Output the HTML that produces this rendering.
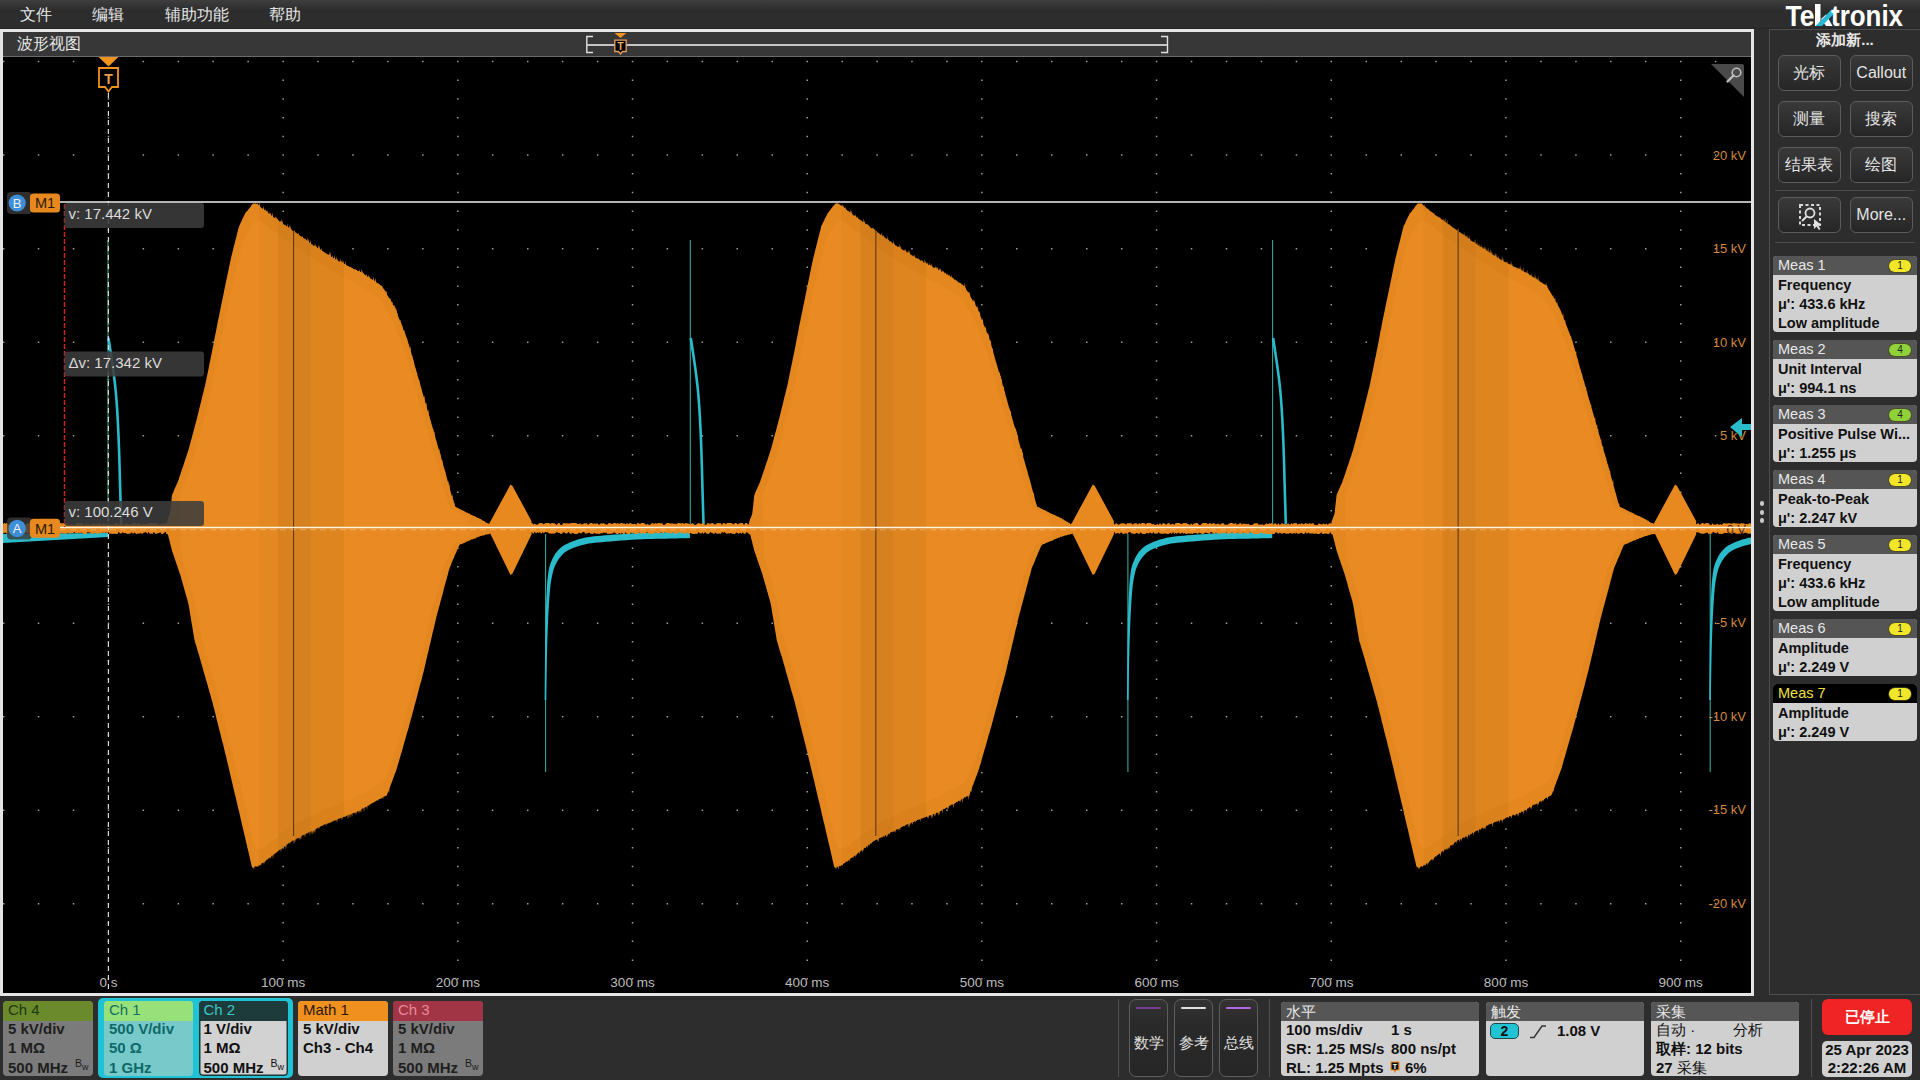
<!DOCTYPE html><html><head><meta charset="utf-8"><title>scope</title><style>
html,body{margin:0;padding:0}
body{width:1920px;height:1080px;overflow:hidden;background:#2d2d2d;font-family:"Liberation Sans",sans-serif;position:relative}
.a{position:absolute}
.menu{left:0;top:0;width:1920px;height:29px;background:linear-gradient(#3e3e3e 0px,#2c2c2c 11px,#2e2e2e 27px,#242424 29px)}
.mt{top:5px;font-size:16px;color:#e6e6e6;line-height:20px}
.frame{left:0;top:29px;width:1748px;height:961px;border:3px solid #e4e4e4;border-right-width:3px}
.title{left:3px;top:32px;width:1748px;height:24px;background:#373737;border-bottom:1px solid #6a6a6a}
.plotbg{left:3px;top:57px;width:1748px;height:936px;background:#000}
.rpanel{left:1769px;top:29px;width:151px;height:964px;border-left:1px solid #4e4e4e;border-top:1px solid #4e4e4e;border-bottom:1px solid #4e4e4e}
.btn{width:62.5px;height:36px;border:1px solid #5c5c5c;border-radius:6px;background:linear-gradient(#393939,#262626);color:#e4e4e4;font-size:16px;text-align:center;line-height:34px;box-sizing:border-box}
.sep{height:1px;background:#4a4a4a}
.meas{left:1773px;width:144px;border-radius:4px;overflow:hidden;background:#d0d0d0}
.mh{height:19px;background:#555;color:#e8e8e8;font-size:14.5px;line-height:19px;padding-left:5px;position:relative}
.mb{color:#111;font-weight:bold;font-size:14.5px;line-height:19px;padding-left:5px;position:relative;top:1px}
.badge{position:absolute;right:6px;top:4px;width:22px;height:11.5px;border-radius:6px;background:#f2e62a;color:#222;font-size:10px;line-height:11.5px;text-align:center;box-shadow:0 0 0 0.8px #4a4a1a}
.green{background:#8ed13a}
.card{top:1001px;height:75px;border-radius:4px;overflow:hidden}
.ch{height:19.5px;font-size:15px;line-height:18px;padding-left:5px}
.cl{position:absolute;left:5px;font-weight:bold;font-size:15px;line-height:19px;white-space:nowrap}
.bw{position:absolute;left:67px;top:-4px;font-size:10.5px;font-weight:normal}
.vbtn{top:999px;width:39px;height:78px;border:1px solid #5e5e5e;border-radius:7px;background:linear-gradient(#333,#2a2a2a 30%,#262626);box-sizing:border-box;color:#e0e0e0;font-size:15px;text-align:center}
.vbtn .ln{position:absolute;left:6px;right:6px;top:7px;height:2px;border-radius:2px}
.vsep{top:999px;width:1px;height:78px;background:#505050}
.ic{top:1002px;height:74px;border-radius:4px;overflow:hidden;background:#d0d0d0}
.ich{height:19px;background:#565656;color:#e8e8e8;font-size:15px;line-height:19px;padding-left:5px}
.icb{color:#111;font-weight:bold;font-size:15px;line-height:19px;padding-left:5px;position:relative;top:-1px}
</style></head><body><div class="a menu"></div><div class="a mt" style="left:20px">文件</div><div class="a mt" style="left:92px">编辑</div><div class="a mt" style="left:165px">辅助功能</div><div class="a mt" style="left:269px">帮助</div><svg class="a" style="left:1780px;top:0px" width="130" height="30" viewBox="1780 0 130 30" font-family="Liberation Sans, sans-serif" font-weight="bold"><text x="1785.5" y="26" font-size="30" fill="#fff" textLength="29" lengthAdjust="spacingAndGlyphs">Te</text><path d="M1815 4 H1820.5 V26 H1815Z" fill="#fff"/><path d="M1821 19 L1826 14.5 L1832.5 26 H1826Z" fill="#fff"/><path d="M1815.5 26 H1822 L1838 9.5 H1831.5Z" fill="#2bb8d6"/><text x="1831" y="26" font-size="30" fill="#fff" textLength="72" lengthAdjust="spacingAndGlyphs">tronix</text></svg><div class="a frame"></div><div class="a title"></div><div class="a" style="left:17px;top:34px;font-size:16px;color:#e8e8e8;line-height:20px">波形视图</div><svg class="a" style="left:580px;top:30px" width="600" height="26" viewBox="580 30 600 26"><path d="M593 36.5 H586.8 V52.5 H593" stroke="#e0e0e0" stroke-width="1.4" fill="none"/><path d="M1161 36.5 H1167.5 V52.5 H1161" stroke="#e0e0e0" stroke-width="1.4" fill="none"/><path d="M587 45 H1167" stroke="#c4c4c4" stroke-width="2" fill="none"/><path d="M614.5 33 H626.5 L620.5 38Z" fill="#f0921e"/><path d="M614.8 40.2 H626.2 V51.5 H622.5 L620.5 54 L618.5 51.5 H614.8Z" fill="#000" stroke="#e8a060" stroke-width="1.3"/><text x="620.5" y="50" text-anchor="middle" font-family="Liberation Sans" font-weight="bold" font-size="10" fill="#e8b070">T</text></svg><div class="a plotbg"></div><svg class="a" style="left:3px;top:57px" width="1748" height="936" viewBox="3 57 1748 936" font-family="Liberation Sans, sans-serif"><path d="M2.9 60.8h1.5v1.5h-1.5zM2.9 154.3h1.5v1.5h-1.5zM2.9 247.9h1.5v1.5h-1.5zM2.9 341.6h1.5v1.5h-1.5zM2.9 435.1h1.5v1.5h-1.5zM2.9 528.8h1.5v1.5h-1.5zM2.9 622.4h1.5v1.5h-1.5zM2.9 716.0h1.5v1.5h-1.5zM2.9 809.5h1.5v1.5h-1.5zM2.9 903.1h1.5v1.5h-1.5zM37.8 60.8h1.5v1.5h-1.5zM37.8 154.3h1.5v1.5h-1.5zM37.8 247.9h1.5v1.5h-1.5zM37.8 341.6h1.5v1.5h-1.5zM37.8 435.1h1.5v1.5h-1.5zM37.8 528.8h1.5v1.5h-1.5zM37.8 622.4h1.5v1.5h-1.5zM37.8 716.0h1.5v1.5h-1.5zM37.8 809.5h1.5v1.5h-1.5zM37.8 903.1h1.5v1.5h-1.5zM72.8 60.8h1.5v1.5h-1.5zM72.8 154.3h1.5v1.5h-1.5zM72.8 247.9h1.5v1.5h-1.5zM72.8 341.6h1.5v1.5h-1.5zM72.8 435.1h1.5v1.5h-1.5zM72.8 528.8h1.5v1.5h-1.5zM72.8 622.4h1.5v1.5h-1.5zM72.8 716.0h1.5v1.5h-1.5zM72.8 809.5h1.5v1.5h-1.5zM72.8 903.1h1.5v1.5h-1.5zM107.7 60.8h1.5v1.5h-1.5zM107.7 79.5h1.5v1.5h-1.5zM107.7 98.2h1.5v1.5h-1.5zM107.7 117.0h1.5v1.5h-1.5zM107.7 135.7h1.5v1.5h-1.5zM107.7 154.3h1.5v1.5h-1.5zM107.7 173.1h1.5v1.5h-1.5zM107.7 191.8h1.5v1.5h-1.5zM107.7 210.6h1.5v1.5h-1.5zM107.7 229.2h1.5v1.5h-1.5zM107.7 247.9h1.5v1.5h-1.5zM107.7 266.6h1.5v1.5h-1.5zM107.7 285.4h1.5v1.5h-1.5zM107.7 304.1h1.5v1.5h-1.5zM107.7 322.9h1.5v1.5h-1.5zM107.7 341.6h1.5v1.5h-1.5zM107.7 360.2h1.5v1.5h-1.5zM107.7 378.9h1.5v1.5h-1.5zM107.7 397.8h1.5v1.5h-1.5zM107.7 416.4h1.5v1.5h-1.5zM107.7 435.1h1.5v1.5h-1.5zM107.7 453.9h1.5v1.5h-1.5zM107.7 472.6h1.5v1.5h-1.5zM107.7 491.4h1.5v1.5h-1.5zM107.7 510.1h1.5v1.5h-1.5zM107.7 528.8h1.5v1.5h-1.5zM107.7 547.5h1.5v1.5h-1.5zM107.7 566.1h1.5v1.5h-1.5zM107.7 585.0h1.5v1.5h-1.5zM107.7 603.6h1.5v1.5h-1.5zM107.7 622.4h1.5v1.5h-1.5zM107.7 641.0h1.5v1.5h-1.5zM107.7 659.8h1.5v1.5h-1.5zM107.7 678.5h1.5v1.5h-1.5zM107.7 697.2h1.5v1.5h-1.5zM107.7 716.0h1.5v1.5h-1.5zM107.7 734.6h1.5v1.5h-1.5zM107.7 753.4h1.5v1.5h-1.5zM107.7 772.1h1.5v1.5h-1.5zM107.7 790.9h1.5v1.5h-1.5zM107.7 809.5h1.5v1.5h-1.5zM107.7 828.2h1.5v1.5h-1.5zM107.7 847.0h1.5v1.5h-1.5zM107.7 865.8h1.5v1.5h-1.5zM107.7 884.5h1.5v1.5h-1.5zM107.7 903.1h1.5v1.5h-1.5zM107.7 921.9h1.5v1.5h-1.5zM107.7 940.5h1.5v1.5h-1.5zM107.7 959.4h1.5v1.5h-1.5zM107.7 978.0h1.5v1.5h-1.5zM142.6 60.8h1.5v1.5h-1.5zM142.6 154.3h1.5v1.5h-1.5zM142.6 247.9h1.5v1.5h-1.5zM142.6 341.6h1.5v1.5h-1.5zM142.6 435.1h1.5v1.5h-1.5zM142.6 528.8h1.5v1.5h-1.5zM142.6 622.4h1.5v1.5h-1.5zM142.6 716.0h1.5v1.5h-1.5zM142.6 809.5h1.5v1.5h-1.5zM142.6 903.1h1.5v1.5h-1.5zM177.6 60.8h1.5v1.5h-1.5zM177.6 154.3h1.5v1.5h-1.5zM177.6 247.9h1.5v1.5h-1.5zM177.6 341.6h1.5v1.5h-1.5zM177.6 435.1h1.5v1.5h-1.5zM177.6 528.8h1.5v1.5h-1.5zM177.6 622.4h1.5v1.5h-1.5zM177.6 716.0h1.5v1.5h-1.5zM177.6 809.5h1.5v1.5h-1.5zM177.6 903.1h1.5v1.5h-1.5zM212.4 60.8h1.5v1.5h-1.5zM212.4 154.3h1.5v1.5h-1.5zM212.4 247.9h1.5v1.5h-1.5zM212.4 341.6h1.5v1.5h-1.5zM212.4 435.1h1.5v1.5h-1.5zM212.4 528.8h1.5v1.5h-1.5zM212.4 622.4h1.5v1.5h-1.5zM212.4 716.0h1.5v1.5h-1.5zM212.4 809.5h1.5v1.5h-1.5zM212.4 903.1h1.5v1.5h-1.5zM247.4 60.8h1.5v1.5h-1.5zM247.4 154.3h1.5v1.5h-1.5zM247.4 247.9h1.5v1.5h-1.5zM247.4 341.6h1.5v1.5h-1.5zM247.4 435.1h1.5v1.5h-1.5zM247.4 528.8h1.5v1.5h-1.5zM247.4 622.4h1.5v1.5h-1.5zM247.4 716.0h1.5v1.5h-1.5zM247.4 809.5h1.5v1.5h-1.5zM247.4 903.1h1.5v1.5h-1.5zM282.4 60.8h1.5v1.5h-1.5zM282.4 79.5h1.5v1.5h-1.5zM282.4 98.2h1.5v1.5h-1.5zM282.4 117.0h1.5v1.5h-1.5zM282.4 135.7h1.5v1.5h-1.5zM282.4 154.3h1.5v1.5h-1.5zM282.4 173.1h1.5v1.5h-1.5zM282.4 191.8h1.5v1.5h-1.5zM282.4 210.6h1.5v1.5h-1.5zM282.4 229.2h1.5v1.5h-1.5zM282.4 247.9h1.5v1.5h-1.5zM282.4 266.6h1.5v1.5h-1.5zM282.4 285.4h1.5v1.5h-1.5zM282.4 304.1h1.5v1.5h-1.5zM282.4 322.9h1.5v1.5h-1.5zM282.4 341.6h1.5v1.5h-1.5zM282.4 360.2h1.5v1.5h-1.5zM282.4 378.9h1.5v1.5h-1.5zM282.4 397.8h1.5v1.5h-1.5zM282.4 416.4h1.5v1.5h-1.5zM282.4 435.1h1.5v1.5h-1.5zM282.4 453.9h1.5v1.5h-1.5zM282.4 472.6h1.5v1.5h-1.5zM282.4 491.4h1.5v1.5h-1.5zM282.4 510.1h1.5v1.5h-1.5zM282.4 528.8h1.5v1.5h-1.5zM282.4 547.5h1.5v1.5h-1.5zM282.4 566.1h1.5v1.5h-1.5zM282.4 585.0h1.5v1.5h-1.5zM282.4 603.6h1.5v1.5h-1.5zM282.4 622.4h1.5v1.5h-1.5zM282.4 641.0h1.5v1.5h-1.5zM282.4 659.8h1.5v1.5h-1.5zM282.4 678.5h1.5v1.5h-1.5zM282.4 697.2h1.5v1.5h-1.5zM282.4 716.0h1.5v1.5h-1.5zM282.4 734.6h1.5v1.5h-1.5zM282.4 753.4h1.5v1.5h-1.5zM282.4 772.1h1.5v1.5h-1.5zM282.4 790.9h1.5v1.5h-1.5zM282.4 809.5h1.5v1.5h-1.5zM282.4 828.2h1.5v1.5h-1.5zM282.4 847.0h1.5v1.5h-1.5zM282.4 865.8h1.5v1.5h-1.5zM282.4 884.5h1.5v1.5h-1.5zM282.4 903.1h1.5v1.5h-1.5zM282.4 921.9h1.5v1.5h-1.5zM282.4 940.5h1.5v1.5h-1.5zM282.4 959.4h1.5v1.5h-1.5zM282.4 978.0h1.5v1.5h-1.5zM317.2 60.8h1.5v1.5h-1.5zM317.2 154.3h1.5v1.5h-1.5zM317.2 247.9h1.5v1.5h-1.5zM317.2 341.6h1.5v1.5h-1.5zM317.2 435.1h1.5v1.5h-1.5zM317.2 528.8h1.5v1.5h-1.5zM317.2 622.4h1.5v1.5h-1.5zM317.2 716.0h1.5v1.5h-1.5zM317.2 809.5h1.5v1.5h-1.5zM317.2 903.1h1.5v1.5h-1.5zM352.2 60.8h1.5v1.5h-1.5zM352.2 154.3h1.5v1.5h-1.5zM352.2 247.9h1.5v1.5h-1.5zM352.2 341.6h1.5v1.5h-1.5zM352.2 435.1h1.5v1.5h-1.5zM352.2 528.8h1.5v1.5h-1.5zM352.2 622.4h1.5v1.5h-1.5zM352.2 716.0h1.5v1.5h-1.5zM352.2 809.5h1.5v1.5h-1.5zM352.2 903.1h1.5v1.5h-1.5zM387.1 60.8h1.5v1.5h-1.5zM387.1 154.3h1.5v1.5h-1.5zM387.1 247.9h1.5v1.5h-1.5zM387.1 341.6h1.5v1.5h-1.5zM387.1 435.1h1.5v1.5h-1.5zM387.1 528.8h1.5v1.5h-1.5zM387.1 622.4h1.5v1.5h-1.5zM387.1 716.0h1.5v1.5h-1.5zM387.1 809.5h1.5v1.5h-1.5zM387.1 903.1h1.5v1.5h-1.5zM422.1 60.8h1.5v1.5h-1.5zM422.1 154.3h1.5v1.5h-1.5zM422.1 247.9h1.5v1.5h-1.5zM422.1 341.6h1.5v1.5h-1.5zM422.1 435.1h1.5v1.5h-1.5zM422.1 528.8h1.5v1.5h-1.5zM422.1 622.4h1.5v1.5h-1.5zM422.1 716.0h1.5v1.5h-1.5zM422.1 809.5h1.5v1.5h-1.5zM422.1 903.1h1.5v1.5h-1.5zM457.1 60.8h1.5v1.5h-1.5zM457.1 79.5h1.5v1.5h-1.5zM457.1 98.2h1.5v1.5h-1.5zM457.1 117.0h1.5v1.5h-1.5zM457.1 135.7h1.5v1.5h-1.5zM457.1 154.3h1.5v1.5h-1.5zM457.1 173.1h1.5v1.5h-1.5zM457.1 191.8h1.5v1.5h-1.5zM457.1 210.6h1.5v1.5h-1.5zM457.1 229.2h1.5v1.5h-1.5zM457.1 247.9h1.5v1.5h-1.5zM457.1 266.6h1.5v1.5h-1.5zM457.1 285.4h1.5v1.5h-1.5zM457.1 304.1h1.5v1.5h-1.5zM457.1 322.9h1.5v1.5h-1.5zM457.1 341.6h1.5v1.5h-1.5zM457.1 360.2h1.5v1.5h-1.5zM457.1 378.9h1.5v1.5h-1.5zM457.1 397.8h1.5v1.5h-1.5zM457.1 416.4h1.5v1.5h-1.5zM457.1 435.1h1.5v1.5h-1.5zM457.1 453.9h1.5v1.5h-1.5zM457.1 472.6h1.5v1.5h-1.5zM457.1 491.4h1.5v1.5h-1.5zM457.1 510.1h1.5v1.5h-1.5zM457.1 528.8h1.5v1.5h-1.5zM457.1 547.5h1.5v1.5h-1.5zM457.1 566.1h1.5v1.5h-1.5zM457.1 585.0h1.5v1.5h-1.5zM457.1 603.6h1.5v1.5h-1.5zM457.1 622.4h1.5v1.5h-1.5zM457.1 641.0h1.5v1.5h-1.5zM457.1 659.8h1.5v1.5h-1.5zM457.1 678.5h1.5v1.5h-1.5zM457.1 697.2h1.5v1.5h-1.5zM457.1 716.0h1.5v1.5h-1.5zM457.1 734.6h1.5v1.5h-1.5zM457.1 753.4h1.5v1.5h-1.5zM457.1 772.1h1.5v1.5h-1.5zM457.1 790.9h1.5v1.5h-1.5zM457.1 809.5h1.5v1.5h-1.5zM457.1 828.2h1.5v1.5h-1.5zM457.1 847.0h1.5v1.5h-1.5zM457.1 865.8h1.5v1.5h-1.5zM457.1 884.5h1.5v1.5h-1.5zM457.1 903.1h1.5v1.5h-1.5zM457.1 921.9h1.5v1.5h-1.5zM457.1 940.5h1.5v1.5h-1.5zM457.1 959.4h1.5v1.5h-1.5zM457.1 978.0h1.5v1.5h-1.5zM491.9 60.8h1.5v1.5h-1.5zM491.9 154.3h1.5v1.5h-1.5zM491.9 247.9h1.5v1.5h-1.5zM491.9 341.6h1.5v1.5h-1.5zM491.9 435.1h1.5v1.5h-1.5zM491.9 528.8h1.5v1.5h-1.5zM491.9 622.4h1.5v1.5h-1.5zM491.9 716.0h1.5v1.5h-1.5zM491.9 809.5h1.5v1.5h-1.5zM491.9 903.1h1.5v1.5h-1.5zM527.0 60.8h1.5v1.5h-1.5zM527.0 154.3h1.5v1.5h-1.5zM527.0 247.9h1.5v1.5h-1.5zM527.0 341.6h1.5v1.5h-1.5zM527.0 435.1h1.5v1.5h-1.5zM527.0 528.8h1.5v1.5h-1.5zM527.0 622.4h1.5v1.5h-1.5zM527.0 716.0h1.5v1.5h-1.5zM527.0 809.5h1.5v1.5h-1.5zM527.0 903.1h1.5v1.5h-1.5zM561.9 60.8h1.5v1.5h-1.5zM561.9 154.3h1.5v1.5h-1.5zM561.9 247.9h1.5v1.5h-1.5zM561.9 341.6h1.5v1.5h-1.5zM561.9 435.1h1.5v1.5h-1.5zM561.9 528.8h1.5v1.5h-1.5zM561.9 622.4h1.5v1.5h-1.5zM561.9 716.0h1.5v1.5h-1.5zM561.9 809.5h1.5v1.5h-1.5zM561.9 903.1h1.5v1.5h-1.5zM596.9 60.8h1.5v1.5h-1.5zM596.9 154.3h1.5v1.5h-1.5zM596.9 247.9h1.5v1.5h-1.5zM596.9 341.6h1.5v1.5h-1.5zM596.9 435.1h1.5v1.5h-1.5zM596.9 528.8h1.5v1.5h-1.5zM596.9 622.4h1.5v1.5h-1.5zM596.9 716.0h1.5v1.5h-1.5zM596.9 809.5h1.5v1.5h-1.5zM596.9 903.1h1.5v1.5h-1.5zM631.8 60.8h1.5v1.5h-1.5zM631.8 79.5h1.5v1.5h-1.5zM631.8 98.2h1.5v1.5h-1.5zM631.8 117.0h1.5v1.5h-1.5zM631.8 135.7h1.5v1.5h-1.5zM631.8 154.3h1.5v1.5h-1.5zM631.8 173.1h1.5v1.5h-1.5zM631.8 191.8h1.5v1.5h-1.5zM631.8 210.6h1.5v1.5h-1.5zM631.8 229.2h1.5v1.5h-1.5zM631.8 247.9h1.5v1.5h-1.5zM631.8 266.6h1.5v1.5h-1.5zM631.8 285.4h1.5v1.5h-1.5zM631.8 304.1h1.5v1.5h-1.5zM631.8 322.9h1.5v1.5h-1.5zM631.8 341.6h1.5v1.5h-1.5zM631.8 360.2h1.5v1.5h-1.5zM631.8 378.9h1.5v1.5h-1.5zM631.8 397.8h1.5v1.5h-1.5zM631.8 416.4h1.5v1.5h-1.5zM631.8 435.1h1.5v1.5h-1.5zM631.8 453.9h1.5v1.5h-1.5zM631.8 472.6h1.5v1.5h-1.5zM631.8 491.4h1.5v1.5h-1.5zM631.8 510.1h1.5v1.5h-1.5zM631.8 528.8h1.5v1.5h-1.5zM631.8 547.5h1.5v1.5h-1.5zM631.8 566.1h1.5v1.5h-1.5zM631.8 585.0h1.5v1.5h-1.5zM631.8 603.6h1.5v1.5h-1.5zM631.8 622.4h1.5v1.5h-1.5zM631.8 641.0h1.5v1.5h-1.5zM631.8 659.8h1.5v1.5h-1.5zM631.8 678.5h1.5v1.5h-1.5zM631.8 697.2h1.5v1.5h-1.5zM631.8 716.0h1.5v1.5h-1.5zM631.8 734.6h1.5v1.5h-1.5zM631.8 753.4h1.5v1.5h-1.5zM631.8 772.1h1.5v1.5h-1.5zM631.8 790.9h1.5v1.5h-1.5zM631.8 809.5h1.5v1.5h-1.5zM631.8 828.2h1.5v1.5h-1.5zM631.8 847.0h1.5v1.5h-1.5zM631.8 865.8h1.5v1.5h-1.5zM631.8 884.5h1.5v1.5h-1.5zM631.8 903.1h1.5v1.5h-1.5zM631.8 921.9h1.5v1.5h-1.5zM631.8 940.5h1.5v1.5h-1.5zM631.8 959.4h1.5v1.5h-1.5zM631.8 978.0h1.5v1.5h-1.5zM666.6 60.8h1.5v1.5h-1.5zM666.6 154.3h1.5v1.5h-1.5zM666.6 247.9h1.5v1.5h-1.5zM666.6 341.6h1.5v1.5h-1.5zM666.6 435.1h1.5v1.5h-1.5zM666.6 528.8h1.5v1.5h-1.5zM666.6 622.4h1.5v1.5h-1.5zM666.6 716.0h1.5v1.5h-1.5zM666.6 809.5h1.5v1.5h-1.5zM666.6 903.1h1.5v1.5h-1.5zM701.6 60.8h1.5v1.5h-1.5zM701.6 154.3h1.5v1.5h-1.5zM701.6 247.9h1.5v1.5h-1.5zM701.6 341.6h1.5v1.5h-1.5zM701.6 435.1h1.5v1.5h-1.5zM701.6 528.8h1.5v1.5h-1.5zM701.6 622.4h1.5v1.5h-1.5zM701.6 716.0h1.5v1.5h-1.5zM701.6 809.5h1.5v1.5h-1.5zM701.6 903.1h1.5v1.5h-1.5zM736.5 60.8h1.5v1.5h-1.5zM736.5 154.3h1.5v1.5h-1.5zM736.5 247.9h1.5v1.5h-1.5zM736.5 341.6h1.5v1.5h-1.5zM736.5 435.1h1.5v1.5h-1.5zM736.5 528.8h1.5v1.5h-1.5zM736.5 622.4h1.5v1.5h-1.5zM736.5 716.0h1.5v1.5h-1.5zM736.5 809.5h1.5v1.5h-1.5zM736.5 903.1h1.5v1.5h-1.5zM771.5 60.8h1.5v1.5h-1.5zM771.5 154.3h1.5v1.5h-1.5zM771.5 247.9h1.5v1.5h-1.5zM771.5 341.6h1.5v1.5h-1.5zM771.5 435.1h1.5v1.5h-1.5zM771.5 528.8h1.5v1.5h-1.5zM771.5 622.4h1.5v1.5h-1.5zM771.5 716.0h1.5v1.5h-1.5zM771.5 809.5h1.5v1.5h-1.5zM771.5 903.1h1.5v1.5h-1.5zM806.5 60.8h1.5v1.5h-1.5zM806.5 79.5h1.5v1.5h-1.5zM806.5 98.2h1.5v1.5h-1.5zM806.5 117.0h1.5v1.5h-1.5zM806.5 135.7h1.5v1.5h-1.5zM806.5 154.3h1.5v1.5h-1.5zM806.5 173.1h1.5v1.5h-1.5zM806.5 191.8h1.5v1.5h-1.5zM806.5 210.6h1.5v1.5h-1.5zM806.5 229.2h1.5v1.5h-1.5zM806.5 247.9h1.5v1.5h-1.5zM806.5 266.6h1.5v1.5h-1.5zM806.5 285.4h1.5v1.5h-1.5zM806.5 304.1h1.5v1.5h-1.5zM806.5 322.9h1.5v1.5h-1.5zM806.5 341.6h1.5v1.5h-1.5zM806.5 360.2h1.5v1.5h-1.5zM806.5 378.9h1.5v1.5h-1.5zM806.5 397.8h1.5v1.5h-1.5zM806.5 416.4h1.5v1.5h-1.5zM806.5 435.1h1.5v1.5h-1.5zM806.5 453.9h1.5v1.5h-1.5zM806.5 472.6h1.5v1.5h-1.5zM806.5 491.4h1.5v1.5h-1.5zM806.5 510.1h1.5v1.5h-1.5zM806.5 528.8h1.5v1.5h-1.5zM806.5 547.5h1.5v1.5h-1.5zM806.5 566.1h1.5v1.5h-1.5zM806.5 585.0h1.5v1.5h-1.5zM806.5 603.6h1.5v1.5h-1.5zM806.5 622.4h1.5v1.5h-1.5zM806.5 641.0h1.5v1.5h-1.5zM806.5 659.8h1.5v1.5h-1.5zM806.5 678.5h1.5v1.5h-1.5zM806.5 697.2h1.5v1.5h-1.5zM806.5 716.0h1.5v1.5h-1.5zM806.5 734.6h1.5v1.5h-1.5zM806.5 753.4h1.5v1.5h-1.5zM806.5 772.1h1.5v1.5h-1.5zM806.5 790.9h1.5v1.5h-1.5zM806.5 809.5h1.5v1.5h-1.5zM806.5 828.2h1.5v1.5h-1.5zM806.5 847.0h1.5v1.5h-1.5zM806.5 865.8h1.5v1.5h-1.5zM806.5 884.5h1.5v1.5h-1.5zM806.5 903.1h1.5v1.5h-1.5zM806.5 921.9h1.5v1.5h-1.5zM806.5 940.5h1.5v1.5h-1.5zM806.5 959.4h1.5v1.5h-1.5zM806.5 978.0h1.5v1.5h-1.5zM841.4 60.8h1.5v1.5h-1.5zM841.4 154.3h1.5v1.5h-1.5zM841.4 247.9h1.5v1.5h-1.5zM841.4 341.6h1.5v1.5h-1.5zM841.4 435.1h1.5v1.5h-1.5zM841.4 528.8h1.5v1.5h-1.5zM841.4 622.4h1.5v1.5h-1.5zM841.4 716.0h1.5v1.5h-1.5zM841.4 809.5h1.5v1.5h-1.5zM841.4 903.1h1.5v1.5h-1.5zM876.4 60.8h1.5v1.5h-1.5zM876.4 154.3h1.5v1.5h-1.5zM876.4 247.9h1.5v1.5h-1.5zM876.4 341.6h1.5v1.5h-1.5zM876.4 435.1h1.5v1.5h-1.5zM876.4 528.8h1.5v1.5h-1.5zM876.4 622.4h1.5v1.5h-1.5zM876.4 716.0h1.5v1.5h-1.5zM876.4 809.5h1.5v1.5h-1.5zM876.4 903.1h1.5v1.5h-1.5zM911.2 60.8h1.5v1.5h-1.5zM911.2 154.3h1.5v1.5h-1.5zM911.2 247.9h1.5v1.5h-1.5zM911.2 341.6h1.5v1.5h-1.5zM911.2 435.1h1.5v1.5h-1.5zM911.2 528.8h1.5v1.5h-1.5zM911.2 622.4h1.5v1.5h-1.5zM911.2 716.0h1.5v1.5h-1.5zM911.2 809.5h1.5v1.5h-1.5zM911.2 903.1h1.5v1.5h-1.5zM946.2 60.8h1.5v1.5h-1.5zM946.2 154.3h1.5v1.5h-1.5zM946.2 247.9h1.5v1.5h-1.5zM946.2 341.6h1.5v1.5h-1.5zM946.2 435.1h1.5v1.5h-1.5zM946.2 528.8h1.5v1.5h-1.5zM946.2 622.4h1.5v1.5h-1.5zM946.2 716.0h1.5v1.5h-1.5zM946.2 809.5h1.5v1.5h-1.5zM946.2 903.1h1.5v1.5h-1.5zM981.1 60.8h1.5v1.5h-1.5zM981.1 79.5h1.5v1.5h-1.5zM981.1 98.2h1.5v1.5h-1.5zM981.1 117.0h1.5v1.5h-1.5zM981.1 135.7h1.5v1.5h-1.5zM981.1 154.3h1.5v1.5h-1.5zM981.1 173.1h1.5v1.5h-1.5zM981.1 191.8h1.5v1.5h-1.5zM981.1 210.6h1.5v1.5h-1.5zM981.1 229.2h1.5v1.5h-1.5zM981.1 247.9h1.5v1.5h-1.5zM981.1 266.6h1.5v1.5h-1.5zM981.1 285.4h1.5v1.5h-1.5zM981.1 304.1h1.5v1.5h-1.5zM981.1 322.9h1.5v1.5h-1.5zM981.1 341.6h1.5v1.5h-1.5zM981.1 360.2h1.5v1.5h-1.5zM981.1 378.9h1.5v1.5h-1.5zM981.1 397.8h1.5v1.5h-1.5zM981.1 416.4h1.5v1.5h-1.5zM981.1 435.1h1.5v1.5h-1.5zM981.1 453.9h1.5v1.5h-1.5zM981.1 472.6h1.5v1.5h-1.5zM981.1 491.4h1.5v1.5h-1.5zM981.1 510.1h1.5v1.5h-1.5zM981.1 528.8h1.5v1.5h-1.5zM981.1 547.5h1.5v1.5h-1.5zM981.1 566.1h1.5v1.5h-1.5zM981.1 585.0h1.5v1.5h-1.5zM981.1 603.6h1.5v1.5h-1.5zM981.1 622.4h1.5v1.5h-1.5zM981.1 641.0h1.5v1.5h-1.5zM981.1 659.8h1.5v1.5h-1.5zM981.1 678.5h1.5v1.5h-1.5zM981.1 697.2h1.5v1.5h-1.5zM981.1 716.0h1.5v1.5h-1.5zM981.1 734.6h1.5v1.5h-1.5zM981.1 753.4h1.5v1.5h-1.5zM981.1 772.1h1.5v1.5h-1.5zM981.1 790.9h1.5v1.5h-1.5zM981.1 809.5h1.5v1.5h-1.5zM981.1 828.2h1.5v1.5h-1.5zM981.1 847.0h1.5v1.5h-1.5zM981.1 865.8h1.5v1.5h-1.5zM981.1 884.5h1.5v1.5h-1.5zM981.1 903.1h1.5v1.5h-1.5zM981.1 921.9h1.5v1.5h-1.5zM981.1 940.5h1.5v1.5h-1.5zM981.1 959.4h1.5v1.5h-1.5zM981.1 978.0h1.5v1.5h-1.5zM1016.0 60.8h1.5v1.5h-1.5zM1016.0 154.3h1.5v1.5h-1.5zM1016.0 247.9h1.5v1.5h-1.5zM1016.0 341.6h1.5v1.5h-1.5zM1016.0 435.1h1.5v1.5h-1.5zM1016.0 528.8h1.5v1.5h-1.5zM1016.0 622.4h1.5v1.5h-1.5zM1016.0 716.0h1.5v1.5h-1.5zM1016.0 809.5h1.5v1.5h-1.5zM1016.0 903.1h1.5v1.5h-1.5zM1051.0 60.8h1.5v1.5h-1.5zM1051.0 154.3h1.5v1.5h-1.5zM1051.0 247.9h1.5v1.5h-1.5zM1051.0 341.6h1.5v1.5h-1.5zM1051.0 435.1h1.5v1.5h-1.5zM1051.0 528.8h1.5v1.5h-1.5zM1051.0 622.4h1.5v1.5h-1.5zM1051.0 716.0h1.5v1.5h-1.5zM1051.0 809.5h1.5v1.5h-1.5zM1051.0 903.1h1.5v1.5h-1.5zM1086.0 60.8h1.5v1.5h-1.5zM1086.0 154.3h1.5v1.5h-1.5zM1086.0 247.9h1.5v1.5h-1.5zM1086.0 341.6h1.5v1.5h-1.5zM1086.0 435.1h1.5v1.5h-1.5zM1086.0 528.8h1.5v1.5h-1.5zM1086.0 622.4h1.5v1.5h-1.5zM1086.0 716.0h1.5v1.5h-1.5zM1086.0 809.5h1.5v1.5h-1.5zM1086.0 903.1h1.5v1.5h-1.5zM1121.0 60.8h1.5v1.5h-1.5zM1121.0 154.3h1.5v1.5h-1.5zM1121.0 247.9h1.5v1.5h-1.5zM1121.0 341.6h1.5v1.5h-1.5zM1121.0 435.1h1.5v1.5h-1.5zM1121.0 528.8h1.5v1.5h-1.5zM1121.0 622.4h1.5v1.5h-1.5zM1121.0 716.0h1.5v1.5h-1.5zM1121.0 809.5h1.5v1.5h-1.5zM1121.0 903.1h1.5v1.5h-1.5zM1155.8 60.8h1.5v1.5h-1.5zM1155.8 79.5h1.5v1.5h-1.5zM1155.8 98.2h1.5v1.5h-1.5zM1155.8 117.0h1.5v1.5h-1.5zM1155.8 135.7h1.5v1.5h-1.5zM1155.8 154.3h1.5v1.5h-1.5zM1155.8 173.1h1.5v1.5h-1.5zM1155.8 191.8h1.5v1.5h-1.5zM1155.8 210.6h1.5v1.5h-1.5zM1155.8 229.2h1.5v1.5h-1.5zM1155.8 247.9h1.5v1.5h-1.5zM1155.8 266.6h1.5v1.5h-1.5zM1155.8 285.4h1.5v1.5h-1.5zM1155.8 304.1h1.5v1.5h-1.5zM1155.8 322.9h1.5v1.5h-1.5zM1155.8 341.6h1.5v1.5h-1.5zM1155.8 360.2h1.5v1.5h-1.5zM1155.8 378.9h1.5v1.5h-1.5zM1155.8 397.8h1.5v1.5h-1.5zM1155.8 416.4h1.5v1.5h-1.5zM1155.8 435.1h1.5v1.5h-1.5zM1155.8 453.9h1.5v1.5h-1.5zM1155.8 472.6h1.5v1.5h-1.5zM1155.8 491.4h1.5v1.5h-1.5zM1155.8 510.1h1.5v1.5h-1.5zM1155.8 528.8h1.5v1.5h-1.5zM1155.8 547.5h1.5v1.5h-1.5zM1155.8 566.1h1.5v1.5h-1.5zM1155.8 585.0h1.5v1.5h-1.5zM1155.8 603.6h1.5v1.5h-1.5zM1155.8 622.4h1.5v1.5h-1.5zM1155.8 641.0h1.5v1.5h-1.5zM1155.8 659.8h1.5v1.5h-1.5zM1155.8 678.5h1.5v1.5h-1.5zM1155.8 697.2h1.5v1.5h-1.5zM1155.8 716.0h1.5v1.5h-1.5zM1155.8 734.6h1.5v1.5h-1.5zM1155.8 753.4h1.5v1.5h-1.5zM1155.8 772.1h1.5v1.5h-1.5zM1155.8 790.9h1.5v1.5h-1.5zM1155.8 809.5h1.5v1.5h-1.5zM1155.8 828.2h1.5v1.5h-1.5zM1155.8 847.0h1.5v1.5h-1.5zM1155.8 865.8h1.5v1.5h-1.5zM1155.8 884.5h1.5v1.5h-1.5zM1155.8 903.1h1.5v1.5h-1.5zM1155.8 921.9h1.5v1.5h-1.5zM1155.8 940.5h1.5v1.5h-1.5zM1155.8 959.4h1.5v1.5h-1.5zM1155.8 978.0h1.5v1.5h-1.5zM1190.8 60.8h1.5v1.5h-1.5zM1190.8 154.3h1.5v1.5h-1.5zM1190.8 247.9h1.5v1.5h-1.5zM1190.8 341.6h1.5v1.5h-1.5zM1190.8 435.1h1.5v1.5h-1.5zM1190.8 528.8h1.5v1.5h-1.5zM1190.8 622.4h1.5v1.5h-1.5zM1190.8 716.0h1.5v1.5h-1.5zM1190.8 809.5h1.5v1.5h-1.5zM1190.8 903.1h1.5v1.5h-1.5zM1225.8 60.8h1.5v1.5h-1.5zM1225.8 154.3h1.5v1.5h-1.5zM1225.8 247.9h1.5v1.5h-1.5zM1225.8 341.6h1.5v1.5h-1.5zM1225.8 435.1h1.5v1.5h-1.5zM1225.8 528.8h1.5v1.5h-1.5zM1225.8 622.4h1.5v1.5h-1.5zM1225.8 716.0h1.5v1.5h-1.5zM1225.8 809.5h1.5v1.5h-1.5zM1225.8 903.1h1.5v1.5h-1.5zM1260.7 60.8h1.5v1.5h-1.5zM1260.7 154.3h1.5v1.5h-1.5zM1260.7 247.9h1.5v1.5h-1.5zM1260.7 341.6h1.5v1.5h-1.5zM1260.7 435.1h1.5v1.5h-1.5zM1260.7 528.8h1.5v1.5h-1.5zM1260.7 622.4h1.5v1.5h-1.5zM1260.7 716.0h1.5v1.5h-1.5zM1260.7 809.5h1.5v1.5h-1.5zM1260.7 903.1h1.5v1.5h-1.5zM1295.7 60.8h1.5v1.5h-1.5zM1295.7 154.3h1.5v1.5h-1.5zM1295.7 247.9h1.5v1.5h-1.5zM1295.7 341.6h1.5v1.5h-1.5zM1295.7 435.1h1.5v1.5h-1.5zM1295.7 528.8h1.5v1.5h-1.5zM1295.7 622.4h1.5v1.5h-1.5zM1295.7 716.0h1.5v1.5h-1.5zM1295.7 809.5h1.5v1.5h-1.5zM1295.7 903.1h1.5v1.5h-1.5zM1330.5 60.8h1.5v1.5h-1.5zM1330.5 79.5h1.5v1.5h-1.5zM1330.5 98.2h1.5v1.5h-1.5zM1330.5 117.0h1.5v1.5h-1.5zM1330.5 135.7h1.5v1.5h-1.5zM1330.5 154.3h1.5v1.5h-1.5zM1330.5 173.1h1.5v1.5h-1.5zM1330.5 191.8h1.5v1.5h-1.5zM1330.5 210.6h1.5v1.5h-1.5zM1330.5 229.2h1.5v1.5h-1.5zM1330.5 247.9h1.5v1.5h-1.5zM1330.5 266.6h1.5v1.5h-1.5zM1330.5 285.4h1.5v1.5h-1.5zM1330.5 304.1h1.5v1.5h-1.5zM1330.5 322.9h1.5v1.5h-1.5zM1330.5 341.6h1.5v1.5h-1.5zM1330.5 360.2h1.5v1.5h-1.5zM1330.5 378.9h1.5v1.5h-1.5zM1330.5 397.8h1.5v1.5h-1.5zM1330.5 416.4h1.5v1.5h-1.5zM1330.5 435.1h1.5v1.5h-1.5zM1330.5 453.9h1.5v1.5h-1.5zM1330.5 472.6h1.5v1.5h-1.5zM1330.5 491.4h1.5v1.5h-1.5zM1330.5 510.1h1.5v1.5h-1.5zM1330.5 528.8h1.5v1.5h-1.5zM1330.5 547.5h1.5v1.5h-1.5zM1330.5 566.1h1.5v1.5h-1.5zM1330.5 585.0h1.5v1.5h-1.5zM1330.5 603.6h1.5v1.5h-1.5zM1330.5 622.4h1.5v1.5h-1.5zM1330.5 641.0h1.5v1.5h-1.5zM1330.5 659.8h1.5v1.5h-1.5zM1330.5 678.5h1.5v1.5h-1.5zM1330.5 697.2h1.5v1.5h-1.5zM1330.5 716.0h1.5v1.5h-1.5zM1330.5 734.6h1.5v1.5h-1.5zM1330.5 753.4h1.5v1.5h-1.5zM1330.5 772.1h1.5v1.5h-1.5zM1330.5 790.9h1.5v1.5h-1.5zM1330.5 809.5h1.5v1.5h-1.5zM1330.5 828.2h1.5v1.5h-1.5zM1330.5 847.0h1.5v1.5h-1.5zM1330.5 865.8h1.5v1.5h-1.5zM1330.5 884.5h1.5v1.5h-1.5zM1330.5 903.1h1.5v1.5h-1.5zM1330.5 921.9h1.5v1.5h-1.5zM1330.5 940.5h1.5v1.5h-1.5zM1330.5 959.4h1.5v1.5h-1.5zM1330.5 978.0h1.5v1.5h-1.5zM1365.5 60.8h1.5v1.5h-1.5zM1365.5 154.3h1.5v1.5h-1.5zM1365.5 247.9h1.5v1.5h-1.5zM1365.5 341.6h1.5v1.5h-1.5zM1365.5 435.1h1.5v1.5h-1.5zM1365.5 528.8h1.5v1.5h-1.5zM1365.5 622.4h1.5v1.5h-1.5zM1365.5 716.0h1.5v1.5h-1.5zM1365.5 809.5h1.5v1.5h-1.5zM1365.5 903.1h1.5v1.5h-1.5zM1400.5 60.8h1.5v1.5h-1.5zM1400.5 154.3h1.5v1.5h-1.5zM1400.5 247.9h1.5v1.5h-1.5zM1400.5 341.6h1.5v1.5h-1.5zM1400.5 435.1h1.5v1.5h-1.5zM1400.5 528.8h1.5v1.5h-1.5zM1400.5 622.4h1.5v1.5h-1.5zM1400.5 716.0h1.5v1.5h-1.5zM1400.5 809.5h1.5v1.5h-1.5zM1400.5 903.1h1.5v1.5h-1.5zM1435.3 60.8h1.5v1.5h-1.5zM1435.3 154.3h1.5v1.5h-1.5zM1435.3 247.9h1.5v1.5h-1.5zM1435.3 341.6h1.5v1.5h-1.5zM1435.3 435.1h1.5v1.5h-1.5zM1435.3 528.8h1.5v1.5h-1.5zM1435.3 622.4h1.5v1.5h-1.5zM1435.3 716.0h1.5v1.5h-1.5zM1435.3 809.5h1.5v1.5h-1.5zM1435.3 903.1h1.5v1.5h-1.5zM1470.3 60.8h1.5v1.5h-1.5zM1470.3 154.3h1.5v1.5h-1.5zM1470.3 247.9h1.5v1.5h-1.5zM1470.3 341.6h1.5v1.5h-1.5zM1470.3 435.1h1.5v1.5h-1.5zM1470.3 528.8h1.5v1.5h-1.5zM1470.3 622.4h1.5v1.5h-1.5zM1470.3 716.0h1.5v1.5h-1.5zM1470.3 809.5h1.5v1.5h-1.5zM1470.3 903.1h1.5v1.5h-1.5zM1505.2 60.8h1.5v1.5h-1.5zM1505.2 79.5h1.5v1.5h-1.5zM1505.2 98.2h1.5v1.5h-1.5zM1505.2 117.0h1.5v1.5h-1.5zM1505.2 135.7h1.5v1.5h-1.5zM1505.2 154.3h1.5v1.5h-1.5zM1505.2 173.1h1.5v1.5h-1.5zM1505.2 191.8h1.5v1.5h-1.5zM1505.2 210.6h1.5v1.5h-1.5zM1505.2 229.2h1.5v1.5h-1.5zM1505.2 247.9h1.5v1.5h-1.5zM1505.2 266.6h1.5v1.5h-1.5zM1505.2 285.4h1.5v1.5h-1.5zM1505.2 304.1h1.5v1.5h-1.5zM1505.2 322.9h1.5v1.5h-1.5zM1505.2 341.6h1.5v1.5h-1.5zM1505.2 360.2h1.5v1.5h-1.5zM1505.2 378.9h1.5v1.5h-1.5zM1505.2 397.8h1.5v1.5h-1.5zM1505.2 416.4h1.5v1.5h-1.5zM1505.2 435.1h1.5v1.5h-1.5zM1505.2 453.9h1.5v1.5h-1.5zM1505.2 472.6h1.5v1.5h-1.5zM1505.2 491.4h1.5v1.5h-1.5zM1505.2 510.1h1.5v1.5h-1.5zM1505.2 528.8h1.5v1.5h-1.5zM1505.2 547.5h1.5v1.5h-1.5zM1505.2 566.1h1.5v1.5h-1.5zM1505.2 585.0h1.5v1.5h-1.5zM1505.2 603.6h1.5v1.5h-1.5zM1505.2 622.4h1.5v1.5h-1.5zM1505.2 641.0h1.5v1.5h-1.5zM1505.2 659.8h1.5v1.5h-1.5zM1505.2 678.5h1.5v1.5h-1.5zM1505.2 697.2h1.5v1.5h-1.5zM1505.2 716.0h1.5v1.5h-1.5zM1505.2 734.6h1.5v1.5h-1.5zM1505.2 753.4h1.5v1.5h-1.5zM1505.2 772.1h1.5v1.5h-1.5zM1505.2 790.9h1.5v1.5h-1.5zM1505.2 809.5h1.5v1.5h-1.5zM1505.2 828.2h1.5v1.5h-1.5zM1505.2 847.0h1.5v1.5h-1.5zM1505.2 865.8h1.5v1.5h-1.5zM1505.2 884.5h1.5v1.5h-1.5zM1505.2 903.1h1.5v1.5h-1.5zM1505.2 921.9h1.5v1.5h-1.5zM1505.2 940.5h1.5v1.5h-1.5zM1505.2 959.4h1.5v1.5h-1.5zM1505.2 978.0h1.5v1.5h-1.5zM1540.2 60.8h1.5v1.5h-1.5zM1540.2 154.3h1.5v1.5h-1.5zM1540.2 247.9h1.5v1.5h-1.5zM1540.2 341.6h1.5v1.5h-1.5zM1540.2 435.1h1.5v1.5h-1.5zM1540.2 528.8h1.5v1.5h-1.5zM1540.2 622.4h1.5v1.5h-1.5zM1540.2 716.0h1.5v1.5h-1.5zM1540.2 809.5h1.5v1.5h-1.5zM1540.2 903.1h1.5v1.5h-1.5zM1575.2 60.8h1.5v1.5h-1.5zM1575.2 154.3h1.5v1.5h-1.5zM1575.2 247.9h1.5v1.5h-1.5zM1575.2 341.6h1.5v1.5h-1.5zM1575.2 435.1h1.5v1.5h-1.5zM1575.2 528.8h1.5v1.5h-1.5zM1575.2 622.4h1.5v1.5h-1.5zM1575.2 716.0h1.5v1.5h-1.5zM1575.2 809.5h1.5v1.5h-1.5zM1575.2 903.1h1.5v1.5h-1.5zM1610.0 60.8h1.5v1.5h-1.5zM1610.0 154.3h1.5v1.5h-1.5zM1610.0 247.9h1.5v1.5h-1.5zM1610.0 341.6h1.5v1.5h-1.5zM1610.0 435.1h1.5v1.5h-1.5zM1610.0 528.8h1.5v1.5h-1.5zM1610.0 622.4h1.5v1.5h-1.5zM1610.0 716.0h1.5v1.5h-1.5zM1610.0 809.5h1.5v1.5h-1.5zM1610.0 903.1h1.5v1.5h-1.5zM1645.0 60.8h1.5v1.5h-1.5zM1645.0 154.3h1.5v1.5h-1.5zM1645.0 247.9h1.5v1.5h-1.5zM1645.0 341.6h1.5v1.5h-1.5zM1645.0 435.1h1.5v1.5h-1.5zM1645.0 528.8h1.5v1.5h-1.5zM1645.0 622.4h1.5v1.5h-1.5zM1645.0 716.0h1.5v1.5h-1.5zM1645.0 809.5h1.5v1.5h-1.5zM1645.0 903.1h1.5v1.5h-1.5zM1680.0 60.8h1.5v1.5h-1.5zM1680.0 79.5h1.5v1.5h-1.5zM1680.0 98.2h1.5v1.5h-1.5zM1680.0 117.0h1.5v1.5h-1.5zM1680.0 135.7h1.5v1.5h-1.5zM1680.0 154.3h1.5v1.5h-1.5zM1680.0 173.1h1.5v1.5h-1.5zM1680.0 191.8h1.5v1.5h-1.5zM1680.0 210.6h1.5v1.5h-1.5zM1680.0 229.2h1.5v1.5h-1.5zM1680.0 247.9h1.5v1.5h-1.5zM1680.0 266.6h1.5v1.5h-1.5zM1680.0 285.4h1.5v1.5h-1.5zM1680.0 304.1h1.5v1.5h-1.5zM1680.0 322.9h1.5v1.5h-1.5zM1680.0 341.6h1.5v1.5h-1.5zM1680.0 360.2h1.5v1.5h-1.5zM1680.0 378.9h1.5v1.5h-1.5zM1680.0 397.8h1.5v1.5h-1.5zM1680.0 416.4h1.5v1.5h-1.5zM1680.0 435.1h1.5v1.5h-1.5zM1680.0 453.9h1.5v1.5h-1.5zM1680.0 472.6h1.5v1.5h-1.5zM1680.0 491.4h1.5v1.5h-1.5zM1680.0 510.1h1.5v1.5h-1.5zM1680.0 528.8h1.5v1.5h-1.5zM1680.0 547.5h1.5v1.5h-1.5zM1680.0 566.1h1.5v1.5h-1.5zM1680.0 585.0h1.5v1.5h-1.5zM1680.0 603.6h1.5v1.5h-1.5zM1680.0 622.4h1.5v1.5h-1.5zM1680.0 641.0h1.5v1.5h-1.5zM1680.0 659.8h1.5v1.5h-1.5zM1680.0 678.5h1.5v1.5h-1.5zM1680.0 697.2h1.5v1.5h-1.5zM1680.0 716.0h1.5v1.5h-1.5zM1680.0 734.6h1.5v1.5h-1.5zM1680.0 753.4h1.5v1.5h-1.5zM1680.0 772.1h1.5v1.5h-1.5zM1680.0 790.9h1.5v1.5h-1.5zM1680.0 809.5h1.5v1.5h-1.5zM1680.0 828.2h1.5v1.5h-1.5zM1680.0 847.0h1.5v1.5h-1.5zM1680.0 865.8h1.5v1.5h-1.5zM1680.0 884.5h1.5v1.5h-1.5zM1680.0 903.1h1.5v1.5h-1.5zM1680.0 921.9h1.5v1.5h-1.5zM1680.0 940.5h1.5v1.5h-1.5zM1680.0 959.4h1.5v1.5h-1.5zM1680.0 978.0h1.5v1.5h-1.5zM1714.8 60.8h1.5v1.5h-1.5zM1714.8 154.3h1.5v1.5h-1.5zM1714.8 247.9h1.5v1.5h-1.5zM1714.8 341.6h1.5v1.5h-1.5zM1714.8 435.1h1.5v1.5h-1.5zM1714.8 528.8h1.5v1.5h-1.5zM1714.8 622.4h1.5v1.5h-1.5zM1714.8 716.0h1.5v1.5h-1.5zM1714.8 809.5h1.5v1.5h-1.5zM1714.8 903.1h1.5v1.5h-1.5z" fill="#9c9c9c"/><path d="M108.0 524 L108.0 240" stroke="#34a89c" stroke-width="1.1" fill="none"/><path d="M108.5 338 C110.5 352 114.0 372 115.7 391 C117.5 410 119.0 440 120.0 483 L121.2 524" stroke="#2bbccc" stroke-width="2.6" fill="none"/><path d="M545.6 534 L545.6 772" stroke="#34a89c" stroke-width="1.1" fill="none"/><path d="M546.20 700.01 L546.29 694.41 L546.42 686.53 L546.57 677.26 L546.74 667.49 L546.92 658.12 L547.10 650.02 L547.29 643.07 L547.49 636.55 L547.71 630.41 L547.93 624.63 L548.16 619.19 L548.40 614.05 L548.65 609.24 L548.90 604.77 L549.17 600.64 L549.44 596.83 L549.71 593.33 L550.00 590.12 L550.27 587.32 L550.52 584.97 L550.78 582.94 L551.07 581.09 L551.39 579.27 L551.77 577.32 L552.19 575.28 L552.62 573.28 L553.09 571.34 L553.61 569.47 L554.22 567.67 L554.93 565.91 L555.78 564.13 L556.74 562.32 L557.79 560.55 L558.90 558.87 L560.05 557.31 L561.23 555.89 L562.37 554.63 L563.46 553.53 L564.55 552.57 L565.75 551.67 L567.20 550.77 L569.01 549.82 L571.23 548.80 L573.77 547.76 L576.56 546.74 L579.52 545.78 L582.56 544.91 L585.60 544.17 L588.58 543.60 L591.58 543.16 L594.72 542.81 L598.09 542.50 L601.79 542.20 L605.88 541.84 L610.47 541.43 L615.51 541.00 L620.83 540.57 L626.26 540.16 L631.63 539.80 L636.76 539.50 L641.73 539.27 L646.68 539.09 L651.59 538.96 L656.42 538.85 L661.13 538.76 L665.67 538.65 L670.27 538.53 L675.01 538.42 L679.62 538.32 L683.83 538.23 L687.37 538.16 L689.96 538.10 L689.84 531.90 L687.25 531.95 L683.71 532.01 L679.50 532.08 L674.88 532.16 L670.13 532.25 L665.53 532.35 L661.00 532.44 L656.29 532.52 L651.45 532.61 L646.50 532.73 L641.48 532.89 L636.44 533.10 L631.23 533.39 L625.81 533.74 L620.34 534.13 L614.98 534.54 L609.92 534.96 L605.32 535.36 L601.24 535.71 L597.53 536.01 L594.07 536.33 L590.75 536.70 L587.49 537.18 L584.20 537.83 L580.88 538.65 L577.61 539.62 L574.44 540.68 L571.43 541.82 L568.67 543.00 L566.19 544.18 L564.05 545.36 L562.20 546.55 L560.58 547.80 L559.15 549.14 L557.85 550.55 L556.57 552.11 L555.29 553.87 L554.08 555.80 L552.97 557.82 L551.96 559.90 L551.06 562.00 L550.27 564.09 L549.61 566.19 L549.10 568.31 L548.70 570.41 L548.38 572.50 L548.10 574.58 L547.83 576.68 L547.58 578.70 L547.39 580.62 L547.23 582.56 L547.09 584.66 L546.96 587.06 L546.80 589.88 L546.63 593.12 L546.46 596.65 L546.28 600.48 L546.11 604.63 L545.95 609.12 L545.80 613.95 L545.66 619.10 L545.54 624.56 L545.42 630.34 L545.31 636.49 L545.20 643.03 L545.10 649.98 L545.00 658.09 L544.90 667.47 L544.81 677.24 L544.72 686.51 L544.65 694.39 L544.60 699.99Z" fill="#2bbccc"/><path d="M690.3 524 L690.3 240" stroke="#34a89c" stroke-width="1.1" fill="none"/><path d="M690.8 338 C692.8 352 696.3 372 698.0 391 C699.8 410 701.3 440 702.3 483 L703.5 524" stroke="#2bbccc" stroke-width="2.6" fill="none"/><path d="M1127.9 534 L1127.9 772" stroke="#34a89c" stroke-width="1.1" fill="none"/><path d="M1128.50 700.01 L1128.59 694.41 L1128.72 686.53 L1128.87 677.26 L1129.04 667.49 L1129.22 658.12 L1129.40 650.02 L1129.59 643.07 L1129.79 636.55 L1130.01 630.41 L1130.23 624.63 L1130.46 619.19 L1130.70 614.05 L1130.95 609.24 L1131.20 604.77 L1131.47 600.64 L1131.74 596.83 L1132.01 593.33 L1132.30 590.12 L1132.57 587.32 L1132.82 584.97 L1133.08 582.94 L1133.37 581.09 L1133.69 579.27 L1134.07 577.32 L1134.49 575.28 L1134.92 573.28 L1135.39 571.34 L1135.91 569.47 L1136.52 567.67 L1137.23 565.91 L1138.08 564.13 L1139.04 562.32 L1140.09 560.55 L1141.20 558.87 L1142.35 557.31 L1143.53 555.89 L1144.67 554.63 L1145.76 553.53 L1146.85 552.57 L1148.05 551.67 L1149.50 550.77 L1151.31 549.82 L1153.53 548.80 L1156.07 547.76 L1158.86 546.74 L1161.82 545.78 L1164.86 544.91 L1167.90 544.17 L1170.88 543.60 L1173.88 543.16 L1177.02 542.81 L1180.39 542.50 L1184.09 542.20 L1188.18 541.84 L1192.77 541.43 L1197.81 541.00 L1203.13 540.57 L1208.56 540.16 L1213.93 539.80 L1219.06 539.50 L1224.03 539.27 L1228.98 539.09 L1233.89 538.96 L1238.72 538.85 L1243.43 538.76 L1247.97 538.65 L1252.57 538.53 L1257.31 538.42 L1261.92 538.32 L1266.13 538.23 L1269.67 538.16 L1272.26 538.10 L1272.14 531.90 L1269.55 531.95 L1266.01 532.01 L1261.80 532.08 L1257.18 532.16 L1252.43 532.25 L1247.83 532.35 L1243.30 532.44 L1238.59 532.52 L1233.75 532.61 L1228.80 532.73 L1223.78 532.89 L1218.74 533.10 L1213.53 533.39 L1208.11 533.74 L1202.64 534.13 L1197.28 534.54 L1192.22 534.96 L1187.62 535.36 L1183.54 535.71 L1179.83 536.01 L1176.37 536.33 L1173.05 536.70 L1169.79 537.18 L1166.50 537.83 L1163.18 538.65 L1159.91 539.62 L1156.74 540.68 L1153.73 541.82 L1150.97 543.00 L1148.49 544.18 L1146.35 545.36 L1144.50 546.55 L1142.88 547.80 L1141.45 549.14 L1140.15 550.55 L1138.87 552.11 L1137.59 553.87 L1136.38 555.80 L1135.27 557.82 L1134.26 559.90 L1133.36 562.00 L1132.57 564.09 L1131.91 566.19 L1131.40 568.31 L1131.00 570.41 L1130.68 572.50 L1130.40 574.58 L1130.13 576.68 L1129.88 578.70 L1129.69 580.62 L1129.53 582.56 L1129.39 584.66 L1129.26 587.06 L1129.10 589.88 L1128.93 593.12 L1128.76 596.65 L1128.58 600.48 L1128.41 604.63 L1128.25 609.12 L1128.10 613.95 L1127.96 619.10 L1127.84 624.56 L1127.72 630.34 L1127.61 636.49 L1127.50 643.03 L1127.40 649.98 L1127.30 658.09 L1127.20 667.47 L1127.11 677.24 L1127.02 686.51 L1126.95 694.39 L1126.90 699.99Z" fill="#2bbccc"/><path d="M1272.6 524 L1272.6 240" stroke="#34a89c" stroke-width="1.1" fill="none"/><path d="M1273.1 338 C1275.1 352 1278.6 372 1280.3 391 C1282.1 410 1283.6 440 1284.6 483 L1285.8 524" stroke="#2bbccc" stroke-width="2.6" fill="none"/><path d="M1710.2 534 L1710.2 772" stroke="#34a89c" stroke-width="1.1" fill="none"/><path d="M1710.80 700.01 L1710.89 694.41 L1711.02 686.53 L1711.17 677.26 L1711.34 667.49 L1711.52 658.12 L1711.70 650.02 L1711.89 643.07 L1712.09 636.55 L1712.31 630.41 L1712.53 624.63 L1712.76 619.19 L1713.00 614.05 L1713.25 609.24 L1713.50 604.77 L1713.77 600.64 L1714.04 596.83 L1714.31 593.33 L1714.60 590.12 L1714.87 587.32 L1715.12 584.97 L1715.38 582.94 L1715.67 581.09 L1715.99 579.27 L1716.37 577.32 L1716.79 575.28 L1717.22 573.28 L1717.69 571.34 L1718.21 569.47 L1718.82 567.67 L1719.53 565.91 L1720.38 564.13 L1721.34 562.32 L1722.39 560.55 L1723.50 558.87 L1724.65 557.31 L1725.83 555.89 L1726.97 554.63 L1728.06 553.53 L1729.15 552.57 L1730.35 551.67 L1731.80 550.77 L1733.61 549.82 L1735.83 548.80 L1738.37 547.76 L1741.16 546.74 L1744.12 545.78 L1747.16 544.91 L1750.20 544.17 L1753.18 543.60 L1756.18 543.16 L1759.32 542.81 L1762.69 542.50 L1766.39 542.20 L1770.48 541.84 L1775.07 541.43 L1780.11 541.00 L1785.43 540.57 L1790.86 540.16 L1796.23 539.80 L1801.36 539.50 L1806.33 539.27 L1811.28 539.09 L1816.19 538.96 L1821.02 538.85 L1825.73 538.76 L1830.27 538.65 L1834.87 538.53 L1839.61 538.42 L1844.22 538.32 L1848.43 538.23 L1851.97 538.16 L1854.56 538.10 L1854.44 531.90 L1851.85 531.95 L1848.31 532.01 L1844.10 532.08 L1839.48 532.16 L1834.73 532.25 L1830.13 532.35 L1825.60 532.44 L1820.89 532.52 L1816.05 532.61 L1811.10 532.73 L1806.08 532.89 L1801.04 533.10 L1795.83 533.39 L1790.41 533.74 L1784.94 534.13 L1779.58 534.54 L1774.52 534.96 L1769.92 535.36 L1765.84 535.71 L1762.13 536.01 L1758.67 536.33 L1755.35 536.70 L1752.09 537.18 L1748.80 537.83 L1745.48 538.65 L1742.21 539.62 L1739.04 540.68 L1736.03 541.82 L1733.27 543.00 L1730.79 544.18 L1728.65 545.36 L1726.80 546.55 L1725.18 547.80 L1723.75 549.14 L1722.45 550.55 L1721.17 552.11 L1719.89 553.87 L1718.68 555.80 L1717.57 557.82 L1716.56 559.90 L1715.66 562.00 L1714.87 564.09 L1714.21 566.19 L1713.70 568.31 L1713.30 570.41 L1712.98 572.50 L1712.70 574.58 L1712.43 576.68 L1712.18 578.70 L1711.99 580.62 L1711.83 582.56 L1711.69 584.66 L1711.56 587.06 L1711.40 589.88 L1711.23 593.12 L1711.06 596.65 L1710.88 600.48 L1710.71 604.63 L1710.55 609.12 L1710.40 613.95 L1710.26 619.10 L1710.14 624.56 L1710.02 630.34 L1709.91 636.49 L1709.80 643.03 L1709.70 649.98 L1709.60 658.09 L1709.50 667.47 L1709.41 677.24 L1709.32 686.51 L1709.25 694.39 L1709.20 699.99Z" fill="#2bbccc"/><path d="M3 534 L108 533 L108 537 L3 543Z" fill="#2bbccc"/><defs><clipPath id="bc0"><path d="M166.0 526.8 L166.5 524.3 L167.0 521.4 L167.5 520.4 L168.0 518.8 L168.5 517.5 L169.0 516.4 L169.5 514.7 L170.0 513.7 L170.5 508.8 L171.0 504.5 L171.5 499.8 L172.0 495.0 L172.5 493.7 L173.0 492.9 L173.5 491.7 L174.0 490.3 L174.5 489.0 L175.0 488.0 L175.5 487.0 L176.0 485.5 L176.5 484.9 L177.0 483.3 L177.5 482.4 L178.0 481.4 L178.5 480.0 L179.0 478.4 L179.5 476.6 L180.0 475.5 L180.5 473.8 L181.0 472.2 L181.5 470.9 L182.0 469.3 L182.5 468.1 L183.0 466.6 L183.5 465.0 L184.0 463.2 L184.5 461.9 L185.0 460.5 L185.5 458.8 L186.0 457.4 L186.5 456.0 L187.0 454.2 L187.5 452.8 L188.0 451.5 L188.5 449.8 L189.0 448.0 L189.5 445.9 L190.0 444.1 L190.5 442.5 L191.0 440.2 L191.5 438.9 L192.0 436.9 L192.5 434.8 L193.0 433.3 L193.5 431.2 L194.0 429.6 L194.5 427.4 L195.0 425.5 L195.5 423.7 L196.0 421.7 L196.5 420.2 L197.0 418.0 L197.5 416.0 L198.0 414.0 L198.5 412.0 L199.0 409.8 L199.5 407.7 L200.0 406.0 L200.5 403.8 L201.0 402.2 L201.5 399.7 L202.0 397.8 L202.5 395.5 L203.0 393.6 L203.5 391.9 L204.0 389.8 L204.5 387.6 L205.0 386.0 L205.5 383.3 L206.0 381.0 L206.5 378.6 L207.0 376.3 L207.5 373.4 L208.0 371.4 L208.5 368.9 L209.0 366.3 L209.5 363.6 L210.0 361.7 L210.5 359.0 L211.0 356.5 L211.5 353.9 L212.0 351.5 L212.5 348.9 L213.0 346.7 L213.5 344.0 L214.0 341.5 L214.5 338.6 L215.0 335.9 L215.5 333.8 L216.0 331.2 L216.5 328.6 L217.0 326.0 L217.5 323.3 L218.0 320.6 L218.5 318.4 L219.0 316.2 L219.5 313.5 L220.0 311.1 L220.5 308.5 L221.0 305.9 L221.5 303.6 L222.0 301.3 L222.5 298.8 L223.0 296.4 L223.5 294.3 L224.0 291.4 L224.5 289.0 L225.0 286.6 L225.5 284.2 L226.0 282.0 L226.5 279.6 L227.0 277.3 L227.5 274.6 L228.0 272.5 L228.5 270.1 L229.0 267.6 L229.5 265.2 L230.0 262.6 L230.5 260.4 L231.0 258.0 L231.5 255.9 L232.0 254.0 L232.5 251.9 L233.0 250.1 L233.5 247.6 L234.0 245.8 L234.5 244.1 L235.0 242.1 L235.5 240.1 L236.0 238.1 L236.5 236.3 L237.0 233.9 L237.5 231.8 L238.0 230.2 L238.5 228.2 L239.0 226.4 L239.5 225.4 L240.0 224.2 L240.5 223.2 L241.0 221.8 L241.5 221.2 L242.0 220.2 L242.5 218.6 L243.0 217.8 L243.5 217.0 L244.0 215.8 L244.5 215.0 L245.0 213.7 L245.5 212.8 L246.0 212.2 L246.5 211.7 L247.0 211.3 L247.5 210.7 L248.0 210.1 L248.5 209.2 L249.0 208.7 L249.5 207.9 L250.0 207.6 L250.5 207.0 L251.0 206.0 L251.5 205.3 L252.0 204.7 L252.5 204.1 L253.0 203.5 L253.5 203.5 L254.0 203.7 L254.5 203.4 L255.0 203.5 L255.5 203.6 L256.0 203.5 L256.5 203.8 L257.0 204.2 L257.5 203.1 L258.0 204.5 L258.5 205.1 L259.0 205.4 L259.5 201.5 L260.0 206.2 L260.5 206.9 L261.0 207.4 L261.5 207.9 L262.0 208.2 L262.5 208.7 L263.0 208.8 L263.5 205.9 L264.0 209.5 L264.5 209.8 L265.0 210.4 L265.5 208.6 L266.0 211.5 L266.5 210.5 L267.0 211.8 L267.5 210.4 L268.0 212.7 L268.5 213.0 L269.0 213.9 L269.5 211.9 L270.0 214.5 L270.5 212.5 L271.0 214.8 L271.5 215.5 L272.0 215.9 L272.5 212.2 L273.0 216.4 L273.5 217.2 L274.0 217.5 L274.5 217.9 L275.0 217.7 L275.5 216.0 L276.0 218.9 L276.5 216.5 L277.0 219.1 L277.5 218.6 L278.0 220.2 L278.5 219.9 L279.0 221.0 L279.5 221.4 L280.0 221.2 L280.5 220.8 L281.0 222.2 L281.5 218.8 L282.0 223.0 L282.5 220.3 L283.0 223.4 L283.5 224.2 L284.0 224.5 L284.5 224.9 L285.0 225.2 L285.5 224.7 L286.0 225.9 L286.5 226.0 L287.0 226.7 L287.5 223.4 L288.0 227.3 L288.5 227.3 L289.0 227.8 L289.5 224.8 L290.0 228.6 L290.5 225.4 L291.0 229.3 L291.5 229.2 L292.0 230.0 L292.5 230.7 L293.0 230.8 L293.5 231.4 L294.0 231.8 L294.5 229.6 L295.0 232.4 L295.5 232.3 L296.0 232.8 L296.5 232.7 L297.0 233.7 L297.5 233.6 L298.0 234.3 L298.5 232.6 L299.0 235.3 L299.5 234.8 L300.0 235.9 L300.5 236.3 L301.0 236.3 L301.5 236.5 L302.0 237.2 L302.5 235.7 L303.0 237.7 L303.5 238.1 L304.0 238.6 L304.5 238.6 L305.0 239.3 L305.5 238.4 L306.0 240.1 L306.5 240.0 L307.0 240.8 L307.5 237.3 L308.0 241.4 L308.5 238.8 L309.0 242.0 L309.5 242.8 L310.0 242.9 L310.5 239.4 L311.0 243.5 L311.5 244.3 L312.0 244.6 L312.5 244.6 L313.0 245.4 L313.5 245.6 L314.0 246.0 L314.5 244.8 L315.0 246.2 L315.5 243.4 L316.0 247.2 L316.5 245.7 L317.0 247.5 L317.5 248.2 L318.0 248.0 L318.5 244.3 L319.0 249.0 L319.5 245.1 L320.0 249.5 L320.5 249.5 L321.0 249.8 L321.5 247.8 L322.0 250.9 L322.5 250.9 L323.0 251.3 L323.5 251.8 L324.0 252.1 L324.5 252.4 L325.0 252.5 L325.5 253.2 L326.0 253.2 L326.5 253.4 L327.0 254.1 L327.5 254.3 L328.0 254.4 L328.5 254.4 L329.0 255.3 L329.5 250.9 L330.0 255.5 L330.5 251.7 L331.0 256.6 L331.5 256.9 L332.0 257.2 L332.5 255.2 L333.0 257.7 L333.5 258.2 L334.0 258.3 L334.5 255.0 L335.0 258.6 L335.5 259.4 L336.0 259.7 L336.5 256.2 L337.0 260.0 L337.5 259.0 L338.0 260.9 L338.5 261.3 L339.0 261.1 L339.5 261.4 L340.0 262.0 L340.5 258.1 L341.0 262.1 L341.5 260.2 L342.0 263.0 L342.5 260.1 L343.0 263.5 L343.5 260.6 L344.0 263.8 L344.5 264.1 L345.0 264.2 L345.5 260.8 L346.0 264.9 L346.5 265.3 L347.0 265.3 L347.5 265.8 L348.0 266.0 L348.5 266.3 L349.0 266.6 L349.5 266.8 L350.0 266.9 L350.5 267.2 L351.0 267.1 L351.5 267.7 L352.0 267.8 L352.5 268.3 L353.0 268.4 L353.5 268.9 L354.0 269.0 L354.5 269.4 L355.0 269.2 L355.5 269.1 L356.0 270.0 L356.5 269.9 L357.0 270.1 L357.5 270.9 L358.0 270.7 L358.5 271.0 L359.0 271.4 L359.5 269.0 L360.0 271.9 L360.5 271.8 L361.0 272.3 L361.5 268.2 L362.0 273.0 L362.5 270.6 L363.0 273.3 L363.5 272.7 L364.0 274.1 L364.5 274.5 L365.0 275.0 L365.5 275.3 L366.0 275.6 L366.5 274.0 L367.0 276.2 L367.5 276.7 L368.0 277.0 L368.5 274.4 L369.0 277.2 L369.5 276.5 L370.0 278.2 L370.5 278.6 L371.0 278.8 L371.5 278.9 L372.0 279.6 L372.5 279.6 L373.0 280.2 L373.5 276.2 L374.0 280.4 L374.5 280.5 L375.0 281.5 L375.5 277.5 L376.0 282.1 L376.5 282.4 L377.0 283.0 L377.5 283.0 L378.0 283.4 L378.5 283.3 L379.0 284.2 L379.5 284.0 L380.0 285.0 L380.5 285.2 L381.0 285.6 L381.5 285.6 L382.0 286.3 L382.5 287.1 L383.0 287.8 L383.5 288.8 L384.0 289.3 L384.5 289.8 L385.0 290.9 L385.5 290.8 L386.0 292.7 L386.5 290.6 L387.0 294.6 L387.5 295.5 L388.0 295.9 L388.5 297.3 L389.0 297.8 L389.5 297.7 L390.0 299.9 L390.5 297.8 L391.0 301.1 L391.5 301.2 L392.0 302.9 L392.5 301.5 L393.0 304.9 L393.5 305.1 L394.0 306.4 L394.5 304.6 L395.0 307.9 L395.5 306.8 L396.0 310.6 L396.5 308.6 L397.0 313.1 L397.5 313.1 L398.0 315.9 L398.5 317.3 L399.0 318.4 L399.5 319.6 L400.0 321.0 L400.5 319.4 L401.0 323.3 L401.5 323.6 L402.0 325.8 L402.5 325.8 L403.0 328.4 L403.5 329.9 L404.0 330.7 L404.5 330.4 L405.0 333.4 L405.5 334.2 L406.0 335.9 L406.5 337.5 L407.0 338.3 L407.5 340.1 L408.0 341.9 L408.5 343.6 L409.0 345.0 L409.5 347.1 L410.0 348.5 L410.5 346.0 L411.0 352.1 L411.5 353.9 L412.0 355.6 L412.5 356.1 L413.0 359.0 L413.5 360.0 L414.0 362.6 L414.5 364.7 L415.0 366.4 L415.5 368.1 L416.0 369.5 L416.5 371.6 L417.0 373.1 L417.5 375.2 L418.0 376.9 L418.5 378.6 L419.0 380.1 L419.5 380.6 L420.0 383.6 L420.5 385.6 L421.0 387.2 L421.5 388.7 L422.0 390.7 L422.5 392.7 L423.0 393.9 L423.5 396.2 L424.0 397.4 L424.5 395.6 L425.0 401.4 L425.5 402.7 L426.0 404.5 L426.5 402.2 L427.0 408.2 L427.5 410.1 L428.0 411.8 L428.5 409.5 L429.0 415.3 L429.5 416.2 L430.0 418.8 L430.5 419.9 L431.0 421.8 L431.5 424.1 L432.0 425.4 L432.5 427.0 L433.0 428.9 L433.5 429.4 L434.0 432.8 L434.5 431.0 L435.0 436.1 L435.5 438.1 L436.0 439.9 L436.5 441.0 L437.0 443.1 L437.5 445.0 L438.0 446.8 L438.5 448.4 L439.0 450.2 L439.5 449.1 L440.0 453.8 L440.5 453.5 L441.0 456.8 L441.5 459.1 L442.0 460.3 L442.5 460.8 L443.0 463.8 L443.5 465.9 L444.0 467.6 L444.5 469.3 L445.0 470.7 L445.5 472.1 L446.0 474.7 L446.5 476.4 L447.0 478.4 L447.5 480.4 L448.0 482.2 L448.5 481.1 L449.0 485.7 L449.5 483.6 L450.0 489.4 L450.5 491.3 L451.0 492.9 L451.5 495.0 L452.0 496.6 L452.5 494.3 L453.0 500.0 L453.5 499.6 L454.0 503.8 L454.5 502.2 L455.0 506.3 L455.5 506.8 L456.0 506.9 L456.5 507.6 L457.0 507.4 L457.5 507.8 L458.0 507.9 L458.5 508.2 L459.0 508.7 L459.5 509.1 L460.0 508.8 L460.5 509.5 L461.0 509.6 L461.5 509.9 L462.0 510.2 L462.5 510.2 L463.0 510.3 L463.5 511.0 L464.0 511.0 L464.5 511.5 L465.0 511.5 L465.5 511.9 L466.0 512.3 L466.5 512.5 L467.0 512.8 L467.5 512.6 L468.0 513.1 L468.5 513.5 L469.0 513.4 L469.5 513.5 L470.0 514.1 L470.5 514.6 L471.0 514.8 L471.5 515.0 L472.0 515.1 L472.5 515.5 L473.0 515.6 L473.5 515.9 L474.0 515.9 L474.5 515.9 L475.0 516.3 L475.5 516.7 L476.0 516.9 L476.5 517.1 L477.0 517.4 L477.5 517.7 L478.0 518.0 L478.5 518.1 L479.0 518.0 L479.5 518.7 L480.0 518.7 L480.5 518.9 L481.0 519.1 L481.5 519.8 L482.0 520.1 L482.5 520.4 L483.0 520.6 L483.5 520.9 L484.0 520.9 L484.5 521.3 L485.0 521.6 L485.5 522.4 L486.0 522.7 L486.5 522.6 L487.0 522.8 L487.5 523.4 L488.0 523.6 L488.5 524.5 L489.0 524.8 L489.5 524.9 L490.0 525.5 L490.5 526.0 L491.0 526.4 L491.0 533.1 L490.5 533.2 L490.0 533.4 L489.5 533.7 L489.0 534.0 L488.5 534.2 L488.0 534.3 L487.5 534.3 L487.0 534.5 L486.5 534.5 L486.0 534.7 L485.5 534.5 L485.0 535.1 L484.5 534.9 L484.0 535.5 L483.5 535.4 L483.0 535.4 L482.5 535.4 L482.0 535.6 L481.5 536.0 L481.0 536.1 L480.5 535.9 L480.0 536.0 L479.5 536.5 L479.0 536.7 L478.5 536.8 L478.0 536.9 L477.5 537.4 L477.0 537.2 L476.5 537.6 L476.0 537.9 L475.5 538.4 L475.0 538.4 L474.5 538.7 L474.0 538.7 L473.5 538.7 L473.0 538.9 L472.5 539.6 L472.0 539.6 L471.5 539.6 L471.0 539.6 L470.5 540.1 L470.0 540.4 L469.5 540.5 L469.0 540.6 L468.5 541.1 L468.0 541.4 L467.5 541.2 L467.0 541.3 L466.5 541.7 L466.0 542.0 L465.5 542.4 L465.0 542.3 L464.5 542.9 L464.0 543.1 L463.5 543.2 L463.0 543.2 L462.5 543.9 L462.0 543.7 L461.5 544.2 L461.0 544.1 L460.5 544.3 L460.0 544.8 L459.5 544.8 L459.0 546.0 L458.5 546.9 L458.0 547.9 L457.5 549.1 L457.0 550.4 L456.5 551.7 L456.0 553.0 L455.5 553.7 L455.0 555.1 L454.5 556.1 L454.0 557.8 L453.5 558.5 L453.0 559.6 L452.5 560.8 L452.0 562.1 L451.5 563.6 L451.0 564.8 L450.5 565.9 L450.0 567.2 L449.5 568.4 L449.0 569.9 L448.5 571.6 L448.0 574.0 L447.5 575.7 L447.0 577.2 L446.5 579.4 L446.0 581.1 L445.5 583.0 L445.0 584.8 L444.5 586.6 L444.0 588.3 L443.5 590.4 L443.0 592.3 L442.5 594.5 L442.0 595.9 L441.5 598.3 L441.0 599.7 L440.5 601.6 L440.0 603.8 L439.5 605.6 L439.0 607.3 L438.5 608.9 L438.0 611.0 L437.5 612.8 L437.0 615.0 L436.5 616.5 L436.0 618.6 L435.5 621.1 L435.0 622.7 L434.5 625.0 L434.0 627.4 L433.5 629.5 L433.0 631.2 L432.5 633.3 L432.0 635.5 L431.5 638.1 L431.0 639.9 L430.5 642.3 L430.0 644.5 L429.5 646.3 L429.0 648.4 L428.5 651.0 L428.0 652.9 L427.5 654.8 L427.0 657.2 L426.5 659.1 L426.0 661.2 L425.5 663.2 L425.0 665.8 L424.5 668.0 L424.0 670.0 L423.5 672.3 L423.0 673.8 L422.5 675.8 L422.0 677.8 L421.5 679.9 L421.0 681.8 L420.5 683.3 L420.0 685.1 L419.5 687.1 L419.0 689.0 L418.5 691.1 L418.0 692.6 L417.5 694.8 L417.0 696.6 L416.5 698.6 L416.0 700.4 L415.5 702.2 L415.0 703.9 L414.5 705.8 L414.0 707.6 L413.5 709.8 L413.0 711.2 L412.5 713.2 L412.0 715.4 L411.5 716.9 L411.0 718.7 L410.5 720.5 L410.0 722.7 L409.5 724.3 L409.0 726.5 L408.5 728.2 L408.0 730.0 L407.5 731.3 L407.0 732.9 L406.5 734.7 L406.0 736.6 L405.5 738.5 L405.0 740.1 L404.5 741.7 L404.0 743.6 L403.5 745.4 L403.0 747.2 L402.5 749.0 L402.0 750.8 L401.5 752.4 L401.0 753.8 L400.5 756.0 L400.0 757.4 L399.5 759.3 L399.0 761.0 L398.5 762.9 L398.0 764.3 L397.5 766.1 L397.0 767.9 L396.5 769.3 L396.0 771.1 L395.5 772.2 L395.0 773.4 L394.5 774.8 L394.0 776.5 L393.5 777.6 L393.0 778.7 L392.5 780.4 L392.0 781.7 L391.5 783.2 L391.0 784.0 L390.5 785.6 L390.0 787.1 L389.5 788.5 L389.0 793.2 L388.5 790.7 L388.0 792.1 L387.5 793.4 L387.0 794.7 L386.5 795.6 L386.0 796.2 L385.5 796.1 L385.0 796.1 L384.5 796.6 L384.0 796.8 L383.5 796.8 L383.0 799.3 L382.5 797.8 L382.0 797.5 L381.5 798.1 L381.0 799.2 L380.5 798.5 L380.0 798.9 L379.5 799.0 L379.0 799.2 L378.5 799.6 L378.0 800.8 L377.5 800.4 L377.0 800.3 L376.5 800.6 L376.0 801.0 L375.5 801.5 L375.0 801.4 L374.5 801.9 L374.0 802.0 L373.5 802.7 L373.0 803.3 L372.5 802.8 L372.0 803.1 L371.5 803.6 L371.0 804.5 L370.5 804.3 L370.0 804.2 L369.5 804.6 L369.0 806.4 L368.5 805.3 L368.0 805.4 L367.5 805.8 L367.0 810.2 L366.5 806.3 L366.0 807.3 L365.5 806.9 L365.0 807.3 L364.5 807.8 L364.0 812.5 L363.5 808.0 L363.0 808.1 L362.5 808.8 L362.0 808.7 L361.5 808.9 L361.0 812.9 L360.5 809.7 L360.0 812.5 L359.5 810.3 L359.0 813.7 L358.5 810.9 L358.0 810.9 L357.5 811.2 L357.0 812.2 L356.5 811.9 L356.0 815.5 L355.5 812.0 L355.0 813.4 L354.5 812.6 L354.0 813.2 L353.5 812.8 L353.0 813.1 L352.5 813.5 L352.0 817.3 L351.5 813.6 L351.0 814.3 L350.5 814.4 L350.0 818.7 L349.5 814.5 L349.0 814.6 L348.5 815.3 L348.0 819.6 L347.5 815.4 L347.0 815.3 L346.5 816.1 L346.0 816.0 L345.5 816.5 L345.0 817.3 L344.5 816.8 L344.0 816.6 L343.5 817.2 L343.0 817.0 L342.5 817.4 L342.0 820.4 L341.5 818.0 L341.0 817.8 L340.5 818.1 L340.0 818.4 L339.5 818.6 L339.0 818.8 L338.5 818.8 L338.0 819.0 L337.5 819.6 L337.0 822.9 L336.5 819.5 L336.0 820.6 L335.5 820.4 L335.0 820.1 L334.5 820.8 L334.0 820.5 L333.5 821.1 L333.0 821.7 L332.5 821.5 L332.0 821.5 L331.5 821.8 L331.0 822.7 L330.5 822.2 L330.0 823.5 L329.5 822.6 L329.0 822.9 L328.5 822.7 L328.0 824.1 L327.5 823.4 L327.0 823.4 L326.5 824.0 L326.0 826.1 L325.5 824.2 L325.0 824.1 L324.5 824.6 L324.0 824.6 L323.5 824.9 L323.0 825.5 L322.5 825.4 L322.0 826.0 L321.5 826.1 L321.0 826.1 L320.5 826.7 L320.0 826.6 L319.5 827.2 L319.0 829.4 L318.5 827.6 L318.0 827.6 L317.5 828.1 L317.0 828.3 L316.5 828.9 L316.0 828.6 L315.5 829.3 L315.0 834.0 L314.5 829.8 L314.0 832.3 L313.5 829.9 L313.0 834.8 L312.5 830.6 L312.0 834.9 L311.5 831.4 L311.0 831.1 L310.5 831.8 L310.0 835.6 L309.5 831.9 L309.0 832.3 L308.5 832.8 L308.0 832.6 L307.5 833.4 L307.0 833.2 L306.5 833.8 L306.0 833.6 L305.5 834.1 L305.0 838.0 L304.5 834.5 L304.0 834.7 L303.5 835.1 L303.0 835.2 L302.5 835.4 L302.0 835.6 L301.5 835.9 L301.0 840.2 L300.5 836.7 L300.0 840.2 L299.5 836.9 L299.0 839.5 L298.5 837.4 L298.0 838.3 L297.5 838.2 L297.0 838.3 L296.5 838.9 L296.0 839.4 L295.5 839.2 L295.0 842.5 L294.5 839.4 L294.0 844.5 L293.5 840.2 L293.0 840.4 L292.5 840.8 L292.0 840.7 L291.5 841.5 L291.0 842.2 L290.5 841.8 L290.0 844.2 L289.5 842.6 L289.0 842.8 L288.5 843.6 L288.0 843.5 L287.5 844.4 L287.0 844.3 L286.5 845.0 L286.0 849.8 L285.5 845.7 L285.0 847.2 L284.5 846.3 L284.0 846.5 L283.5 846.9 L283.0 847.3 L282.5 848.0 L282.0 848.4 L281.5 848.7 L281.0 852.3 L280.5 849.2 L280.0 849.6 L279.5 850.3 L279.0 850.3 L278.5 850.6 L278.0 851.2 L277.5 851.4 L277.0 852.0 L276.5 852.3 L276.0 853.5 L275.5 853.2 L275.0 853.3 L274.5 854.0 L274.0 854.5 L273.5 854.5 L273.0 858.9 L272.5 855.3 L272.0 855.5 L271.5 855.9 L271.0 857.6 L270.5 857.2 L270.0 859.4 L269.5 857.6 L269.0 857.9 L268.5 858.1 L268.0 859.9 L267.5 859.2 L267.0 859.5 L266.5 860.0 L266.0 860.5 L265.5 861.0 L265.0 862.7 L264.5 861.3 L264.0 865.2 L263.5 861.9 L263.0 863.0 L262.5 862.9 L262.0 863.1 L261.5 863.4 L261.0 866.1 L260.5 864.2 L260.0 865.4 L259.5 865.5 L259.0 865.3 L258.5 865.7 L258.0 866.8 L257.5 866.1 L257.0 867.2 L256.5 866.5 L256.0 866.1 L255.5 866.4 L255.0 866.5 L254.5 866.5 L254.0 870.1 L253.5 867.1 L253.0 868.6 L252.5 866.9 L252.0 867.5 L251.5 865.3 L251.0 863.0 L250.5 861.0 L250.0 858.7 L249.5 856.4 L249.0 854.2 L248.5 852.1 L248.0 849.9 L247.5 847.9 L247.0 846.0 L246.5 843.8 L246.0 841.8 L245.5 839.5 L245.0 837.1 L244.5 835.1 L244.0 832.9 L243.5 831.0 L243.0 828.7 L242.5 826.4 L242.0 824.5 L241.5 822.5 L241.0 819.9 L240.5 818.2 L240.0 815.5 L239.5 813.5 L239.0 811.3 L238.5 809.5 L238.0 807.5 L237.5 805.3 L237.0 802.9 L236.5 801.1 L236.0 798.7 L235.5 796.5 L235.0 794.8 L234.5 792.5 L234.0 790.4 L233.5 788.3 L233.0 786.4 L232.5 784.0 L232.0 782.1 L231.5 779.9 L231.0 777.8 L230.5 775.5 L230.0 773.5 L229.5 771.3 L229.0 769.0 L228.5 766.9 L228.0 765.0 L227.5 762.5 L227.0 760.9 L226.5 758.4 L226.0 756.2 L225.5 754.2 L225.0 752.7 L224.5 750.3 L224.0 748.2 L223.5 746.1 L223.0 744.1 L222.5 742.5 L222.0 740.5 L221.5 738.6 L221.0 736.6 L220.5 734.2 L220.0 732.5 L219.5 730.4 L219.0 728.6 L218.5 726.6 L218.0 724.7 L217.5 722.2 L217.0 720.7 L216.5 718.7 L216.0 716.7 L215.5 714.2 L215.0 712.3 L214.5 710.3 L214.0 708.2 L213.5 706.7 L213.0 704.7 L212.5 702.6 L212.0 701.0 L211.5 699.1 L211.0 697.2 L210.5 695.3 L210.0 693.5 L209.5 692.2 L209.0 690.1 L208.5 688.4 L208.0 686.7 L207.5 684.7 L207.0 683.1 L206.5 681.3 L206.0 679.9 L205.5 677.9 L205.0 676.1 L204.5 674.7 L204.0 672.7 L203.5 671.2 L203.0 669.3 L202.5 667.2 L202.0 665.6 L201.5 663.9 L201.0 662.3 L200.5 660.3 L200.0 658.8 L199.5 656.9 L199.0 655.1 L198.5 653.8 L198.0 651.7 L197.5 650.5 L197.0 648.4 L196.5 646.6 L196.0 645.1 L195.5 643.8 L195.0 642.2 L194.5 640.0 L194.0 637.3 L193.5 634.3 L193.0 631.5 L192.5 628.1 L192.0 625.3 L191.5 622.2 L191.0 619.4 L190.5 616.1 L190.0 613.5 L189.5 610.1 L189.0 607.0 L188.5 604.3 L188.0 602.2 L187.5 600.2 L187.0 598.8 L186.5 596.7 L186.0 595.3 L185.5 593.5 L185.0 591.8 L184.5 590.0 L184.0 588.0 L183.5 586.3 L183.0 584.5 L182.5 583.1 L182.0 580.8 L181.5 579.6 L181.0 577.3 L180.5 575.6 L180.0 574.1 L179.5 573.0 L179.0 571.3 L178.5 569.7 L178.0 568.5 L177.5 566.7 L177.0 565.3 L176.5 563.9 L176.0 562.6 L175.5 561.1 L175.0 559.5 L174.5 557.9 L174.0 556.4 L173.5 554.8 L173.0 553.8 L172.5 552.2 L172.0 550.7 L171.5 548.4 L171.0 546.6 L170.5 544.8 L170.0 542.7 L169.5 540.5 L169.0 538.7 L168.5 537.0 L168.0 534.6 L167.5 534.2 L167.0 533.9 L166.5 533.8 L166.0 533.5Z"/></clipPath><clipPath id="bc1"><path d="M748.3 526.9 L748.8 524.3 L749.3 521.7 L749.8 520.3 L750.3 518.8 L750.8 517.7 L751.3 516.2 L751.8 514.9 L752.3 513.1 L752.8 508.7 L753.3 504.4 L753.8 499.3 L754.3 495.2 L754.8 493.9 L755.3 492.4 L755.8 491.4 L756.3 490.2 L756.8 489.3 L757.3 488.3 L757.8 486.8 L758.3 486.0 L758.8 484.8 L759.3 483.5 L759.8 482.6 L760.3 481.2 L760.8 479.6 L761.3 478.2 L761.8 476.8 L762.3 475.2 L762.8 473.8 L763.3 472.5 L763.8 470.8 L764.3 469.4 L764.8 467.7 L765.3 466.1 L765.8 464.9 L766.3 463.3 L766.8 461.7 L767.3 460.4 L767.8 459.0 L768.3 457.2 L768.8 455.7 L769.3 454.2 L769.8 452.8 L770.3 451.2 L770.8 449.7 L771.3 447.9 L771.8 446.1 L772.3 444.4 L772.8 442.3 L773.3 440.8 L773.8 438.7 L774.3 436.6 L774.8 434.8 L775.3 433.0 L775.8 431.4 L776.3 429.4 L776.8 427.5 L777.3 425.6 L777.8 423.8 L778.3 421.8 L778.8 419.8 L779.3 418.3 L779.8 416.0 L780.3 413.9 L780.8 412.1 L781.3 410.0 L781.8 407.7 L782.3 406.2 L782.8 403.9 L783.3 402.1 L783.8 399.7 L784.3 397.6 L784.8 395.8 L785.3 394.0 L785.8 391.7 L786.3 389.7 L786.8 387.6 L787.3 385.7 L787.8 383.2 L788.3 380.6 L788.8 378.4 L789.3 376.0 L789.8 373.3 L790.3 371.3 L790.8 368.6 L791.3 366.3 L791.8 363.7 L792.3 361.6 L792.8 358.7 L793.3 356.6 L793.8 354.4 L794.3 351.8 L794.8 349.2 L795.3 346.8 L795.8 344.0 L796.3 341.4 L796.8 338.7 L797.3 336.3 L797.8 333.8 L798.3 331.2 L798.8 328.3 L799.3 325.6 L799.8 323.3 L800.3 320.9 L800.8 318.1 L801.3 315.9 L801.8 313.6 L802.3 311.2 L802.8 308.4 L803.3 306.0 L803.8 303.7 L804.3 301.3 L804.8 298.9 L805.3 296.6 L805.8 293.8 L806.3 291.7 L806.8 289.1 L807.3 286.6 L807.8 284.2 L808.3 281.9 L808.8 279.6 L809.3 277.1 L809.8 274.9 L810.3 272.0 L810.8 269.9 L811.3 267.2 L811.8 265.1 L812.3 262.6 L812.8 260.3 L813.3 257.7 L813.8 255.9 L814.3 254.1 L814.8 251.7 L815.3 250.0 L815.8 248.0 L816.3 246.0 L816.8 243.9 L817.3 242.0 L817.8 239.9 L818.3 237.9 L818.8 236.1 L819.3 233.8 L819.8 231.9 L820.3 230.4 L820.8 228.0 L821.3 226.0 L821.8 225.0 L822.3 224.3 L822.8 222.9 L823.3 222.0 L823.8 221.3 L824.3 220.2 L824.8 218.6 L825.3 217.8 L825.8 217.0 L826.3 216.0 L826.8 215.0 L827.3 213.9 L827.8 212.9 L828.3 212.5 L828.8 212.0 L829.3 211.0 L829.8 210.4 L830.3 210.1 L830.8 209.1 L831.3 208.6 L831.8 207.9 L832.3 207.3 L832.8 206.6 L833.3 206.0 L833.8 205.4 L834.3 205.1 L834.8 204.2 L835.3 203.7 L835.8 203.5 L836.3 203.6 L836.8 203.2 L837.3 203.3 L837.8 203.4 L838.3 203.4 L838.8 203.9 L839.3 204.0 L839.8 204.7 L840.3 204.8 L840.8 205.5 L841.3 205.6 L841.8 205.7 L842.3 206.4 L842.8 203.9 L843.3 207.5 L843.8 205.0 L844.3 208.1 L844.8 207.9 L845.3 208.8 L845.8 206.6 L846.3 209.7 L846.8 210.0 L847.3 210.2 L847.8 211.2 L848.3 211.2 L848.8 210.7 L849.3 212.4 L849.8 211.7 L850.3 212.8 L850.8 209.6 L851.3 213.8 L851.8 209.6 L852.3 214.4 L852.8 214.5 L853.3 214.9 L853.8 215.8 L854.3 215.7 L854.8 215.3 L855.3 216.6 L855.8 214.0 L856.3 217.3 L856.8 217.4 L857.3 217.9 L857.8 216.3 L858.3 218.8 L858.8 218.9 L859.3 219.4 L859.8 219.2 L860.3 219.9 L860.8 220.6 L861.3 220.6 L861.8 221.1 L862.3 221.5 L862.8 222.1 L863.3 222.2 L863.8 218.2 L864.3 222.8 L864.8 221.1 L865.3 223.7 L865.8 224.1 L866.3 224.5 L866.8 224.0 L867.3 225.0 L867.8 223.3 L868.3 226.0 L868.8 224.5 L869.3 226.2 L869.8 226.3 L870.3 227.4 L870.8 227.7 L871.3 228.2 L871.8 228.5 L872.3 228.3 L872.8 228.1 L873.3 229.2 L873.8 227.5 L874.3 229.8 L874.8 229.5 L875.3 230.7 L875.8 230.2 L876.3 231.3 L876.8 231.1 L877.3 232.1 L877.8 232.8 L878.3 232.8 L878.8 233.1 L879.3 233.5 L879.8 234.3 L880.3 234.5 L880.8 235.0 L881.3 234.9 L881.8 231.9 L882.3 235.7 L882.8 236.2 L883.3 236.3 L883.8 234.7 L884.3 237.2 L884.8 237.8 L885.3 238.0 L885.8 238.2 L886.3 238.7 L886.8 238.9 L887.3 239.3 L887.8 235.9 L888.3 240.3 L888.8 239.8 L889.3 241.1 L889.8 241.4 L890.3 241.3 L890.8 241.2 L891.3 242.0 L891.8 242.4 L892.3 243.2 L892.8 243.3 L893.3 243.6 L893.8 240.2 L894.3 244.1 L894.8 244.5 L895.3 245.2 L895.8 245.7 L896.3 245.6 L896.8 246.3 L897.3 246.6 L897.8 247.0 L898.3 247.3 L898.8 246.0 L899.3 247.8 L899.8 243.7 L900.3 248.5 L900.8 245.5 L901.3 249.1 L901.8 249.5 L902.3 249.3 L902.8 250.0 L903.3 250.0 L903.8 250.7 L904.3 251.0 L904.8 249.0 L905.3 251.2 L905.8 248.8 L906.3 251.8 L906.8 252.6 L907.3 252.5 L907.8 251.4 L908.3 253.2 L908.8 249.8 L909.3 254.0 L909.8 250.0 L910.3 254.3 L910.8 255.1 L911.3 255.4 L911.8 254.3 L912.3 255.5 L912.8 256.3 L913.3 256.4 L913.8 255.0 L914.3 257.2 L914.8 254.4 L915.3 257.6 L915.8 258.2 L916.3 258.3 L916.8 257.9 L917.3 258.9 L917.8 257.9 L918.3 259.7 L918.8 257.5 L919.3 260.2 L919.8 259.3 L920.3 260.6 L920.8 260.9 L921.3 261.3 L921.8 259.3 L922.3 261.4 L922.8 259.9 L923.3 262.2 L923.8 262.7 L924.3 263.0 L924.8 258.7 L925.3 263.1 L925.8 261.0 L926.3 263.8 L926.8 263.2 L927.3 264.0 L927.8 261.9 L928.3 264.7 L928.8 265.2 L929.3 265.3 L929.8 262.3 L930.3 265.9 L930.8 264.7 L931.3 266.2 L931.8 263.2 L932.3 266.6 L932.8 267.2 L933.3 267.6 L933.8 267.8 L934.3 267.9 L934.8 267.4 L935.3 268.1 L935.8 265.4 L936.3 269.1 L936.8 266.5 L937.3 269.1 L937.8 266.6 L938.3 269.8 L938.8 270.3 L939.3 270.1 L939.8 268.3 L940.3 270.7 L940.8 267.6 L941.3 271.5 L941.8 271.9 L942.3 271.8 L942.8 269.9 L943.3 272.6 L943.8 270.8 L944.3 272.6 L944.8 273.4 L945.3 273.3 L945.8 272.5 L946.3 274.1 L946.8 274.7 L947.3 274.9 L947.8 273.2 L948.3 275.2 L948.8 275.5 L949.3 276.3 L949.8 274.1 L950.3 276.6 L950.8 277.3 L951.3 277.3 L951.8 274.4 L952.3 277.8 L952.8 278.0 L953.3 278.7 L953.8 278.3 L954.3 279.6 L954.8 280.0 L955.3 280.2 L955.8 278.9 L956.3 280.8 L956.8 280.4 L957.3 281.4 L957.8 281.3 L958.3 282.2 L958.8 282.7 L959.3 282.4 L959.8 283.1 L960.3 283.6 L960.8 282.7 L961.3 283.8 L961.8 284.6 L962.3 284.6 L962.8 285.1 L963.3 285.3 L963.8 286.0 L964.3 286.3 L964.8 282.3 L965.3 287.5 L965.8 288.3 L966.3 289.4 L966.8 290.5 L967.3 290.9 L967.8 291.9 L968.3 292.5 L968.8 291.7 L969.3 294.3 L969.8 291.2 L970.3 296.3 L970.8 297.3 L971.3 298.1 L971.8 299.0 L972.3 299.8 L972.8 300.7 L973.3 301.3 L973.8 299.1 L974.3 303.0 L974.8 299.9 L975.3 304.5 L975.8 305.8 L976.3 306.3 L976.8 307.2 L977.3 308.3 L977.8 305.3 L978.3 310.8 L978.8 311.3 L979.3 313.1 L979.8 310.4 L980.3 315.6 L980.8 317.0 L981.3 318.3 L981.8 319.8 L982.3 320.5 L982.8 317.5 L983.3 323.5 L983.8 324.9 L984.3 326.0 L984.8 327.2 L985.3 328.1 L985.8 326.2 L986.3 330.7 L986.8 332.5 L987.3 333.3 L987.8 333.2 L988.3 335.9 L988.8 332.7 L989.3 338.8 L989.8 340.1 L990.3 341.5 L990.8 339.5 L991.3 345.0 L991.8 347.0 L992.3 348.6 L992.8 348.5 L993.3 352.4 L993.8 354.0 L994.3 355.8 L994.8 357.7 L995.3 359.2 L995.8 361.2 L996.3 362.8 L996.8 364.7 L997.3 366.1 L997.8 368.2 L998.3 369.5 L998.8 371.7 L999.3 373.5 L999.8 371.2 L1000.3 376.9 L1000.8 374.7 L1001.3 380.0 L1001.8 378.7 L1002.3 383.9 L1002.8 385.3 L1003.3 387.4 L1003.8 385.2 L1004.3 390.5 L1004.8 391.5 L1005.3 394.2 L1005.8 396.0 L1006.3 397.5 L1006.8 399.2 L1007.3 401.1 L1007.8 403.2 L1008.3 404.8 L1008.8 406.7 L1009.3 408.0 L1009.8 409.3 L1010.3 411.8 L1010.8 410.4 L1011.3 415.3 L1011.8 416.8 L1012.3 418.8 L1012.8 420.6 L1013.3 421.9 L1013.8 424.0 L1014.3 425.8 L1014.8 427.1 L1015.3 429.2 L1015.8 427.5 L1016.3 432.8 L1016.8 429.9 L1017.3 436.3 L1017.8 434.5 L1018.3 439.5 L1018.8 441.6 L1019.3 443.1 L1019.8 445.0 L1020.3 446.7 L1020.8 448.6 L1021.3 450.1 L1021.8 447.2 L1022.3 453.2 L1022.8 451.6 L1023.3 457.3 L1023.8 459.0 L1024.3 460.3 L1024.8 462.6 L1025.3 463.9 L1025.8 465.9 L1026.3 467.2 L1026.8 469.6 L1027.3 470.8 L1027.8 472.9 L1028.3 474.8 L1028.8 476.7 L1029.3 478.1 L1029.8 479.7 L1030.3 482.1 L1030.8 483.6 L1031.3 485.3 L1031.8 487.7 L1032.3 489.2 L1032.8 491.3 L1033.3 493.1 L1033.8 492.7 L1034.3 496.4 L1034.8 498.6 L1035.3 500.4 L1035.8 502.3 L1036.3 503.8 L1036.8 505.4 L1037.3 506.7 L1037.8 507.0 L1038.3 507.0 L1038.8 507.2 L1039.3 507.4 L1039.8 507.8 L1040.3 508.2 L1040.8 508.6 L1041.3 508.4 L1041.8 508.9 L1042.3 508.9 L1042.8 509.6 L1043.3 509.4 L1043.8 509.9 L1044.3 509.9 L1044.8 510.1 L1045.3 510.6 L1045.8 511.1 L1046.3 510.8 L1046.8 511.3 L1047.3 511.4 L1047.8 512.0 L1048.3 512.3 L1048.8 512.1 L1049.3 512.7 L1049.8 513.0 L1050.3 513.2 L1050.8 513.3 L1051.3 513.9 L1051.8 513.8 L1052.3 514.1 L1052.8 514.3 L1053.3 514.8 L1053.8 514.7 L1054.3 514.8 L1054.8 515.0 L1055.3 515.6 L1055.8 515.6 L1056.3 516.0 L1056.8 516.0 L1057.3 516.7 L1057.8 516.4 L1058.3 516.6 L1058.8 517.1 L1059.3 517.3 L1059.8 517.5 L1060.3 517.8 L1060.8 518.3 L1061.3 518.0 L1061.8 518.6 L1062.3 518.9 L1062.8 519.3 L1063.3 519.5 L1063.8 519.4 L1064.3 520.2 L1064.8 520.5 L1065.3 520.5 L1065.8 521.1 L1066.3 521.5 L1066.8 521.5 L1067.3 521.8 L1067.8 522.1 L1068.3 522.3 L1068.8 523.0 L1069.3 522.9 L1069.8 523.3 L1070.3 524.0 L1070.8 524.4 L1071.3 524.7 L1071.8 525.2 L1072.3 525.8 L1072.8 526.4 L1073.3 526.8 L1073.3 533.1 L1072.8 533.5 L1072.3 533.8 L1071.8 533.5 L1071.3 533.9 L1070.8 534.1 L1070.3 533.9 L1069.8 534.5 L1069.3 534.7 L1068.8 534.5 L1068.3 534.6 L1067.8 535.0 L1067.3 535.0 L1066.8 535.0 L1066.3 535.5 L1065.8 535.5 L1065.3 535.4 L1064.8 535.5 L1064.3 535.7 L1063.8 535.9 L1063.3 536.3 L1062.8 536.3 L1062.3 536.5 L1061.8 536.7 L1061.3 536.9 L1060.8 536.6 L1060.3 537.1 L1059.8 537.6 L1059.3 537.8 L1058.8 537.5 L1058.3 537.9 L1057.8 538.2 L1057.3 538.2 L1056.8 538.5 L1056.3 538.4 L1055.8 538.9 L1055.3 539.1 L1054.8 539.0 L1054.3 539.3 L1053.8 540.0 L1053.3 540.1 L1052.8 540.4 L1052.3 540.4 L1051.8 540.7 L1051.3 541.0 L1050.8 541.2 L1050.3 540.9 L1049.8 541.5 L1049.3 541.5 L1048.8 541.9 L1048.3 541.9 L1047.8 542.3 L1047.3 542.8 L1046.8 542.8 L1046.3 542.8 L1045.8 543.2 L1045.3 543.3 L1044.8 543.9 L1044.3 543.7 L1043.8 543.9 L1043.3 544.3 L1042.8 544.2 L1042.3 544.7 L1041.8 545.2 L1041.3 545.7 L1040.8 546.7 L1040.3 548.0 L1039.8 549.3 L1039.3 550.2 L1038.8 551.4 L1038.3 552.6 L1037.8 553.8 L1037.3 555.1 L1036.8 556.2 L1036.3 557.3 L1035.8 558.4 L1035.3 559.9 L1034.8 561.2 L1034.3 562.3 L1033.8 563.4 L1033.3 564.7 L1032.8 565.6 L1032.3 567.0 L1031.8 568.1 L1031.3 570.0 L1030.8 571.9 L1030.3 573.7 L1029.8 575.5 L1029.3 577.3 L1028.8 579.1 L1028.3 581.2 L1027.8 583.0 L1027.3 585.0 L1026.8 586.5 L1026.3 588.6 L1025.8 590.7 L1025.3 592.2 L1024.8 594.3 L1024.3 596.1 L1023.8 597.8 L1023.3 600.1 L1022.8 601.6 L1022.3 603.7 L1021.8 605.2 L1021.3 607.1 L1020.8 609.4 L1020.3 611.0 L1019.8 612.7 L1019.3 614.7 L1018.8 616.6 L1018.3 618.8 L1017.8 620.6 L1017.3 622.8 L1016.8 625.4 L1016.3 627.4 L1015.8 629.1 L1015.3 631.4 L1014.8 633.5 L1014.3 635.9 L1013.8 638.0 L1013.3 640.2 L1012.8 642.3 L1012.3 644.3 L1011.8 646.6 L1011.3 648.7 L1010.8 650.8 L1010.3 652.8 L1009.8 655.1 L1009.3 657.2 L1008.8 659.5 L1008.3 661.1 L1007.8 663.7 L1007.3 665.3 L1006.8 667.9 L1006.3 669.9 L1005.8 672.0 L1005.3 674.3 L1004.8 676.0 L1004.3 677.7 L1003.8 679.8 L1003.3 681.8 L1002.8 683.5 L1002.3 685.2 L1001.8 687.1 L1001.3 689.0 L1000.8 691.0 L1000.3 692.6 L999.8 694.6 L999.3 696.5 L998.8 698.3 L998.3 700.1 L997.8 702.3 L997.3 704.2 L996.8 705.9 L996.3 707.7 L995.8 709.4 L995.3 711.4 L994.8 713.1 L994.3 715.3 L993.8 717.1 L993.3 718.7 L992.8 721.1 L992.3 722.6 L991.8 724.6 L991.3 726.4 L990.8 728.2 L990.3 729.5 L989.8 731.4 L989.3 733.4 L988.8 734.6 L988.3 736.4 L987.8 738.4 L987.3 740.1 L986.8 742.1 L986.3 743.8 L985.8 745.4 L985.3 747.4 L984.8 748.8 L984.3 750.6 L983.8 752.4 L983.3 754.0 L982.8 755.7 L982.3 757.6 L981.8 759.2 L981.3 761.3 L980.8 762.9 L980.3 764.5 L979.8 766.0 L979.3 767.9 L978.8 769.4 L978.3 770.9 L977.8 772.2 L977.3 773.8 L976.8 775.2 L976.3 776.2 L975.8 777.5 L975.3 779.0 L974.8 780.5 L974.3 781.5 L973.8 782.9 L973.3 784.5 L972.8 785.4 L972.3 786.8 L971.8 788.6 L971.3 792.2 L970.8 791.0 L970.3 792.0 L969.8 793.9 L969.3 796.3 L968.8 795.5 L968.3 800.1 L967.8 796.1 L967.3 796.2 L966.8 796.2 L966.3 796.5 L965.8 797.0 L965.3 797.6 L964.8 797.3 L964.3 797.5 L963.8 798.1 L963.3 799.1 L962.8 798.5 L962.3 803.5 L961.8 799.3 L961.3 799.2 L960.8 799.7 L960.3 802.2 L959.8 800.2 L959.3 801.9 L958.8 800.6 L958.3 801.0 L957.8 801.6 L957.3 802.4 L956.8 802.1 L956.3 802.0 L955.8 802.5 L955.3 803.4 L954.8 802.9 L954.3 804.4 L953.8 803.7 L953.3 808.6 L952.8 804.2 L952.3 804.5 L951.8 804.5 L951.3 804.8 L950.8 805.5 L950.3 805.3 L949.8 805.6 L949.3 805.9 L948.8 806.4 L948.3 809.2 L947.8 807.1 L947.3 809.6 L946.8 807.3 L946.3 807.5 L945.8 808.3 L945.3 808.2 L944.8 808.8 L944.3 808.9 L943.8 809.0 L943.3 809.3 L942.8 809.5 L942.3 813.4 L941.8 810.4 L941.3 810.5 L940.8 810.9 L940.3 811.2 L939.8 811.2 L939.3 814.9 L938.8 811.9 L938.3 816.2 L937.8 812.2 L937.3 813.3 L936.8 812.5 L936.3 812.6 L935.8 813.3 L935.3 816.1 L934.8 813.3 L934.3 817.0 L933.8 814.0 L933.3 813.9 L932.8 814.3 L932.3 818.6 L931.8 814.6 L931.3 818.8 L930.8 814.9 L930.3 815.2 L929.8 815.6 L929.3 815.4 L928.8 815.7 L928.3 819.1 L927.8 816.2 L927.3 818.6 L926.8 816.5 L926.3 816.6 L925.8 816.9 L925.3 817.0 L924.8 817.7 L924.3 817.5 L923.8 817.9 L923.3 817.7 L922.8 818.2 L922.3 818.4 L921.8 818.6 L921.3 818.5 L920.8 818.8 L920.3 821.7 L919.8 819.3 L919.3 819.4 L918.8 819.6 L918.3 819.8 L917.8 820.1 L917.3 820.1 L916.8 820.7 L916.3 820.7 L915.8 820.8 L915.3 822.7 L914.8 821.2 L914.3 821.4 L913.8 822.0 L913.3 821.7 L912.8 822.2 L912.3 825.0 L911.8 822.8 L911.3 822.5 L910.8 822.9 L910.3 824.8 L909.8 823.3 L909.3 827.7 L908.8 823.6 L908.3 828.0 L907.8 824.2 L907.3 824.2 L906.8 824.6 L906.3 824.6 L905.8 825.2 L905.3 825.1 L904.8 825.8 L904.3 826.6 L903.8 826.0 L903.3 826.1 L902.8 826.7 L902.3 826.6 L901.8 827.3 L901.3 827.1 L900.8 827.6 L900.3 828.4 L899.8 828.0 L899.3 830.4 L898.8 828.5 L898.3 830.0 L897.8 829.2 L897.3 829.2 L896.8 829.5 L896.3 829.6 L895.8 829.9 L895.3 833.1 L894.8 830.5 L894.3 832.0 L893.8 830.9 L893.3 832.0 L892.8 831.5 L892.3 832.2 L891.8 832.0 L891.3 832.1 L890.8 832.5 L890.3 832.6 L889.8 832.9 L889.3 834.9 L888.8 833.5 L888.3 833.9 L887.8 834.4 L887.3 836.4 L886.8 834.9 L886.3 837.8 L885.8 834.9 L885.3 835.2 L884.8 835.4 L884.3 837.2 L883.8 836.2 L883.3 836.3 L882.8 836.6 L882.3 838.0 L881.8 837.3 L881.3 837.2 L880.8 837.8 L880.3 837.8 L879.8 838.2 L879.3 838.1 L878.8 838.4 L878.3 842.4 L877.8 839.3 L877.3 840.9 L876.8 839.4 L876.3 839.6 L875.8 839.9 L875.3 840.1 L874.8 840.5 L874.3 840.9 L873.8 840.9 L873.3 841.4 L872.8 842.0 L872.3 842.0 L871.8 842.9 L871.3 843.7 L870.8 843.6 L870.3 843.6 L869.8 844.1 L869.3 845.9 L868.8 844.8 L868.3 845.0 L867.8 845.9 L867.3 848.1 L866.8 846.3 L866.3 846.5 L865.8 847.4 L865.3 848.4 L864.8 847.7 L864.3 848.1 L863.8 848.4 L863.3 851.2 L862.8 849.3 L862.3 853.3 L861.8 850.3 L861.3 850.3 L860.8 851.1 L860.3 851.3 L859.8 851.8 L859.3 854.6 L858.8 852.3 L858.3 852.5 L857.8 853.5 L857.3 853.6 L856.8 854.2 L856.3 855.7 L855.8 854.8 L855.3 857.6 L854.8 855.5 L854.3 856.0 L853.8 855.9 L853.3 858.0 L852.8 856.9 L852.3 857.7 L851.8 857.9 L851.3 857.8 L850.8 858.6 L850.3 858.5 L849.8 859.3 L849.3 861.9 L848.8 859.8 L848.3 860.8 L847.8 861.0 L847.3 862.1 L846.8 861.5 L846.3 861.6 L845.8 861.9 L845.3 862.5 L844.8 862.9 L844.3 863.1 L843.8 863.6 L843.3 863.8 L842.8 864.6 L842.3 866.0 L841.8 865.0 L841.3 865.3 L840.8 865.9 L840.3 866.1 L839.8 866.3 L839.3 866.1 L838.8 866.2 L838.3 869.6 L837.8 866.3 L837.3 867.2 L836.8 866.6 L836.3 869.3 L835.8 867.0 L835.3 869.0 L834.8 867.0 L834.3 867.4 L833.8 865.2 L833.3 863.0 L832.8 861.0 L832.3 858.9 L831.8 856.3 L831.3 854.3 L830.8 852.2 L830.3 850.0 L829.8 847.7 L829.3 845.7 L828.8 843.5 L828.3 841.7 L827.8 839.4 L827.3 837.0 L826.8 835.0 L826.3 832.9 L825.8 830.7 L825.3 828.5 L824.8 826.3 L824.3 824.1 L823.8 822.5 L823.3 820.2 L822.8 817.7 L822.3 815.9 L821.8 813.9 L821.3 811.5 L820.8 809.1 L820.3 807.3 L819.8 805.1 L819.3 802.8 L818.8 800.9 L818.3 798.5 L817.8 796.9 L817.3 794.6 L816.8 792.5 L816.3 790.6 L815.8 788.3 L815.3 785.9 L814.8 783.8 L814.3 781.6 L813.8 779.5 L813.3 777.8 L812.8 775.7 L812.3 773.3 L811.8 771.1 L811.3 769.2 L810.8 767.2 L810.3 765.2 L809.8 762.6 L809.3 760.9 L808.8 758.8 L808.3 756.6 L807.8 754.3 L807.3 752.2 L806.8 750.6 L806.3 748.3 L805.8 746.3 L805.3 744.5 L804.8 742.3 L804.3 740.6 L803.8 738.3 L803.3 736.2 L802.8 734.5 L802.3 732.5 L801.8 730.6 L801.3 728.6 L800.8 726.7 L800.3 724.7 L799.8 722.5 L799.3 720.5 L798.8 718.3 L798.3 716.4 L797.8 714.5 L797.3 712.2 L796.8 710.6 L796.3 708.3 L795.8 706.5 L795.3 704.8 L794.8 702.3 L794.3 700.5 L793.8 699.0 L793.3 697.1 L792.8 695.7 L792.3 693.5 L791.8 692.2 L791.3 690.5 L790.8 688.7 L790.3 686.7 L789.8 684.9 L789.3 683.3 L788.8 681.5 L788.3 679.7 L787.8 677.9 L787.3 676.2 L786.8 674.6 L786.3 672.9 L785.8 671.2 L785.3 669.0 L784.8 667.3 L784.3 665.6 L783.8 664.0 L783.3 662.1 L782.8 660.2 L782.3 658.4 L781.8 656.8 L781.3 655.2 L780.8 653.9 L780.3 652.2 L779.8 650.5 L779.3 648.9 L778.8 647.2 L778.3 645.4 L777.8 643.8 L777.3 641.7 L776.8 640.4 L776.3 637.4 L775.8 634.2 L775.3 631.3 L774.8 628.5 L774.3 625.2 L773.8 622.3 L773.3 619.1 L772.8 616.1 L772.3 613.5 L771.8 609.9 L771.3 607.0 L770.8 604.3 L770.3 602.2 L769.8 600.2 L769.3 598.8 L768.8 596.8 L768.3 595.2 L767.8 593.3 L767.3 591.7 L766.8 589.9 L766.3 588.1 L765.8 586.1 L765.3 584.4 L764.8 583.1 L764.3 581.1 L763.8 579.1 L763.3 577.8 L762.8 575.7 L762.3 574.0 L761.8 572.8 L761.3 571.1 L760.8 569.8 L760.3 568.3 L759.8 566.7 L759.3 565.4 L758.8 563.7 L758.3 562.4 L757.8 561.0 L757.3 559.2 L756.8 557.9 L756.3 556.2 L755.8 555.0 L755.3 553.8 L754.8 552.1 L754.3 550.7 L753.8 548.8 L753.3 546.4 L752.8 545.0 L752.3 542.8 L751.8 540.5 L751.3 538.9 L750.8 536.7 L750.3 534.6 L749.8 534.7 L749.3 534.1 L748.8 533.8 L748.3 533.1Z"/></clipPath><clipPath id="bc2"><path d="M1330.6 526.5 L1331.1 524.4 L1331.6 521.7 L1332.1 520.2 L1332.6 519.1 L1333.1 517.4 L1333.6 516.3 L1334.1 514.9 L1334.6 513.3 L1335.1 508.8 L1335.6 504.0 L1336.1 499.5 L1336.6 494.8 L1337.1 493.8 L1337.6 492.4 L1338.1 491.3 L1338.6 490.6 L1339.1 489.1 L1339.6 488.2 L1340.1 486.8 L1340.6 485.7 L1341.1 484.4 L1341.6 483.7 L1342.1 482.4 L1342.6 481.0 L1343.1 479.5 L1343.6 478.2 L1344.1 477.1 L1344.6 475.3 L1345.1 474.1 L1345.6 472.3 L1346.1 470.7 L1346.6 469.6 L1347.1 467.6 L1347.6 466.2 L1348.1 465.0 L1348.6 463.5 L1349.1 461.9 L1349.6 460.2 L1350.1 458.8 L1350.6 457.6 L1351.1 456.2 L1351.6 454.6 L1352.1 452.7 L1352.6 451.6 L1353.1 449.8 L1353.6 448.1 L1354.1 446.0 L1354.6 444.3 L1355.1 442.6 L1355.6 440.3 L1356.1 438.6 L1356.6 436.7 L1357.1 434.8 L1357.6 432.8 L1358.1 431.5 L1358.6 429.5 L1359.1 427.7 L1359.6 425.7 L1360.1 423.6 L1360.6 421.8 L1361.1 420.4 L1361.6 418.3 L1362.1 415.9 L1362.6 413.9 L1363.1 412.1 L1363.6 410.0 L1364.1 408.2 L1364.6 405.7 L1365.1 404.0 L1365.6 401.7 L1366.1 399.8 L1366.6 398.1 L1367.1 395.9 L1367.6 394.0 L1368.1 391.5 L1368.6 389.7 L1369.1 388.0 L1369.6 385.9 L1370.1 383.4 L1370.6 380.9 L1371.1 378.4 L1371.6 376.1 L1372.1 373.6 L1372.6 371.4 L1373.1 368.7 L1373.6 366.4 L1374.1 364.1 L1374.6 361.4 L1375.1 358.7 L1375.6 356.8 L1376.1 354.3 L1376.6 351.6 L1377.1 349.3 L1377.6 346.7 L1378.1 343.9 L1378.6 341.5 L1379.1 338.7 L1379.6 336.2 L1380.1 333.3 L1380.6 330.7 L1381.1 328.7 L1381.6 325.8 L1382.1 323.1 L1382.6 320.5 L1383.1 318.1 L1383.6 315.8 L1384.1 313.3 L1384.6 311.1 L1385.1 308.7 L1385.6 306.0 L1386.1 303.5 L1386.6 301.1 L1387.1 298.8 L1387.6 296.6 L1388.1 293.9 L1388.6 291.5 L1389.1 289.2 L1389.6 286.7 L1390.1 284.4 L1390.6 281.9 L1391.1 279.6 L1391.6 277.3 L1392.1 274.8 L1392.6 272.3 L1393.1 269.5 L1393.6 267.4 L1394.1 265.0 L1394.6 262.7 L1395.1 260.3 L1395.6 257.8 L1396.1 255.9 L1396.6 254.1 L1397.1 251.6 L1397.6 249.9 L1398.1 247.9 L1398.6 245.8 L1399.1 244.0 L1399.6 242.1 L1400.1 240.2 L1400.6 238.1 L1401.1 236.2 L1401.6 233.9 L1402.1 232.1 L1402.6 229.9 L1403.1 228.3 L1403.6 225.9 L1404.1 225.1 L1404.6 224.4 L1405.1 223.3 L1405.6 222.0 L1406.1 220.7 L1406.6 220.0 L1407.1 218.7 L1407.6 217.9 L1408.1 216.6 L1408.6 216.0 L1409.1 214.8 L1409.6 213.5 L1410.1 213.2 L1410.6 212.6 L1411.1 212.1 L1411.6 211.4 L1412.1 210.7 L1412.6 209.8 L1413.1 209.5 L1413.6 208.8 L1414.1 208.3 L1414.6 207.4 L1415.1 206.6 L1415.6 206.1 L1416.1 205.8 L1416.6 204.8 L1417.1 204.0 L1417.6 203.6 L1418.1 203.9 L1418.6 203.3 L1419.1 203.2 L1419.6 203.5 L1420.1 203.5 L1420.6 203.4 L1421.1 203.1 L1421.6 203.8 L1422.1 203.4 L1422.6 204.6 L1423.1 205.5 L1423.6 205.7 L1424.1 204.2 L1424.6 206.3 L1425.1 206.8 L1425.6 207.1 L1426.1 207.7 L1426.6 208.3 L1427.1 208.4 L1427.6 209.1 L1428.1 208.3 L1428.6 209.8 L1429.1 209.8 L1429.6 210.4 L1430.1 211.1 L1430.6 211.3 L1431.1 212.0 L1431.6 211.8 L1432.1 211.9 L1432.6 212.6 L1433.1 213.6 L1433.6 213.6 L1434.1 212.5 L1434.6 214.5 L1435.1 215.1 L1435.6 215.3 L1436.1 215.8 L1436.6 215.7 L1437.1 216.5 L1437.6 216.3 L1438.1 216.8 L1438.6 217.2 L1439.1 216.9 L1439.6 217.9 L1440.1 217.2 L1440.6 218.6 L1441.1 219.1 L1441.6 219.2 L1442.1 219.9 L1442.6 220.0 L1443.1 218.5 L1443.6 220.6 L1444.1 221.3 L1444.6 221.3 L1445.1 217.5 L1445.6 222.2 L1446.1 222.8 L1446.6 222.9 L1447.1 219.4 L1447.6 223.8 L1448.1 224.3 L1448.6 224.4 L1449.1 223.6 L1449.6 224.9 L1450.1 225.5 L1450.6 225.5 L1451.1 226.3 L1451.6 226.3 L1452.1 227.1 L1452.6 227.5 L1453.1 227.8 L1453.6 228.1 L1454.1 227.9 L1454.6 228.6 L1455.1 229.2 L1455.6 229.0 L1456.1 229.7 L1456.6 230.2 L1457.1 230.6 L1457.6 230.6 L1458.1 227.5 L1458.6 231.7 L1459.1 232.1 L1459.6 232.0 L1460.1 232.8 L1460.6 232.6 L1461.1 232.9 L1461.6 233.5 L1462.1 234.1 L1462.6 234.1 L1463.1 234.5 L1463.6 235.2 L1464.1 232.0 L1464.6 236.0 L1465.1 234.5 L1465.6 236.7 L1466.1 235.8 L1466.6 237.3 L1467.1 234.6 L1467.6 238.2 L1468.1 237.7 L1468.6 238.7 L1469.1 235.4 L1469.6 239.1 L1470.1 238.8 L1470.6 240.2 L1471.1 240.7 L1471.6 240.9 L1472.1 241.0 L1472.6 241.7 L1473.1 242.1 L1473.6 242.1 L1474.1 241.6 L1474.6 243.1 L1475.1 238.7 L1475.6 243.8 L1476.1 243.4 L1476.6 244.6 L1477.1 241.8 L1477.6 244.9 L1478.1 245.6 L1478.6 245.6 L1479.1 243.6 L1479.6 246.5 L1480.1 246.8 L1480.6 247.0 L1481.1 244.0 L1481.6 247.8 L1482.1 246.6 L1482.6 248.2 L1483.1 248.4 L1483.6 248.8 L1484.1 246.0 L1484.6 249.6 L1485.1 246.6 L1485.6 250.2 L1486.1 248.3 L1486.6 250.5 L1487.1 251.3 L1487.6 251.1 L1488.1 247.0 L1488.6 252.1 L1489.1 252.6 L1489.6 252.8 L1490.1 248.6 L1490.6 253.5 L1491.1 250.0 L1491.6 254.0 L1492.1 252.5 L1492.6 254.7 L1493.1 255.0 L1493.6 255.0 L1494.1 255.7 L1494.6 255.8 L1495.1 252.4 L1495.6 256.2 L1496.1 253.5 L1496.6 256.7 L1497.1 257.6 L1497.6 257.7 L1498.1 255.7 L1498.6 258.1 L1499.1 258.8 L1499.6 258.8 L1500.1 259.4 L1500.6 259.5 L1501.1 260.1 L1501.6 260.4 L1502.1 255.8 L1502.6 260.8 L1503.1 257.9 L1503.6 261.4 L1504.1 261.2 L1504.6 261.9 L1505.1 261.9 L1505.6 262.4 L1506.1 261.2 L1506.6 262.9 L1507.1 261.3 L1507.6 263.2 L1508.1 263.8 L1508.6 263.8 L1509.1 263.7 L1509.6 264.0 L1510.1 264.6 L1510.6 264.9 L1511.1 260.8 L1511.6 265.0 L1512.1 263.9 L1512.6 265.9 L1513.1 266.3 L1513.6 266.4 L1514.1 266.8 L1514.6 267.1 L1515.1 266.7 L1515.6 267.4 L1516.1 267.0 L1516.6 267.9 L1517.1 268.4 L1517.6 268.2 L1518.1 267.5 L1518.6 268.8 L1519.1 268.6 L1519.6 269.2 L1520.1 265.1 L1520.6 269.6 L1521.1 268.5 L1521.6 270.4 L1522.1 270.7 L1522.6 270.9 L1523.1 266.8 L1523.6 271.4 L1524.1 271.6 L1524.6 271.9 L1525.1 272.4 L1525.6 272.1 L1526.1 272.9 L1526.6 272.8 L1527.1 269.5 L1527.6 273.5 L1528.1 272.9 L1528.6 274.1 L1529.1 274.6 L1529.6 274.9 L1530.1 275.4 L1530.6 275.2 L1531.1 273.6 L1531.6 275.8 L1532.1 276.7 L1532.6 276.6 L1533.1 277.2 L1533.6 277.3 L1534.1 277.2 L1534.6 278.2 L1535.1 274.1 L1535.6 279.0 L1536.1 277.3 L1536.6 279.2 L1537.1 279.3 L1537.6 280.0 L1538.1 275.7 L1538.6 280.9 L1539.1 280.1 L1539.6 281.2 L1540.1 281.7 L1540.6 281.9 L1541.1 282.3 L1541.6 282.7 L1542.1 282.2 L1542.6 283.2 L1543.1 283.8 L1543.6 283.9 L1544.1 283.8 L1544.6 284.8 L1545.1 284.2 L1545.6 285.5 L1546.1 282.2 L1546.6 286.0 L1547.1 285.3 L1547.6 287.7 L1548.1 288.3 L1548.6 289.6 L1549.1 290.5 L1549.6 290.8 L1550.1 291.5 L1550.6 292.8 L1551.1 293.2 L1551.6 294.3 L1552.1 295.6 L1552.6 296.4 L1553.1 294.6 L1553.6 297.9 L1554.1 297.7 L1554.6 299.4 L1555.1 297.2 L1555.6 301.1 L1556.1 302.4 L1556.6 303.1 L1557.1 301.3 L1557.6 304.5 L1558.1 305.8 L1558.6 306.6 L1559.1 307.5 L1559.6 308.3 L1560.1 309.4 L1560.6 310.5 L1561.1 311.5 L1561.6 313.2 L1562.1 314.7 L1562.6 315.8 L1563.1 312.3 L1563.6 318.1 L1564.1 319.3 L1564.6 320.8 L1565.1 319.8 L1565.6 323.1 L1566.1 324.8 L1566.6 325.7 L1567.1 327.1 L1567.6 328.3 L1568.1 329.9 L1568.6 331.0 L1569.1 332.3 L1569.6 333.5 L1570.1 335.0 L1570.6 336.1 L1571.1 336.6 L1571.6 338.8 L1572.1 340.1 L1572.6 341.5 L1573.1 343.6 L1573.6 345.2 L1574.1 347.1 L1574.6 348.4 L1575.1 350.7 L1575.6 352.0 L1576.1 351.0 L1576.6 355.8 L1577.1 357.3 L1577.6 359.0 L1578.1 360.0 L1578.6 362.7 L1579.1 364.7 L1579.6 366.2 L1580.1 368.0 L1580.6 369.5 L1581.1 371.6 L1581.6 373.2 L1582.1 373.9 L1582.6 376.5 L1583.1 378.5 L1583.6 380.3 L1584.1 381.3 L1584.6 383.4 L1585.1 385.7 L1585.6 386.9 L1586.1 387.4 L1586.6 390.8 L1587.1 391.3 L1587.6 394.3 L1588.1 396.2 L1588.6 397.5 L1589.1 399.4 L1589.6 401.1 L1590.1 402.6 L1590.6 404.4 L1591.1 404.5 L1591.6 408.4 L1592.1 409.1 L1592.6 411.7 L1593.1 413.2 L1593.6 414.9 L1594.1 416.8 L1594.6 418.6 L1595.1 417.1 L1595.6 422.1 L1596.1 423.6 L1596.6 425.6 L1597.1 424.8 L1597.6 429.0 L1598.1 429.1 L1598.6 432.6 L1599.1 434.6 L1599.6 436.0 L1600.1 437.3 L1600.6 439.4 L1601.1 439.3 L1601.6 443.3 L1602.1 445.1 L1602.6 446.8 L1603.1 445.9 L1603.6 450.3 L1604.1 452.1 L1604.6 453.4 L1605.1 454.7 L1605.6 457.3 L1606.1 457.5 L1606.6 460.4 L1607.1 462.0 L1607.6 464.3 L1608.1 464.4 L1608.6 467.6 L1609.1 468.6 L1609.6 470.7 L1610.1 470.4 L1610.6 474.4 L1611.1 476.7 L1611.6 478.4 L1612.1 479.7 L1612.6 482.2 L1613.1 479.2 L1613.6 485.7 L1614.1 487.6 L1614.6 489.3 L1615.1 491.3 L1615.6 492.7 L1616.1 494.2 L1616.6 496.5 L1617.1 498.3 L1617.6 500.5 L1618.1 502.2 L1618.6 503.6 L1619.1 503.4 L1619.6 506.3 L1620.1 506.9 L1620.6 507.2 L1621.1 507.6 L1621.6 507.5 L1622.1 507.9 L1622.6 508.1 L1623.1 508.3 L1623.6 508.5 L1624.1 508.9 L1624.6 508.9 L1625.1 509.5 L1625.6 509.3 L1626.1 509.8 L1626.6 510.3 L1627.1 510.4 L1627.6 510.6 L1628.1 510.9 L1628.6 511.0 L1629.1 511.4 L1629.6 511.7 L1630.1 511.7 L1630.6 512.2 L1631.1 512.2 L1631.6 512.4 L1632.1 512.8 L1632.6 513.1 L1633.1 513.1 L1633.6 513.6 L1634.1 513.6 L1634.6 514.4 L1635.1 514.4 L1635.6 514.5 L1636.1 515.1 L1636.6 514.8 L1637.1 515.5 L1637.6 515.4 L1638.1 515.9 L1638.6 515.7 L1639.1 516.1 L1639.6 516.2 L1640.1 516.6 L1640.6 516.8 L1641.1 517.0 L1641.6 517.4 L1642.1 517.7 L1642.6 517.6 L1643.1 518.2 L1643.6 518.0 L1644.1 518.6 L1644.6 518.9 L1645.1 519.3 L1645.6 519.2 L1646.1 519.4 L1646.6 520.0 L1647.1 520.2 L1647.6 520.7 L1648.1 520.6 L1648.6 521.1 L1649.1 521.7 L1649.6 522.1 L1650.1 522.0 L1650.6 522.7 L1651.1 522.6 L1651.6 523.2 L1652.1 523.5 L1652.6 523.7 L1653.1 524.3 L1653.6 524.7 L1654.1 525.4 L1654.6 525.5 L1655.1 526.3 L1655.6 526.5 L1655.6 533.1 L1655.1 533.6 L1654.6 533.9 L1654.1 533.6 L1653.6 533.6 L1653.1 533.9 L1652.6 534.2 L1652.1 534.1 L1651.6 534.4 L1651.1 534.3 L1650.6 534.6 L1650.1 534.9 L1649.6 534.9 L1649.1 535.2 L1648.6 535.0 L1648.1 535.5 L1647.6 535.3 L1647.1 535.9 L1646.6 536.1 L1646.1 536.2 L1645.6 536.0 L1645.1 536.0 L1644.6 536.2 L1644.1 536.7 L1643.6 536.7 L1643.1 537.2 L1642.6 536.9 L1642.1 537.3 L1641.6 537.7 L1641.1 537.8 L1640.6 537.9 L1640.1 537.9 L1639.6 538.1 L1639.1 538.4 L1638.6 538.9 L1638.1 539.1 L1637.6 538.9 L1637.1 539.6 L1636.6 539.2 L1636.1 539.8 L1635.6 540.2 L1635.1 540.0 L1634.6 540.6 L1634.1 540.6 L1633.6 540.5 L1633.1 540.9 L1632.6 541.1 L1632.1 541.2 L1631.6 541.8 L1631.1 541.6 L1630.6 542.2 L1630.1 542.2 L1629.6 542.2 L1629.1 542.8 L1628.6 542.7 L1628.1 543.2 L1627.6 543.5 L1627.1 543.7 L1626.6 543.8 L1626.1 543.8 L1625.6 544.3 L1625.1 544.2 L1624.6 544.8 L1624.1 544.7 L1623.6 545.8 L1623.1 546.8 L1622.6 548.0 L1622.1 549.3 L1621.6 550.2 L1621.1 551.4 L1620.6 553.0 L1620.1 553.9 L1619.6 555.3 L1619.1 556.5 L1618.6 557.5 L1618.1 558.5 L1617.6 559.6 L1617.1 561.3 L1616.6 562.0 L1616.1 563.4 L1615.6 564.6 L1615.1 565.5 L1614.6 566.9 L1614.1 567.9 L1613.6 570.0 L1613.1 571.8 L1612.6 573.6 L1612.1 575.4 L1611.6 577.4 L1611.1 579.1 L1610.6 580.9 L1610.1 582.9 L1609.6 585.1 L1609.1 586.8 L1608.6 588.9 L1608.1 590.2 L1607.6 592.6 L1607.1 594.2 L1606.6 596.3 L1606.1 598.0 L1605.6 600.0 L1605.1 601.6 L1604.6 603.7 L1604.1 605.2 L1603.6 607.2 L1603.1 608.9 L1602.6 611.0 L1602.1 612.9 L1601.6 614.7 L1601.1 616.9 L1600.6 618.4 L1600.1 620.9 L1599.6 622.8 L1599.1 625.1 L1598.6 627.4 L1598.1 629.5 L1597.6 631.2 L1597.1 633.5 L1596.6 635.8 L1596.1 638.2 L1595.6 639.7 L1595.1 642.2 L1594.6 644.4 L1594.1 646.6 L1593.6 648.5 L1593.1 650.9 L1592.6 652.8 L1592.1 655.2 L1591.6 656.8 L1591.1 659.5 L1590.6 661.3 L1590.1 663.4 L1589.6 665.4 L1589.1 667.6 L1588.6 670.0 L1588.1 672.1 L1587.6 673.8 L1587.1 675.8 L1586.6 677.6 L1586.1 679.5 L1585.6 681.4 L1585.1 683.3 L1584.6 685.6 L1584.1 687.4 L1583.6 689.2 L1583.1 690.9 L1582.6 692.8 L1582.1 694.8 L1581.6 696.7 L1581.1 698.5 L1580.6 700.3 L1580.1 701.9 L1579.6 704.1 L1579.1 706.1 L1578.6 707.9 L1578.1 709.4 L1577.6 711.6 L1577.1 713.3 L1576.6 715.0 L1576.1 717.4 L1575.6 719.1 L1575.1 721.0 L1574.6 722.5 L1574.1 724.6 L1573.6 726.4 L1573.1 728.2 L1572.6 729.8 L1572.1 731.6 L1571.6 733.3 L1571.1 735.0 L1570.6 736.6 L1570.1 738.6 L1569.6 740.3 L1569.1 742.1 L1568.6 743.5 L1568.1 745.6 L1567.6 747.1 L1567.1 749.1 L1566.6 750.3 L1566.1 752.6 L1565.6 754.2 L1565.1 755.7 L1564.6 757.8 L1564.1 759.1 L1563.6 760.9 L1563.1 762.8 L1562.6 764.4 L1562.1 766.3 L1561.6 768.2 L1561.1 769.6 L1560.6 771.0 L1560.1 772.1 L1559.6 773.7 L1559.1 775.0 L1558.6 776.3 L1558.1 777.8 L1557.6 779.1 L1557.1 780.2 L1556.6 781.3 L1556.1 783.0 L1555.6 784.5 L1555.1 785.5 L1554.6 787.0 L1554.1 788.5 L1553.6 791.8 L1553.1 790.7 L1552.6 792.6 L1552.1 793.4 L1551.6 794.7 L1551.1 795.5 L1550.6 795.6 L1550.1 795.9 L1549.6 796.3 L1549.1 796.3 L1548.6 796.4 L1548.1 796.9 L1547.6 799.9 L1547.1 797.6 L1546.6 797.6 L1546.1 797.8 L1545.6 798.1 L1545.1 798.7 L1544.6 799.0 L1544.1 799.3 L1543.6 801.8 L1543.1 799.5 L1542.6 801.3 L1542.1 800.0 L1541.6 803.1 L1541.1 800.7 L1540.6 800.9 L1540.1 801.7 L1539.6 801.6 L1539.1 801.8 L1538.6 805.5 L1538.1 802.6 L1537.6 806.1 L1537.1 803.0 L1536.6 803.7 L1536.1 803.9 L1535.6 804.3 L1535.1 804.5 L1534.6 804.2 L1534.1 805.0 L1533.6 804.8 L1533.1 805.3 L1532.6 805.3 L1532.1 805.7 L1531.6 810.1 L1531.1 806.4 L1530.6 809.1 L1530.1 806.8 L1529.6 807.2 L1529.1 807.3 L1528.6 808.4 L1528.1 808.3 L1527.6 808.8 L1527.1 808.6 L1526.6 812.6 L1526.1 809.5 L1525.6 810.7 L1525.1 809.5 L1524.6 811.0 L1524.1 810.3 L1523.6 814.7 L1523.1 810.8 L1522.6 812.3 L1522.1 811.5 L1521.6 811.6 L1521.1 811.9 L1520.6 813.3 L1520.1 812.5 L1519.6 812.8 L1519.1 812.6 L1518.6 817.2 L1518.1 812.8 L1517.6 815.9 L1517.1 813.6 L1516.6 814.2 L1516.1 813.8 L1515.6 815.9 L1515.1 814.5 L1514.6 816.1 L1514.1 814.8 L1513.6 814.5 L1513.1 814.9 L1512.6 815.0 L1512.1 815.7 L1511.6 818.9 L1511.1 815.6 L1510.6 816.8 L1510.1 816.3 L1509.6 816.1 L1509.1 816.6 L1508.6 818.6 L1508.1 817.1 L1507.6 817.0 L1507.1 817.6 L1506.6 817.5 L1506.1 817.9 L1505.6 818.1 L1505.1 818.5 L1504.6 819.5 L1504.1 818.8 L1503.6 820.1 L1503.1 819.0 L1502.6 823.4 L1502.1 819.5 L1501.6 821.0 L1501.1 819.7 L1500.6 819.7 L1500.1 820.3 L1499.6 822.9 L1499.1 820.8 L1498.6 820.7 L1498.1 820.8 L1497.6 821.6 L1497.1 821.6 L1496.6 821.3 L1496.1 822.0 L1495.6 821.7 L1495.1 822.1 L1494.6 822.1 L1494.1 822.5 L1493.6 822.8 L1493.1 823.3 L1492.6 827.4 L1492.1 823.2 L1491.6 823.5 L1491.1 824.1 L1490.6 823.7 L1490.1 824.1 L1489.6 824.5 L1489.1 824.4 L1488.6 824.6 L1488.1 825.0 L1487.6 825.3 L1487.1 825.9 L1486.6 825.6 L1486.1 825.9 L1485.6 829.8 L1485.1 826.6 L1484.6 829.5 L1484.1 827.2 L1483.6 829.4 L1483.1 827.5 L1482.6 827.6 L1482.1 828.3 L1481.6 828.6 L1481.1 828.6 L1480.6 830.1 L1480.1 829.3 L1479.6 829.2 L1479.1 829.5 L1478.6 833.4 L1478.1 830.1 L1477.6 830.2 L1477.1 830.7 L1476.6 830.7 L1476.1 831.3 L1475.6 831.1 L1475.1 831.8 L1474.6 832.5 L1474.1 832.0 L1473.6 836.2 L1473.1 832.5 L1472.6 832.6 L1472.1 832.9 L1471.6 833.9 L1471.1 833.8 L1470.6 835.1 L1470.1 834.1 L1469.6 836.7 L1469.1 834.4 L1468.6 834.7 L1468.1 835.2 L1467.6 839.6 L1467.1 835.7 L1466.6 837.2 L1466.1 836.3 L1465.6 836.4 L1465.1 836.9 L1464.6 838.6 L1464.1 837.0 L1463.6 837.4 L1463.1 837.8 L1462.6 837.8 L1462.1 838.0 L1461.6 841.4 L1461.1 838.7 L1460.6 839.3 L1460.1 839.2 L1459.6 842.8 L1459.1 839.4 L1458.6 839.8 L1458.1 839.9 L1457.6 840.5 L1457.1 840.6 L1456.6 843.7 L1456.1 841.3 L1455.6 842.2 L1455.1 841.9 L1454.6 842.9 L1454.1 842.5 L1453.6 845.8 L1453.1 843.6 L1452.6 846.4 L1452.1 844.0 L1451.6 845.8 L1451.1 845.1 L1450.6 845.6 L1450.1 845.9 L1449.6 849.4 L1449.1 846.6 L1448.6 849.3 L1448.1 847.3 L1447.6 850.6 L1447.1 847.7 L1446.6 849.8 L1446.1 848.8 L1445.6 849.9 L1445.1 849.3 L1444.6 849.5 L1444.1 850.2 L1443.6 853.1 L1443.1 850.8 L1442.6 851.1 L1442.1 851.5 L1441.6 851.8 L1441.1 852.5 L1440.6 857.1 L1440.1 853.4 L1439.6 853.5 L1439.1 854.1 L1438.6 854.0 L1438.1 854.9 L1437.6 854.9 L1437.1 855.1 L1436.6 856.8 L1436.1 856.0 L1435.6 856.4 L1435.1 856.7 L1434.6 857.5 L1434.1 857.7 L1433.6 860.4 L1433.1 858.2 L1432.6 861.3 L1432.1 859.0 L1431.6 859.3 L1431.1 860.0 L1430.6 860.2 L1430.1 860.6 L1429.6 861.7 L1429.1 861.3 L1428.6 864.0 L1428.1 862.0 L1427.6 865.2 L1427.1 863.1 L1426.6 863.8 L1426.1 863.4 L1425.6 866.1 L1425.1 864.2 L1424.6 865.2 L1424.1 865.2 L1423.6 865.3 L1423.1 865.9 L1422.6 867.6 L1422.1 866.1 L1421.6 866.2 L1421.1 866.3 L1420.6 867.1 L1420.1 866.4 L1419.6 869.6 L1419.1 867.0 L1418.6 869.2 L1418.1 867.2 L1417.6 867.0 L1417.1 867.5 L1416.6 867.0 L1416.1 865.1 L1415.6 862.8 L1415.1 860.8 L1414.6 858.8 L1414.1 856.7 L1413.6 854.4 L1413.1 852.2 L1412.6 849.9 L1412.1 847.9 L1411.6 845.7 L1411.1 843.5 L1410.6 841.7 L1410.1 839.4 L1409.6 837.2 L1409.1 834.9 L1408.6 833.1 L1408.1 830.6 L1407.6 828.5 L1407.1 826.6 L1406.6 824.5 L1406.1 822.5 L1405.6 820.2 L1405.1 818.2 L1404.6 816.0 L1404.1 813.8 L1403.6 811.6 L1403.1 809.1 L1402.6 807.1 L1402.1 804.9 L1401.6 803.2 L1401.1 801.0 L1400.6 798.9 L1400.1 796.5 L1399.6 794.5 L1399.1 792.2 L1398.6 790.4 L1398.1 788.5 L1397.6 786.0 L1397.1 783.7 L1396.6 781.7 L1396.1 779.7 L1395.6 777.9 L1395.1 775.7 L1394.6 773.4 L1394.1 771.0 L1393.6 768.9 L1393.1 766.8 L1392.6 765.1 L1392.1 762.8 L1391.6 761.0 L1391.1 758.8 L1390.6 756.6 L1390.1 754.4 L1389.6 752.6 L1389.1 750.2 L1388.6 748.2 L1388.1 746.5 L1387.6 744.4 L1387.1 742.3 L1386.6 740.3 L1386.1 738.1 L1385.6 736.7 L1385.1 734.6 L1384.6 732.7 L1384.1 730.7 L1383.6 728.4 L1383.1 726.6 L1382.6 724.4 L1382.1 722.7 L1381.6 720.7 L1381.1 718.3 L1380.6 716.2 L1380.1 714.3 L1379.6 712.5 L1379.1 710.4 L1378.6 708.2 L1378.1 706.7 L1377.6 704.7 L1377.1 702.5 L1376.6 700.5 L1376.1 699.3 L1375.6 697.3 L1375.1 695.3 L1374.6 693.7 L1374.1 692.1 L1373.6 690.5 L1373.1 688.5 L1372.6 686.8 L1372.1 684.8 L1371.6 683.1 L1371.1 681.7 L1370.6 679.7 L1370.1 677.7 L1369.6 676.3 L1369.1 674.2 L1368.6 672.5 L1368.1 670.9 L1367.6 669.2 L1367.1 667.5 L1366.6 665.8 L1366.1 663.9 L1365.6 661.9 L1365.1 660.5 L1364.6 658.4 L1364.1 656.9 L1363.6 655.2 L1363.1 653.7 L1362.6 652.0 L1362.1 650.1 L1361.6 648.7 L1361.1 647.1 L1360.6 645.3 L1360.1 643.4 L1359.6 642.2 L1359.1 640.4 L1358.6 637.0 L1358.1 634.1 L1357.6 631.6 L1357.1 628.1 L1356.6 625.2 L1356.1 622.4 L1355.6 619.4 L1355.1 616.3 L1354.6 613.4 L1354.1 609.9 L1353.6 607.0 L1353.1 604.5 L1352.6 602.4 L1352.1 600.2 L1351.6 598.4 L1351.1 596.8 L1350.6 595.4 L1350.1 593.2 L1349.6 591.7 L1349.1 590.1 L1348.6 588.2 L1348.1 586.6 L1347.6 584.5 L1347.1 582.6 L1346.6 580.8 L1346.1 579.5 L1345.6 577.3 L1345.1 576.1 L1344.6 574.3 L1344.1 572.6 L1343.6 571.4 L1343.1 569.6 L1342.6 568.3 L1342.1 566.6 L1341.6 565.5 L1341.1 564.1 L1340.6 562.7 L1340.1 560.6 L1339.6 559.7 L1339.1 558.0 L1338.6 556.7 L1338.1 555.0 L1337.6 553.6 L1337.1 552.1 L1336.6 550.8 L1336.1 548.4 L1335.6 546.4 L1335.1 544.7 L1334.6 542.6 L1334.1 540.7 L1333.6 538.5 L1333.1 536.9 L1332.6 534.5 L1332.1 534.6 L1331.6 534.2 L1331.1 533.6 L1330.6 533.1Z"/></clipPath></defs><path d="M3.0 523.9 L4.3 523.1 L5.6 523.4 L6.9 523.0 L8.2 525.1 L9.5 523.7 L10.8 523.3 L12.1 523.0 L13.4 524.2 L14.7 524.6 L16.0 524.6 L17.3 523.0 L18.6 523.3 L19.9 523.2 L21.2 524.3 L22.5 523.0 L23.8 523.8 L25.1 525.1 L26.4 524.3 L27.7 523.0 L29.0 523.0 L30.3 523.0 L31.6 524.1 L32.9 523.8 L34.2 523.6 L35.5 523.5 L36.8 523.4 L38.1 523.8 L39.4 523.9 L40.7 524.8 L42.0 524.2 L43.3 524.4 L44.6 524.8 L45.9 524.5 L47.2 524.1 L48.5 523.0 L49.8 524.0 L51.1 524.6 L52.4 523.4 L53.7 524.7 L55.0 523.1 L56.3 525.0 L57.6 523.4 L58.9 524.1 L60.2 523.1 L61.5 523.2 L62.8 523.3 L64.1 523.2 L65.4 523.0 L66.7 523.4 L68.0 525.1 L69.3 523.9 L70.6 524.9 L71.9 524.3 L73.2 524.5 L74.5 525.2 L75.8 524.2 L77.1 523.2 L78.4 523.1 L79.7 523.4 L81.0 523.0 L82.3 523.1 L83.6 524.7 L84.9 524.9 L86.2 523.2 L87.5 524.3 L88.8 524.3 L90.1 524.7 L91.4 524.4 L92.7 523.6 L94.0 523.0 L95.3 524.5 L96.6 523.2 L97.9 523.9 L99.2 523.3 L100.5 523.6 L101.8 525.1 L103.1 523.1 L104.4 523.6 L105.7 523.9 L107.0 523.6 L108.3 524.9 L109.6 523.4 L110.9 524.8 L112.2 524.0 L113.5 525.1 L114.8 523.0 L116.1 523.1 L117.4 523.2 L118.7 524.8 L120.0 523.0 L121.3 523.1 L122.6 524.1 L123.9 525.2 L125.2 523.1 L126.5 523.4 L127.8 524.0 L129.1 524.0 L130.4 524.2 L131.7 524.2 L133.0 523.1 L134.3 523.1 L135.6 523.0 L136.9 524.1 L138.2 523.1 L139.5 523.1 L140.8 525.0 L142.1 523.9 L143.4 523.8 L144.7 523.9 L146.0 523.8 L147.3 524.1 L148.6 523.2 L149.9 523.0 L151.2 523.0 L152.5 523.0 L153.8 523.3 L155.1 523.0 L156.4 523.0 L157.7 523.5 L159.0 525.1 L160.3 524.0 L161.6 523.2 L162.9 524.3 L164.2 523.1 L165.5 523.0 L166.8 523.2 L168.1 523.4 L169.4 524.0 L170.7 523.4 L172.0 524.2 L173.3 523.0 L174.6 524.9 L175.9 523.3 L177.2 524.5 L178.5 523.0 L179.8 524.5 L181.1 523.1 L182.4 524.6 L183.7 524.4 L185.0 524.0 L186.3 523.2 L187.6 523.0 L188.9 523.1 L190.2 524.8 L191.5 523.1 L192.8 524.0 L194.1 523.8 L195.4 524.0 L196.7 523.1 L198.0 523.0 L199.3 523.0 L200.6 525.1 L201.9 523.3 L203.2 523.9 L204.5 523.7 L205.8 523.1 L207.1 523.0 L208.4 523.0 L209.7 524.6 L211.0 523.0 L212.3 525.0 L213.6 523.3 L214.9 524.1 L216.2 523.0 L217.5 524.4 L218.8 523.1 L220.1 523.3 L221.4 523.6 L222.7 523.0 L224.0 523.1 L225.3 524.4 L226.6 523.2 L227.9 523.3 L229.2 524.3 L230.5 523.1 L231.8 523.1 L233.1 523.1 L234.4 523.3 L235.7 523.3 L237.0 523.9 L238.3 523.5 L239.6 524.7 L240.9 523.0 L242.2 524.0 L243.5 524.5 L244.8 523.1 L246.1 523.0 L247.4 523.4 L248.7 523.0 L250.0 523.5 L251.3 524.1 L252.6 523.0 L253.9 523.0 L255.2 523.5 L256.5 523.1 L257.8 523.1 L259.1 523.4 L260.4 523.0 L261.7 523.0 L263.0 523.3 L264.3 523.5 L265.6 524.9 L266.9 523.7 L268.2 523.0 L269.5 523.1 L270.8 524.2 L272.1 523.7 L273.4 524.7 L274.7 525.0 L276.0 524.6 L277.3 523.0 L278.6 525.0 L279.9 523.6 L281.2 523.1 L282.5 523.1 L283.8 524.6 L285.1 523.1 L286.4 523.0 L287.7 523.2 L289.0 524.9 L290.3 523.5 L291.6 524.2 L292.9 523.0 L294.2 523.5 L295.5 523.2 L296.8 523.1 L298.1 524.0 L299.4 523.3 L300.7 523.0 L302.0 525.1 L303.3 523.5 L304.6 523.1 L305.9 523.0 L307.2 523.9 L308.5 523.6 L309.8 523.0 L311.1 523.5 L312.4 524.2 L313.7 523.6 L315.0 523.1 L316.3 523.5 L317.6 523.8 L318.9 523.9 L320.2 523.0 L321.5 524.4 L322.8 525.0 L324.1 524.2 L325.4 524.6 L326.7 523.3 L328.0 524.8 L329.3 523.1 L330.6 523.1 L331.9 523.8 L333.2 524.8 L334.5 523.0 L335.8 523.1 L337.1 523.0 L338.4 523.4 L339.7 523.0 L341.0 523.1 L342.3 524.2 L343.6 523.7 L344.9 524.9 L346.2 523.4 L347.5 524.0 L348.8 523.0 L350.1 525.0 L351.4 523.1 L352.7 523.5 L354.0 523.6 L355.3 525.0 L356.6 523.5 L357.9 525.2 L359.2 523.8 L360.5 523.1 L361.8 524.5 L363.1 523.1 L364.4 525.2 L365.7 523.5 L367.0 523.1 L368.3 525.0 L369.6 523.2 L370.9 523.4 L372.2 523.3 L373.5 524.0 L374.8 523.0 L376.1 523.3 L377.4 523.1 L378.7 524.5 L380.0 523.0 L381.3 523.8 L382.6 523.1 L383.9 523.5 L385.2 523.7 L386.5 524.1 L387.8 523.0 L389.1 523.1 L390.4 523.0 L391.7 525.0 L393.0 523.0 L394.3 523.0 L395.6 523.6 L396.9 523.7 L398.2 524.7 L399.5 523.0 L400.8 523.1 L402.1 523.1 L403.4 523.8 L404.7 523.5 L406.0 523.4 L407.3 524.7 L408.6 524.0 L409.9 524.6 L411.2 525.0 L412.5 523.2 L413.8 525.0 L415.1 523.4 L416.4 523.0 L417.7 524.8 L419.0 523.0 L420.3 523.0 L421.6 523.2 L422.9 523.2 L424.2 525.1 L425.5 524.7 L426.8 523.4 L428.1 523.6 L429.4 524.6 L430.7 524.4 L432.0 523.9 L433.3 523.6 L434.6 523.0 L435.9 523.1 L437.2 524.0 L438.5 523.8 L439.8 524.4 L441.1 524.8 L442.4 525.0 L443.7 523.1 L445.0 523.0 L446.3 524.8 L447.6 523.7 L448.9 523.1 L450.2 524.1 L451.5 523.1 L452.8 523.1 L454.1 523.3 L455.4 523.6 L456.7 524.0 L458.0 523.0 L459.3 524.2 L460.6 523.9 L461.9 523.5 L463.2 524.0 L464.5 524.4 L465.8 523.0 L467.1 523.5 L468.4 524.0 L469.7 524.1 L471.0 523.9 L472.3 523.1 L473.6 525.0 L474.9 524.4 L476.2 523.1 L477.5 523.4 L478.8 525.0 L480.1 523.1 L481.4 523.4 L482.7 525.0 L484.0 524.8 L485.3 523.1 L486.6 524.2 L487.9 523.3 L489.2 524.0 L490.5 524.3 L491.8 523.0 L493.1 523.1 L494.4 523.1 L495.7 523.2 L497.0 523.0 L498.3 523.0 L499.6 523.4 L500.9 523.4 L502.2 523.0 L503.5 523.7 L504.8 525.0 L506.1 523.7 L507.4 523.3 L508.7 524.1 L510.0 523.4 L511.3 523.1 L512.6 523.5 L513.9 523.0 L515.2 524.0 L516.5 523.1 L517.8 523.3 L519.1 525.0 L520.4 524.3 L521.7 524.5 L523.0 523.9 L524.3 523.9 L525.6 524.1 L526.9 525.1 L528.2 523.1 L529.5 524.3 L530.8 523.2 L532.1 523.1 L533.4 524.5 L534.7 523.8 L536.0 524.6 L537.3 524.7 L538.6 523.8 L539.9 523.1 L541.2 523.0 L542.5 523.6 L543.8 524.2 L545.1 523.2 L546.4 523.0 L547.7 523.0 L549.0 523.1 L550.3 524.1 L551.6 523.0 L552.9 523.1 L554.2 523.2 L555.5 524.1 L556.8 525.1 L558.1 523.0 L559.4 523.0 L560.7 524.9 L562.0 525.1 L563.3 523.0 L564.6 523.2 L565.9 523.6 L567.2 523.2 L568.5 523.4 L569.8 523.5 L571.1 523.1 L572.4 523.0 L573.7 523.0 L575.0 523.1 L576.3 523.0 L577.6 523.9 L578.9 524.1 L580.2 523.2 L581.5 524.4 L582.8 524.2 L584.1 523.3 L585.4 523.5 L586.7 523.1 L588.0 524.9 L589.3 523.7 L590.6 523.0 L591.9 523.1 L593.2 524.1 L594.5 523.3 L595.8 524.1 L597.1 523.1 L598.4 524.4 L599.7 524.4 L601.0 523.0 L602.3 523.8 L603.6 523.1 L604.9 524.1 L606.2 524.4 L607.5 524.4 L608.8 523.1 L610.1 523.0 L611.4 524.0 L612.7 523.7 L614.0 523.0 L615.3 523.1 L616.6 523.7 L617.9 523.0 L619.2 523.9 L620.5 523.1 L621.8 523.1 L623.1 523.4 L624.4 523.6 L625.7 524.2 L627.0 523.0 L628.3 524.2 L629.6 523.1 L630.9 523.2 L632.2 523.9 L633.5 524.1 L634.8 523.8 L636.1 524.8 L637.4 523.1 L638.7 523.2 L640.0 524.0 L641.3 523.1 L642.6 523.1 L643.9 523.1 L645.2 524.3 L646.5 524.5 L647.8 524.1 L649.1 525.0 L650.4 524.4 L651.7 523.2 L653.0 523.2 L654.3 524.1 L655.6 523.0 L656.9 523.8 L658.2 523.0 L659.5 523.0 L660.8 523.6 L662.1 523.1 L663.4 524.9 L664.7 524.7 L666.0 523.5 L667.3 523.1 L668.6 523.0 L669.9 523.6 L671.2 523.6 L672.5 523.3 L673.8 524.1 L675.1 523.6 L676.4 524.3 L677.7 523.0 L679.0 523.0 L680.3 523.3 L681.6 523.5 L682.9 523.1 L684.2 524.0 L685.5 523.1 L686.8 523.2 L688.1 523.5 L689.4 524.1 L690.7 524.3 L692.0 523.3 L693.3 523.4 L694.6 524.9 L695.9 524.9 L697.2 523.8 L698.5 523.0 L699.8 523.5 L701.1 523.9 L702.4 523.2 L703.7 523.0 L705.0 525.1 L706.3 524.8 L707.6 523.0 L708.9 523.5 L710.2 523.8 L711.5 523.2 L712.8 523.0 L714.1 524.2 L715.4 524.3 L716.7 523.4 L718.0 523.0 L719.3 523.3 L720.6 523.0 L721.9 525.0 L723.2 523.0 L724.5 523.2 L725.8 524.3 L727.1 523.0 L728.4 523.0 L729.7 523.0 L731.0 523.1 L732.3 523.6 L733.6 524.5 L734.9 523.1 L736.2 523.1 L737.5 524.3 L738.8 523.4 L740.1 523.3 L741.4 523.0 L742.7 523.1 L744.0 525.1 L745.3 523.0 L746.6 523.1 L747.9 524.2 L749.2 524.7 L750.5 524.8 L751.8 523.5 L753.1 525.0 L754.4 523.8 L755.7 523.2 L757.0 523.5 L758.3 524.1 L759.6 524.2 L760.9 523.0 L762.2 523.1 L763.5 525.0 L764.8 523.0 L766.1 524.5 L767.4 523.3 L768.7 523.1 L770.0 523.1 L771.3 523.5 L772.6 525.2 L773.9 523.0 L775.2 524.6 L776.5 523.2 L777.8 523.1 L779.1 524.2 L780.4 523.3 L781.7 523.1 L783.0 523.4 L784.3 524.5 L785.6 524.6 L786.9 523.7 L788.2 523.0 L789.5 524.3 L790.8 523.8 L792.1 524.8 L793.4 525.0 L794.7 523.2 L796.0 524.6 L797.3 524.5 L798.6 523.2 L799.9 523.3 L801.2 523.3 L802.5 523.3 L803.8 523.3 L805.1 523.0 L806.4 523.1 L807.7 524.8 L809.0 523.4 L810.3 523.9 L811.6 524.7 L812.9 524.3 L814.2 523.1 L815.5 524.9 L816.8 524.4 L818.1 525.2 L819.4 524.2 L820.7 524.3 L822.0 524.5 L823.3 523.1 L824.6 523.9 L825.9 523.3 L827.2 524.6 L828.5 523.0 L829.8 523.6 L831.1 523.2 L832.4 524.5 L833.7 523.3 L835.0 524.6 L836.3 524.6 L837.6 524.7 L838.9 523.0 L840.2 524.9 L841.5 524.2 L842.8 524.0 L844.1 523.9 L845.4 523.0 L846.7 524.7 L848.0 523.7 L849.3 523.5 L850.6 523.3 L851.9 524.3 L853.2 524.3 L854.5 524.7 L855.8 523.1 L857.1 523.3 L858.4 523.1 L859.7 523.0 L861.0 523.2 L862.3 523.0 L863.6 524.4 L864.9 523.1 L866.2 523.0 L867.5 523.0 L868.8 524.2 L870.1 523.1 L871.4 523.5 L872.7 523.4 L874.0 524.4 L875.3 525.0 L876.6 523.2 L877.9 523.9 L879.2 524.8 L880.5 523.5 L881.8 524.8 L883.1 524.2 L884.4 523.2 L885.7 524.7 L887.0 523.7 L888.3 523.0 L889.6 523.8 L890.9 524.5 L892.2 523.6 L893.5 523.5 L894.8 523.4 L896.1 524.7 L897.4 524.0 L898.7 523.1 L900.0 523.3 L901.3 523.3 L902.6 525.0 L903.9 524.1 L905.2 523.0 L906.5 524.8 L907.8 523.0 L909.1 523.8 L910.4 523.4 L911.7 524.1 L913.0 523.4 L914.3 523.0 L915.6 523.6 L916.9 524.5 L918.2 524.4 L919.5 523.3 L920.8 523.1 L922.1 524.2 L923.4 524.4 L924.7 523.1 L926.0 524.7 L927.3 525.2 L928.6 523.4 L929.9 523.3 L931.2 524.1 L932.5 524.9 L933.8 523.1 L935.1 523.2 L936.4 523.2 L937.7 524.2 L939.0 523.1 L940.3 523.7 L941.6 523.6 L942.9 524.0 L944.2 523.0 L945.5 525.0 L946.8 525.2 L948.1 523.7 L949.4 524.4 L950.7 523.1 L952.0 524.8 L953.3 523.7 L954.6 524.3 L955.9 524.7 L957.2 523.3 L958.5 524.9 L959.8 523.1 L961.1 523.0 L962.4 523.6 L963.7 524.8 L965.0 524.8 L966.3 525.0 L967.6 523.6 L968.9 524.9 L970.2 523.7 L971.5 523.0 L972.8 523.9 L974.1 524.4 L975.4 523.4 L976.7 523.8 L978.0 523.1 L979.3 523.2 L980.6 523.4 L981.9 523.6 L983.2 523.5 L984.5 523.0 L985.8 523.0 L987.1 523.3 L988.4 524.1 L989.7 524.2 L991.0 523.1 L992.3 523.1 L993.6 523.6 L994.9 523.1 L996.2 523.8 L997.5 524.8 L998.8 523.1 L1000.1 523.8 L1001.4 524.1 L1002.7 524.2 L1004.0 524.1 L1005.3 524.1 L1006.6 523.2 L1007.9 524.5 L1009.2 524.9 L1010.5 523.0 L1011.8 525.0 L1013.1 523.4 L1014.4 523.0 L1015.7 523.0 L1017.0 524.4 L1018.3 524.0 L1019.6 523.0 L1020.9 523.5 L1022.2 523.9 L1023.5 525.2 L1024.8 523.2 L1026.1 524.3 L1027.4 523.1 L1028.7 523.1 L1030.0 523.1 L1031.3 523.4 L1032.6 523.8 L1033.9 523.2 L1035.2 523.1 L1036.5 523.1 L1037.8 523.0 L1039.1 523.1 L1040.4 523.2 L1041.7 523.6 L1043.0 523.1 L1044.3 523.5 L1045.6 523.4 L1046.9 525.1 L1048.2 523.5 L1049.5 525.0 L1050.8 523.5 L1052.1 523.1 L1053.4 523.8 L1054.7 523.0 L1056.0 523.1 L1057.3 523.0 L1058.6 524.1 L1059.9 525.1 L1061.2 523.4 L1062.5 523.3 L1063.8 523.4 L1065.1 523.3 L1066.4 524.0 L1067.7 523.3 L1069.0 523.1 L1070.3 524.6 L1071.6 523.7 L1072.9 523.0 L1074.2 524.6 L1075.5 524.2 L1076.8 523.3 L1078.1 523.9 L1079.4 524.9 L1080.7 523.4 L1082.0 523.4 L1083.3 523.2 L1084.6 523.7 L1085.9 524.0 L1087.2 524.2 L1088.5 525.0 L1089.8 523.0 L1091.1 523.3 L1092.4 524.6 L1093.7 524.4 L1095.0 523.8 L1096.3 524.0 L1097.6 523.3 L1098.9 525.0 L1100.2 523.7 L1101.5 523.4 L1102.8 523.1 L1104.1 523.0 L1105.4 524.8 L1106.7 524.4 L1108.0 523.0 L1109.3 523.2 L1110.6 523.5 L1111.9 523.5 L1113.2 523.3 L1114.5 524.8 L1115.8 523.3 L1117.1 523.6 L1118.4 524.9 L1119.7 523.9 L1121.0 523.5 L1122.3 523.2 L1123.6 523.3 L1124.9 523.8 L1126.2 524.4 L1127.5 523.1 L1128.8 523.3 L1130.1 523.3 L1131.4 523.3 L1132.7 524.8 L1134.0 523.6 L1135.3 523.2 L1136.6 523.2 L1137.9 524.5 L1139.2 523.1 L1140.5 524.0 L1141.8 523.0 L1143.1 523.1 L1144.4 523.0 L1145.7 524.4 L1147.0 523.0 L1148.3 523.1 L1149.6 523.0 L1150.9 523.2 L1152.2 524.2 L1153.5 524.1 L1154.8 524.8 L1156.1 525.0 L1157.4 523.7 L1158.7 524.9 L1160.0 523.0 L1161.3 524.9 L1162.6 523.4 L1163.9 523.1 L1165.2 524.2 L1166.5 524.6 L1167.8 523.3 L1169.1 523.0 L1170.4 524.7 L1171.7 524.2 L1173.0 523.8 L1174.3 525.1 L1175.6 523.0 L1176.9 523.0 L1178.2 523.0 L1179.5 523.0 L1180.8 524.1 L1182.1 523.9 L1183.4 523.0 L1184.7 523.1 L1186.0 523.1 L1187.3 523.8 L1188.6 524.0 L1189.9 525.1 L1191.2 523.3 L1192.5 525.1 L1193.8 523.4 L1195.1 523.3 L1196.4 523.1 L1197.7 523.1 L1199.0 525.1 L1200.3 525.2 L1201.6 524.1 L1202.9 523.1 L1204.2 523.1 L1205.5 523.1 L1206.8 523.3 L1208.1 524.2 L1209.4 523.0 L1210.7 523.6 L1212.0 524.0 L1213.3 523.0 L1214.6 523.4 L1215.9 524.4 L1217.2 523.7 L1218.5 523.4 L1219.8 524.7 L1221.1 523.8 L1222.4 523.2 L1223.7 523.3 L1225.0 525.0 L1226.3 524.6 L1227.6 524.8 L1228.9 523.7 L1230.2 523.0 L1231.5 523.1 L1232.8 523.3 L1234.1 524.0 L1235.4 523.0 L1236.7 524.4 L1238.0 524.4 L1239.3 523.6 L1240.6 523.0 L1241.9 524.4 L1243.2 523.4 L1244.5 524.0 L1245.8 523.7 L1247.1 524.2 L1248.4 523.4 L1249.7 525.0 L1251.0 525.0 L1252.3 524.9 L1253.6 523.8 L1254.9 523.2 L1256.2 523.3 L1257.5 523.2 L1258.8 524.8 L1260.1 524.4 L1261.4 524.4 L1262.7 524.5 L1264.0 525.2 L1265.3 524.0 L1266.6 523.2 L1267.9 524.3 L1269.2 523.2 L1270.5 523.8 L1271.8 523.1 L1273.1 524.6 L1274.4 523.5 L1275.7 523.2 L1277.0 524.9 L1278.3 523.0 L1279.6 524.9 L1280.9 524.3 L1282.2 523.0 L1283.5 524.3 L1284.8 523.7 L1286.1 524.8 L1287.4 523.8 L1288.7 523.4 L1290.0 524.9 L1291.3 523.0 L1292.6 524.3 L1293.9 523.0 L1295.2 523.2 L1296.5 523.0 L1297.8 524.7 L1299.1 523.4 L1300.4 524.2 L1301.7 523.1 L1303.0 524.2 L1304.3 523.9 L1305.6 523.0 L1306.9 523.5 L1308.2 524.1 L1309.5 523.1 L1310.8 523.9 L1312.1 523.2 L1313.4 523.3 L1314.7 524.9 L1316.0 525.0 L1317.3 525.2 L1318.6 523.4 L1319.9 523.7 L1321.2 524.4 L1322.5 524.3 L1323.8 523.5 L1325.1 524.6 L1326.4 523.4 L1327.7 525.0 L1329.0 523.5 L1330.3 523.0 L1331.6 524.2 L1332.9 523.0 L1334.2 524.0 L1335.5 523.0 L1336.8 525.1 L1338.1 523.6 L1339.4 524.2 L1340.7 523.0 L1342.0 523.9 L1343.3 523.3 L1344.6 523.1 L1345.9 524.5 L1347.2 523.0 L1348.5 523.5 L1349.8 523.0 L1351.1 524.6 L1352.4 524.8 L1353.7 523.0 L1355.0 523.5 L1356.3 523.5 L1357.6 524.1 L1358.9 524.2 L1360.2 523.3 L1361.5 524.9 L1362.8 523.1 L1364.1 523.0 L1365.4 524.5 L1366.7 523.0 L1368.0 523.1 L1369.3 523.6 L1370.6 523.2 L1371.9 523.1 L1373.2 524.9 L1374.5 523.5 L1375.8 524.4 L1377.1 523.1 L1378.4 524.8 L1379.7 523.1 L1381.0 524.8 L1382.3 523.8 L1383.6 525.1 L1384.9 524.3 L1386.2 523.9 L1387.5 523.6 L1388.8 524.6 L1390.1 523.4 L1391.4 523.0 L1392.7 524.8 L1394.0 524.4 L1395.3 524.0 L1396.6 524.2 L1397.9 523.1 L1399.2 523.5 L1400.5 524.5 L1401.8 525.0 L1403.1 524.9 L1404.4 523.1 L1405.7 524.0 L1407.0 523.7 L1408.3 523.4 L1409.6 523.1 L1410.9 523.0 L1412.2 523.5 L1413.5 523.5 L1414.8 523.2 L1416.1 523.3 L1417.4 523.7 L1418.7 524.3 L1420.0 523.8 L1421.3 523.1 L1422.6 524.7 L1423.9 523.3 L1425.2 525.0 L1426.5 525.1 L1427.8 523.0 L1429.1 523.7 L1430.4 525.1 L1431.7 523.3 L1433.0 523.7 L1434.3 523.2 L1435.6 523.0 L1436.9 523.1 L1438.2 523.0 L1439.5 523.2 L1440.8 523.9 L1442.1 523.7 L1443.4 525.0 L1444.7 524.0 L1446.0 523.3 L1447.3 525.0 L1448.6 523.9 L1449.9 523.6 L1451.2 524.6 L1452.5 524.0 L1453.8 523.3 L1455.1 523.8 L1456.4 523.2 L1457.7 525.1 L1459.0 523.1 L1460.3 525.1 L1461.6 523.0 L1462.9 523.0 L1464.2 523.7 L1465.5 523.1 L1466.8 523.6 L1468.1 523.0 L1469.4 524.5 L1470.7 524.0 L1472.0 524.0 L1473.3 524.9 L1474.6 525.2 L1475.9 524.0 L1477.2 524.1 L1478.5 523.0 L1479.8 523.0 L1481.1 523.4 L1482.4 525.1 L1483.7 523.2 L1485.0 523.7 L1486.3 523.0 L1487.6 523.4 L1488.9 524.8 L1490.2 523.8 L1491.5 524.5 L1492.8 523.0 L1494.1 523.1 L1495.4 523.1 L1496.7 524.5 L1498.0 523.0 L1499.3 524.9 L1500.6 523.2 L1501.9 524.7 L1503.2 523.6 L1504.5 523.2 L1505.8 525.1 L1507.1 523.4 L1508.4 524.1 L1509.7 523.0 L1511.0 524.5 L1512.3 525.1 L1513.6 523.0 L1514.9 524.2 L1516.2 523.2 L1517.5 523.0 L1518.8 523.3 L1520.1 524.0 L1521.4 525.0 L1522.7 525.2 L1524.0 525.2 L1525.3 523.9 L1526.6 523.9 L1527.9 523.1 L1529.2 524.2 L1530.5 523.7 L1531.8 523.3 L1533.1 524.8 L1534.4 523.1 L1535.7 523.0 L1537.0 523.1 L1538.3 523.0 L1539.6 523.8 L1540.9 524.4 L1542.2 523.1 L1543.5 523.6 L1544.8 523.7 L1546.1 523.7 L1547.4 523.4 L1548.7 523.7 L1550.0 523.0 L1551.3 523.0 L1552.6 523.4 L1553.9 523.1 L1555.2 524.3 L1556.5 523.1 L1557.8 524.5 L1559.1 523.1 L1560.4 523.0 L1561.7 523.5 L1563.0 523.3 L1564.3 523.2 L1565.6 524.3 L1566.9 523.1 L1568.2 524.0 L1569.5 524.5 L1570.8 523.5 L1572.1 523.6 L1573.4 524.9 L1574.7 523.8 L1576.0 523.1 L1577.3 523.0 L1578.6 523.0 L1579.9 523.2 L1581.2 523.0 L1582.5 523.9 L1583.8 523.4 L1585.1 523.2 L1586.4 523.6 L1587.7 524.9 L1589.0 523.1 L1590.3 523.1 L1591.6 523.2 L1592.9 523.2 L1594.2 524.8 L1595.5 524.1 L1596.8 523.4 L1598.1 523.1 L1599.4 523.0 L1600.7 523.0 L1602.0 524.6 L1603.3 523.9 L1604.6 523.1 L1605.9 523.9 L1607.2 523.0 L1608.5 523.6 L1609.8 523.2 L1611.1 523.0 L1612.4 524.2 L1613.7 524.1 L1615.0 523.6 L1616.3 523.1 L1617.6 524.0 L1618.9 523.4 L1620.2 524.0 L1621.5 523.0 L1622.8 524.8 L1624.1 523.0 L1625.4 523.1 L1626.7 523.3 L1628.0 523.1 L1629.3 523.0 L1630.6 524.0 L1631.9 525.2 L1633.2 523.2 L1634.5 523.2 L1635.8 524.0 L1637.1 523.1 L1638.4 523.4 L1639.7 524.0 L1641.0 523.4 L1642.3 523.1 L1643.6 523.0 L1644.9 523.6 L1646.2 525.2 L1647.5 524.9 L1648.8 523.0 L1650.1 523.6 L1651.4 523.5 L1652.7 523.1 L1654.0 524.0 L1655.3 523.5 L1656.6 524.4 L1657.9 523.2 L1659.2 524.9 L1660.5 524.5 L1661.8 523.5 L1663.1 523.0 L1664.4 523.5 L1665.7 523.0 L1667.0 524.0 L1668.3 524.1 L1669.6 523.7 L1670.9 525.1 L1672.2 523.0 L1673.5 524.1 L1674.8 524.4 L1676.1 523.0 L1677.4 523.2 L1678.7 523.0 L1680.0 523.7 L1681.3 524.2 L1682.6 523.3 L1683.9 524.1 L1685.2 523.3 L1686.5 524.1 L1687.8 523.2 L1689.1 525.1 L1690.4 523.4 L1691.7 523.0 L1693.0 523.0 L1694.3 524.2 L1695.6 524.6 L1696.9 523.9 L1698.2 523.1 L1699.5 524.7 L1700.8 524.1 L1702.1 523.0 L1703.4 523.3 L1704.7 524.0 L1706.0 523.0 L1707.3 523.0 L1708.6 523.3 L1709.9 524.7 L1711.2 525.2 L1712.5 523.2 L1713.8 524.8 L1715.1 524.4 L1716.4 524.6 L1717.7 523.8 L1719.0 525.1 L1720.3 523.9 L1721.6 525.0 L1722.9 523.7 L1724.2 523.1 L1725.5 523.6 L1726.8 523.5 L1728.1 523.3 L1729.4 523.3 L1730.7 523.6 L1732.0 523.8 L1733.3 523.1 L1734.6 523.2 L1735.9 523.6 L1737.2 523.6 L1738.5 523.4 L1739.8 524.0 L1741.1 523.1 L1742.4 523.6 L1743.7 523.2 L1745.0 524.3 L1746.3 524.1 L1747.6 524.3 L1748.9 523.6 L1750.2 523.1 L1751.5 524.9 L1751.5 533.4 L1750.2 533.7 L1748.9 533.8 L1747.6 533.6 L1746.3 532.9 L1745.0 532.5 L1743.7 533.5 L1742.4 532.8 L1741.1 533.9 L1739.8 533.6 L1738.5 533.7 L1737.2 533.8 L1735.9 533.7 L1734.6 532.7 L1733.3 532.8 L1732.0 533.9 L1730.7 533.9 L1729.4 532.6 L1728.1 533.1 L1726.8 533.0 L1725.5 533.1 L1724.2 532.9 L1722.9 533.8 L1721.6 534.0 L1720.3 533.7 L1719.0 534.0 L1717.7 532.0 L1716.4 533.4 L1715.1 533.0 L1713.8 531.9 L1712.5 532.6 L1711.2 533.9 L1709.9 533.8 L1708.6 534.0 L1707.3 532.6 L1706.0 532.8 L1704.7 533.5 L1703.4 533.7 L1702.1 533.8 L1700.8 533.5 L1699.5 532.9 L1698.2 532.2 L1696.9 532.4 L1695.6 532.3 L1694.3 533.6 L1693.0 533.6 L1691.7 533.8 L1690.4 531.9 L1689.1 533.9 L1687.8 533.9 L1686.5 533.8 L1685.2 532.1 L1683.9 532.4 L1682.6 533.8 L1681.3 532.4 L1680.0 532.3 L1678.7 533.6 L1677.4 533.9 L1676.1 532.7 L1674.8 533.7 L1673.5 534.0 L1672.2 532.2 L1670.9 533.6 L1669.6 533.7 L1668.3 533.2 L1667.0 533.9 L1665.7 534.0 L1664.4 533.7 L1663.1 533.7 L1661.8 534.0 L1660.5 533.7 L1659.2 532.7 L1657.9 533.8 L1656.6 533.0 L1655.3 533.1 L1654.0 533.9 L1652.7 534.0 L1651.4 533.0 L1650.1 533.2 L1648.8 533.8 L1647.5 533.9 L1646.2 532.4 L1644.9 532.2 L1643.6 533.9 L1642.3 533.2 L1641.0 533.3 L1639.7 533.8 L1638.4 534.0 L1637.1 533.8 L1635.8 533.1 L1634.5 533.2 L1633.2 533.4 L1631.9 534.0 L1630.6 533.9 L1629.3 533.8 L1628.0 533.6 L1626.7 533.7 L1625.4 532.2 L1624.1 534.0 L1622.8 531.9 L1621.5 533.9 L1620.2 532.4 L1618.9 533.9 L1617.6 533.2 L1616.3 533.7 L1615.0 534.0 L1613.7 532.6 L1612.4 532.6 L1611.1 533.8 L1609.8 532.7 L1608.5 533.5 L1607.2 531.9 L1605.9 534.0 L1604.6 533.7 L1603.3 533.9 L1602.0 533.1 L1600.7 532.7 L1599.4 532.4 L1598.1 533.3 L1596.8 533.7 L1595.5 532.6 L1594.2 534.0 L1592.9 533.9 L1591.6 532.8 L1590.3 533.6 L1589.0 531.8 L1587.7 534.0 L1586.4 533.5 L1585.1 533.9 L1583.8 534.0 L1582.5 534.0 L1581.2 534.0 L1579.9 533.7 L1578.6 533.6 L1577.3 533.4 L1576.0 533.8 L1574.7 532.9 L1573.4 533.4 L1572.1 531.9 L1570.8 533.9 L1569.5 533.4 L1568.2 533.5 L1566.9 533.7 L1565.6 532.4 L1564.3 533.9 L1563.0 532.3 L1561.7 533.7 L1560.4 533.8 L1559.1 533.2 L1557.8 533.3 L1556.5 533.8 L1555.2 534.0 L1553.9 532.0 L1552.6 533.7 L1551.3 534.0 L1550.0 533.1 L1548.7 533.4 L1547.4 533.8 L1546.1 533.8 L1544.8 532.4 L1543.5 533.7 L1542.2 533.6 L1540.9 532.0 L1539.6 533.7 L1538.3 533.6 L1537.0 533.9 L1535.7 533.0 L1534.4 533.0 L1533.1 533.6 L1531.8 533.6 L1530.5 533.9 L1529.2 532.6 L1527.9 533.5 L1526.6 532.5 L1525.3 533.7 L1524.0 532.8 L1522.7 534.0 L1521.4 533.9 L1520.1 532.0 L1518.8 533.0 L1517.5 533.0 L1516.2 533.5 L1514.9 533.5 L1513.6 533.9 L1512.3 533.9 L1511.0 533.1 L1509.7 532.9 L1508.4 533.9 L1507.1 533.1 L1505.8 534.0 L1504.5 533.2 L1503.2 533.9 L1501.9 533.4 L1500.6 533.8 L1499.3 533.3 L1498.0 534.0 L1496.7 533.5 L1495.4 533.2 L1494.1 534.0 L1492.8 533.8 L1491.5 533.0 L1490.2 533.3 L1488.9 533.2 L1487.6 532.7 L1486.3 533.3 L1485.0 533.9 L1483.7 533.6 L1482.4 532.5 L1481.1 533.3 L1479.8 532.8 L1478.5 533.7 L1477.2 533.6 L1475.9 531.9 L1474.6 532.5 L1473.3 533.1 L1472.0 534.0 L1470.7 533.2 L1469.4 534.0 L1468.1 532.1 L1466.8 531.9 L1465.5 532.8 L1464.2 533.8 L1462.9 532.4 L1461.6 533.9 L1460.3 532.5 L1459.0 533.4 L1457.7 534.0 L1456.4 532.3 L1455.1 533.6 L1453.8 532.5 L1452.5 533.0 L1451.2 533.4 L1449.9 532.4 L1448.6 533.9 L1447.3 532.2 L1446.0 533.7 L1444.7 534.0 L1443.4 533.8 L1442.1 534.0 L1440.8 534.0 L1439.5 533.1 L1438.2 534.0 L1436.9 533.9 L1435.6 533.8 L1434.3 533.8 L1433.0 532.1 L1431.7 532.2 L1430.4 532.3 L1429.1 531.8 L1427.8 533.6 L1426.5 532.6 L1425.2 533.8 L1423.9 532.1 L1422.6 532.6 L1421.3 532.8 L1420.0 533.9 L1418.7 534.0 L1417.4 532.1 L1416.1 533.3 L1414.8 533.2 L1413.5 532.4 L1412.2 534.0 L1410.9 532.9 L1409.6 533.5 L1408.3 532.6 L1407.0 533.5 L1405.7 533.9 L1404.4 532.0 L1403.1 533.8 L1401.8 532.8 L1400.5 532.5 L1399.2 533.9 L1397.9 532.9 L1396.6 533.7 L1395.3 533.9 L1394.0 533.9 L1392.7 532.0 L1391.4 533.7 L1390.1 533.4 L1388.8 533.4 L1387.5 534.0 L1386.2 532.8 L1384.9 532.8 L1383.6 532.3 L1382.3 533.7 L1381.0 533.9 L1379.7 533.7 L1378.4 532.8 L1377.1 533.0 L1375.8 533.6 L1374.5 533.4 L1373.2 533.9 L1371.9 532.1 L1370.6 533.5 L1369.3 533.4 L1368.0 532.6 L1366.7 533.9 L1365.4 532.9 L1364.1 533.7 L1362.8 532.5 L1361.5 534.0 L1360.2 533.8 L1358.9 533.1 L1357.6 533.5 L1356.3 533.7 L1355.0 533.3 L1353.7 533.9 L1352.4 533.6 L1351.1 534.0 L1349.8 532.6 L1348.5 533.9 L1347.2 532.5 L1345.9 533.3 L1344.6 533.2 L1343.3 533.1 L1342.0 534.0 L1340.7 532.7 L1339.4 533.8 L1338.1 532.4 L1336.8 532.6 L1335.5 533.0 L1334.2 532.5 L1332.9 533.6 L1331.6 533.0 L1330.3 532.0 L1329.0 533.9 L1327.7 534.0 L1326.4 533.6 L1325.1 533.4 L1323.8 534.0 L1322.5 533.9 L1321.2 532.3 L1319.9 533.7 L1318.6 534.0 L1317.3 533.9 L1316.0 533.3 L1314.7 533.9 L1313.4 533.5 L1312.1 533.4 L1310.8 533.6 L1309.5 533.4 L1308.2 532.5 L1306.9 534.0 L1305.6 532.1 L1304.3 533.9 L1303.0 534.0 L1301.7 532.7 L1300.4 533.3 L1299.1 533.4 L1297.8 533.9 L1296.5 532.7 L1295.2 533.8 L1293.9 532.8 L1292.6 533.9 L1291.3 533.3 L1290.0 533.1 L1288.7 533.7 L1287.4 533.5 L1286.1 534.0 L1284.8 533.1 L1283.5 532.9 L1282.2 533.9 L1280.9 533.3 L1279.6 532.8 L1278.3 534.0 L1277.0 532.5 L1275.7 532.3 L1274.4 534.0 L1273.1 533.9 L1271.8 534.0 L1270.5 533.9 L1269.2 534.0 L1267.9 533.5 L1266.6 533.9 L1265.3 533.8 L1264.0 533.5 L1262.7 533.7 L1261.4 532.6 L1260.1 532.9 L1258.8 534.0 L1257.5 533.9 L1256.2 534.0 L1254.9 533.8 L1253.6 534.0 L1252.3 532.9 L1251.0 532.7 L1249.7 531.8 L1248.4 533.9 L1247.1 534.0 L1245.8 532.7 L1244.5 533.6 L1243.2 532.1 L1241.9 533.7 L1240.6 533.8 L1239.3 534.0 L1238.0 532.0 L1236.7 533.4 L1235.4 533.6 L1234.1 533.6 L1232.8 532.7 L1231.5 532.5 L1230.2 533.5 L1228.9 533.9 L1227.6 533.6 L1226.3 532.3 L1225.0 533.6 L1223.7 533.0 L1222.4 533.3 L1221.1 533.5 L1219.8 533.3 L1218.5 533.9 L1217.2 533.3 L1215.9 532.4 L1214.6 534.0 L1213.3 533.7 L1212.0 532.3 L1210.7 531.9 L1209.4 534.0 L1208.1 533.1 L1206.8 533.1 L1205.5 532.4 L1204.2 533.5 L1202.9 534.0 L1201.6 533.8 L1200.3 532.9 L1199.0 532.8 L1197.7 533.9 L1196.4 533.1 L1195.1 533.1 L1193.8 533.0 L1192.5 534.0 L1191.2 533.6 L1189.9 533.8 L1188.6 533.2 L1187.3 533.8 L1186.0 534.0 L1184.7 533.0 L1183.4 533.8 L1182.1 532.6 L1180.8 533.8 L1179.5 533.3 L1178.2 532.6 L1176.9 534.0 L1175.6 532.8 L1174.3 534.0 L1173.0 532.1 L1171.7 534.0 L1170.4 532.8 L1169.1 533.7 L1167.8 533.9 L1166.5 533.7 L1165.2 533.4 L1163.9 533.6 L1162.6 534.0 L1161.3 533.4 L1160.0 533.8 L1158.7 531.9 L1157.4 533.7 L1156.1 533.6 L1154.8 533.9 L1153.5 531.9 L1152.2 533.8 L1150.9 533.1 L1149.6 532.5 L1148.3 533.7 L1147.0 532.7 L1145.7 533.8 L1144.4 534.0 L1143.1 534.0 L1141.8 533.6 L1140.5 532.3 L1139.2 533.9 L1137.9 533.6 L1136.6 532.7 L1135.3 533.8 L1134.0 533.9 L1132.7 533.4 L1131.4 533.6 L1130.1 532.1 L1128.8 532.2 L1127.5 533.9 L1126.2 533.3 L1124.9 533.6 L1123.6 534.0 L1122.3 533.6 L1121.0 532.2 L1119.7 533.8 L1118.4 533.2 L1117.1 532.9 L1115.8 534.0 L1114.5 532.1 L1113.2 534.0 L1111.9 533.8 L1110.6 532.9 L1109.3 534.0 L1108.0 533.7 L1106.7 534.0 L1105.4 533.5 L1104.1 534.0 L1102.8 533.9 L1101.5 533.9 L1100.2 534.0 L1098.9 534.0 L1097.6 533.9 L1096.3 533.4 L1095.0 534.0 L1093.7 532.5 L1092.4 533.6 L1091.1 533.9 L1089.8 533.9 L1088.5 532.4 L1087.2 534.0 L1085.9 532.8 L1084.6 534.0 L1083.3 532.0 L1082.0 533.6 L1080.7 533.2 L1079.4 532.4 L1078.1 534.0 L1076.8 534.0 L1075.5 532.9 L1074.2 533.2 L1072.9 532.9 L1071.6 533.8 L1070.3 533.5 L1069.0 533.9 L1067.7 533.6 L1066.4 533.8 L1065.1 533.2 L1063.8 533.8 L1062.5 533.8 L1061.2 533.1 L1059.9 534.0 L1058.6 532.6 L1057.3 533.5 L1056.0 533.9 L1054.7 534.0 L1053.4 533.4 L1052.1 533.4 L1050.8 532.9 L1049.5 533.7 L1048.2 533.6 L1046.9 532.2 L1045.6 533.8 L1044.3 531.9 L1043.0 532.2 L1041.7 531.8 L1040.4 532.0 L1039.1 533.9 L1037.8 532.5 L1036.5 533.2 L1035.2 533.9 L1033.9 531.8 L1032.6 533.1 L1031.3 532.6 L1030.0 533.3 L1028.7 534.0 L1027.4 532.4 L1026.1 533.9 L1024.8 533.9 L1023.5 533.2 L1022.2 533.9 L1020.9 533.5 L1019.6 532.9 L1018.3 534.0 L1017.0 533.0 L1015.7 534.0 L1014.4 533.5 L1013.1 533.1 L1011.8 533.0 L1010.5 534.0 L1009.2 533.9 L1007.9 532.0 L1006.6 533.7 L1005.3 533.6 L1004.0 533.7 L1002.7 532.9 L1001.4 532.8 L1000.1 533.1 L998.8 533.6 L997.5 533.3 L996.2 533.4 L994.9 533.9 L993.6 532.0 L992.3 532.0 L991.0 532.7 L989.7 531.8 L988.4 533.5 L987.1 532.5 L985.8 533.9 L984.5 532.8 L983.2 532.9 L981.9 532.1 L980.6 532.5 L979.3 532.3 L978.0 533.8 L976.7 532.6 L975.4 533.5 L974.1 533.8 L972.8 533.7 L971.5 532.6 L970.2 532.4 L968.9 532.4 L967.6 533.0 L966.3 533.9 L965.0 533.9 L963.7 533.3 L962.4 533.9 L961.1 533.8 L959.8 534.0 L958.5 533.9 L957.2 532.9 L955.9 533.9 L954.6 532.4 L953.3 533.8 L952.0 532.4 L950.7 533.8 L949.4 533.8 L948.1 533.7 L946.8 534.0 L945.5 533.6 L944.2 533.7 L942.9 534.0 L941.6 532.4 L940.3 533.7 L939.0 534.0 L937.7 532.0 L936.4 533.9 L935.1 533.9 L933.8 534.0 L932.5 534.0 L931.2 532.9 L929.9 533.3 L928.6 533.4 L927.3 533.9 L926.0 533.8 L924.7 531.9 L923.4 533.7 L922.1 531.8 L920.8 532.3 L919.5 534.0 L918.2 532.4 L916.9 534.0 L915.6 532.9 L914.3 532.6 L913.0 532.9 L911.7 533.3 L910.4 532.5 L909.1 533.9 L907.8 533.4 L906.5 533.8 L905.2 533.6 L903.9 533.9 L902.6 532.9 L901.3 533.3 L900.0 532.7 L898.7 533.1 L897.4 533.2 L896.1 532.1 L894.8 532.5 L893.5 533.3 L892.2 533.8 L890.9 532.1 L889.6 533.7 L888.3 534.0 L887.0 533.8 L885.7 532.9 L884.4 532.1 L883.1 533.1 L881.8 533.0 L880.5 532.1 L879.2 532.7 L877.9 533.6 L876.6 533.5 L875.3 532.7 L874.0 533.8 L872.7 534.0 L871.4 533.2 L870.1 532.6 L868.8 533.9 L867.5 533.0 L866.2 532.2 L864.9 534.0 L863.6 534.0 L862.3 533.5 L861.0 533.8 L859.7 532.0 L858.4 531.8 L857.1 533.6 L855.8 532.6 L854.5 533.1 L853.2 533.9 L851.9 531.9 L850.6 533.9 L849.3 534.0 L848.0 533.5 L846.7 534.0 L845.4 533.5 L844.1 533.6 L842.8 532.0 L841.5 533.6 L840.2 532.4 L838.9 532.7 L837.6 533.2 L836.3 533.9 L835.0 533.8 L833.7 533.5 L832.4 533.7 L831.1 533.1 L829.8 533.4 L828.5 533.8 L827.2 533.2 L825.9 531.8 L824.6 533.9 L823.3 533.8 L822.0 534.0 L820.7 534.0 L819.4 534.0 L818.1 533.6 L816.8 532.5 L815.5 532.9 L814.2 531.9 L812.9 532.5 L811.6 533.2 L810.3 533.3 L809.0 534.0 L807.7 533.7 L806.4 533.8 L805.1 533.2 L803.8 534.0 L802.5 533.4 L801.2 533.7 L799.9 533.5 L798.6 533.6 L797.3 534.0 L796.0 532.8 L794.7 532.6 L793.4 533.2 L792.1 534.0 L790.8 533.2 L789.5 532.3 L788.2 531.9 L786.9 532.7 L785.6 534.0 L784.3 532.3 L783.0 533.0 L781.7 533.8 L780.4 532.1 L779.1 532.5 L777.8 532.2 L776.5 533.9 L775.2 533.3 L773.9 533.7 L772.6 533.8 L771.3 532.7 L770.0 533.2 L768.7 533.8 L767.4 533.4 L766.1 532.1 L764.8 533.3 L763.5 532.2 L762.2 533.3 L760.9 531.8 L759.6 534.0 L758.3 533.5 L757.0 533.3 L755.7 532.8 L754.4 531.9 L753.1 533.1 L751.8 533.5 L750.5 533.1 L749.2 533.4 L747.9 532.9 L746.6 532.0 L745.3 534.0 L744.0 533.8 L742.7 532.3 L741.4 534.0 L740.1 532.6 L738.8 534.0 L737.5 533.1 L736.2 532.6 L734.9 533.9 L733.6 533.7 L732.3 533.9 L731.0 532.9 L729.7 533.4 L728.4 533.2 L727.1 533.8 L725.8 533.2 L724.5 532.0 L723.2 532.7 L721.9 532.0 L720.6 533.9 L719.3 533.4 L718.0 533.7 L716.7 533.7 L715.4 532.6 L714.1 533.9 L712.8 533.3 L711.5 532.7 L710.2 532.1 L708.9 534.0 L707.6 533.8 L706.3 533.5 L705.0 532.1 L703.7 533.9 L702.4 532.4 L701.1 533.7 L699.8 533.3 L698.5 532.1 L697.2 534.0 L695.9 533.8 L694.6 533.9 L693.3 534.0 L692.0 533.8 L690.7 532.9 L689.4 533.3 L688.1 534.0 L686.8 532.6 L685.5 533.4 L684.2 534.0 L682.9 532.5 L681.6 532.5 L680.3 533.9 L679.0 532.1 L677.7 532.6 L676.4 533.9 L675.1 534.0 L673.8 532.3 L672.5 532.5 L671.2 534.0 L669.9 532.7 L668.6 532.7 L667.3 533.1 L666.0 532.5 L664.7 531.9 L663.4 533.8 L662.1 532.5 L660.8 532.1 L659.5 533.8 L658.2 533.0 L656.9 533.0 L655.6 532.4 L654.3 533.3 L653.0 533.8 L651.7 533.9 L650.4 533.4 L649.1 534.0 L647.8 532.4 L646.5 532.3 L645.2 533.9 L643.9 532.9 L642.6 533.0 L641.3 534.0 L640.0 532.7 L638.7 532.7 L637.4 533.8 L636.1 534.0 L634.8 533.8 L633.5 532.7 L632.2 533.5 L630.9 532.5 L629.6 533.9 L628.3 534.0 L627.0 533.7 L625.7 532.3 L624.4 533.9 L623.1 534.0 L621.8 532.8 L620.5 534.0 L619.2 533.0 L617.9 534.0 L616.6 533.9 L615.3 533.0 L614.0 532.3 L612.7 533.6 L611.4 533.6 L610.1 534.0 L608.8 533.7 L607.5 533.9 L606.2 532.6 L604.9 532.9 L603.6 532.6 L602.3 533.4 L601.0 532.9 L599.7 534.0 L598.4 533.7 L597.1 533.8 L595.8 533.8 L594.5 532.8 L593.2 533.9 L591.9 533.8 L590.6 533.8 L589.3 532.4 L588.0 533.1 L586.7 533.5 L585.4 533.7 L584.1 532.1 L582.8 532.1 L581.5 533.6 L580.2 533.3 L578.9 532.4 L577.6 533.9 L576.3 533.9 L575.0 534.0 L573.7 533.4 L572.4 532.7 L571.1 533.9 L569.8 533.6 L568.5 531.8 L567.2 533.5 L565.9 533.7 L564.6 532.4 L563.3 532.2 L562.0 533.7 L560.7 534.0 L559.4 533.1 L558.1 532.8 L556.8 532.1 L555.5 533.0 L554.2 533.8 L552.9 533.4 L551.6 533.8 L550.3 533.6 L549.0 533.5 L547.7 532.2 L546.4 532.2 L545.1 532.1 L543.8 533.5 L542.5 532.0 L541.2 534.0 L539.9 532.1 L538.6 533.1 L537.3 532.3 L536.0 533.6 L534.7 531.8 L533.4 534.0 L532.1 532.4 L530.8 532.5 L529.5 533.7 L528.2 532.5 L526.9 533.9 L525.6 532.8 L524.3 533.5 L523.0 533.6 L521.7 533.9 L520.4 532.6 L519.1 532.8 L517.8 534.0 L516.5 531.9 L515.2 533.9 L513.9 533.7 L512.6 533.6 L511.3 533.3 L510.0 532.3 L508.7 532.0 L507.4 533.1 L506.1 533.7 L504.8 534.0 L503.5 534.0 L502.2 533.4 L500.9 533.3 L499.6 533.6 L498.3 531.9 L497.0 533.6 L495.7 533.7 L494.4 533.6 L493.1 533.9 L491.8 532.1 L490.5 533.2 L489.2 533.4 L487.9 533.6 L486.6 533.9 L485.3 533.8 L484.0 533.5 L482.7 533.6 L481.4 531.9 L480.1 533.3 L478.8 533.9 L477.5 534.0 L476.2 533.9 L474.9 533.7 L473.6 532.7 L472.3 532.3 L471.0 533.9 L469.7 532.7 L468.4 533.6 L467.1 533.4 L465.8 533.4 L464.5 534.0 L463.2 534.0 L461.9 533.0 L460.6 533.0 L459.3 533.7 L458.0 532.1 L456.7 532.5 L455.4 533.8 L454.1 534.0 L452.8 533.3 L451.5 533.1 L450.2 533.9 L448.9 534.0 L447.6 533.5 L446.3 534.0 L445.0 532.8 L443.7 533.1 L442.4 533.8 L441.1 533.6 L439.8 533.9 L438.5 533.9 L437.2 533.9 L435.9 532.5 L434.6 533.5 L433.3 532.9 L432.0 533.7 L430.7 532.6 L429.4 533.2 L428.1 533.1 L426.8 533.7 L425.5 533.3 L424.2 533.9 L422.9 531.9 L421.6 533.0 L420.3 533.4 L419.0 533.1 L417.7 534.0 L416.4 533.8 L415.1 533.9 L413.8 532.4 L412.5 534.0 L411.2 533.6 L409.9 532.3 L408.6 532.7 L407.3 532.9 L406.0 533.8 L404.7 533.9 L403.4 532.9 L402.1 533.8 L400.8 532.8 L399.5 533.7 L398.2 532.7 L396.9 533.3 L395.6 532.5 L394.3 531.9 L393.0 533.7 L391.7 531.9 L390.4 534.0 L389.1 532.3 L387.8 534.0 L386.5 533.3 L385.2 533.7 L383.9 532.7 L382.6 533.8 L381.3 533.9 L380.0 532.6 L378.7 533.3 L377.4 532.7 L376.1 533.5 L374.8 534.0 L373.5 532.7 L372.2 533.9 L370.9 533.5 L369.6 534.0 L368.3 533.9 L367.0 533.0 L365.7 532.7 L364.4 533.1 L363.1 533.6 L361.8 532.8 L360.5 533.0 L359.2 533.9 L357.9 533.4 L356.6 533.2 L355.3 532.8 L354.0 533.9 L352.7 533.8 L351.4 533.7 L350.1 534.0 L348.8 533.7 L347.5 532.8 L346.2 533.3 L344.9 533.9 L343.6 532.8 L342.3 534.0 L341.0 532.8 L339.7 534.0 L338.4 534.0 L337.1 533.9 L335.8 533.4 L334.5 533.8 L333.2 532.3 L331.9 532.1 L330.6 533.8 L329.3 532.8 L328.0 532.9 L326.7 533.3 L325.4 533.9 L324.1 532.0 L322.8 532.0 L321.5 534.0 L320.2 533.8 L318.9 533.8 L317.6 533.9 L316.3 533.6 L315.0 532.2 L313.7 534.0 L312.4 532.5 L311.1 533.8 L309.8 534.0 L308.5 532.2 L307.2 533.8 L305.9 533.9 L304.6 534.0 L303.3 533.7 L302.0 534.0 L300.7 533.9 L299.4 533.9 L298.1 533.3 L296.8 533.6 L295.5 533.8 L294.2 533.4 L292.9 532.7 L291.6 532.8 L290.3 533.7 L289.0 532.1 L287.7 532.6 L286.4 533.3 L285.1 533.5 L283.8 533.8 L282.5 534.0 L281.2 532.3 L279.9 533.2 L278.6 534.0 L277.3 532.1 L276.0 532.3 L274.7 534.0 L273.4 532.9 L272.1 533.9 L270.8 533.4 L269.5 532.5 L268.2 533.7 L266.9 533.5 L265.6 533.0 L264.3 533.9 L263.0 533.1 L261.7 533.6 L260.4 531.9 L259.1 533.9 L257.8 532.9 L256.5 534.0 L255.2 533.8 L253.9 534.0 L252.6 534.0 L251.3 533.4 L250.0 533.9 L248.7 532.6 L247.4 534.0 L246.1 533.1 L244.8 532.4 L243.5 534.0 L242.2 533.9 L240.9 532.7 L239.6 533.5 L238.3 532.1 L237.0 533.7 L235.7 533.7 L234.4 532.0 L233.1 533.7 L231.8 531.9 L230.5 532.3 L229.2 533.9 L227.9 533.3 L226.6 532.1 L225.3 534.0 L224.0 532.4 L222.7 532.7 L221.4 532.8 L220.1 533.2 L218.8 534.0 L217.5 532.0 L216.2 534.0 L214.9 532.6 L213.6 532.8 L212.3 533.8 L211.0 533.0 L209.7 533.6 L208.4 532.8 L207.1 534.0 L205.8 532.1 L204.5 533.7 L203.2 532.6 L201.9 533.5 L200.6 532.5 L199.3 533.8 L198.0 533.3 L196.7 534.0 L195.4 533.5 L194.1 534.0 L192.8 532.4 L191.5 533.0 L190.2 533.6 L188.9 531.9 L187.6 532.0 L186.3 532.0 L185.0 534.0 L183.7 532.9 L182.4 532.8 L181.1 533.2 L179.8 534.0 L178.5 532.1 L177.2 533.6 L175.9 533.2 L174.6 532.5 L173.3 533.8 L172.0 534.0 L170.7 532.1 L169.4 533.8 L168.1 534.0 L166.8 534.0 L165.5 531.8 L164.2 532.8 L162.9 533.9 L161.6 534.0 L160.3 532.2 L159.0 533.0 L157.7 533.3 L156.4 534.0 L155.1 533.6 L153.8 532.0 L152.5 534.0 L151.2 533.6 L149.9 534.0 L148.6 531.8 L147.3 534.0 L146.0 532.0 L144.7 532.4 L143.4 532.8 L142.1 534.0 L140.8 532.9 L139.5 533.5 L138.2 533.5 L136.9 534.0 L135.6 533.4 L134.3 532.6 L133.0 534.0 L131.7 532.3 L130.4 533.6 L129.1 533.8 L127.8 533.9 L126.5 533.5 L125.2 533.1 L123.9 533.3 L122.6 532.3 L121.3 533.4 L120.0 533.4 L118.7 531.8 L117.4 533.9 L116.1 534.0 L114.8 533.8 L113.5 533.8 L112.2 534.0 L110.9 533.6 L109.6 534.0 L108.3 532.1 L107.0 533.5 L105.7 532.3 L104.4 532.9 L103.1 532.8 L101.8 532.7 L100.5 533.8 L99.2 532.8 L97.9 533.9 L96.6 533.3 L95.3 533.2 L94.0 532.7 L92.7 533.9 L91.4 533.7 L90.1 532.5 L88.8 532.6 L87.5 531.9 L86.2 534.0 L84.9 533.9 L83.6 534.0 L82.3 532.8 L81.0 532.8 L79.7 533.1 L78.4 532.7 L77.1 533.4 L75.8 533.3 L74.5 532.1 L73.2 533.1 L71.9 533.1 L70.6 533.2 L69.3 533.5 L68.0 532.7 L66.7 533.3 L65.4 534.0 L64.1 533.6 L62.8 533.6 L61.5 533.6 L60.2 533.3 L58.9 533.7 L57.6 533.7 L56.3 533.6 L55.0 533.7 L53.7 531.9 L52.4 534.0 L51.1 534.0 L49.8 532.9 L48.5 533.7 L47.2 533.6 L45.9 533.2 L44.6 533.7 L43.3 533.9 L42.0 534.0 L40.7 532.3 L39.4 532.1 L38.1 533.8 L36.8 533.5 L35.5 533.8 L34.2 534.0 L32.9 532.2 L31.6 532.5 L30.3 533.9 L29.0 533.9 L27.7 532.9 L26.4 532.6 L25.1 533.5 L23.8 533.7 L22.5 533.9 L21.2 532.6 L19.9 532.4 L18.6 532.4 L17.3 534.0 L16.0 533.2 L14.7 531.9 L13.4 532.9 L12.1 533.5 L10.8 534.0 L9.5 534.0 L8.2 532.8 L6.9 534.0 L5.6 532.6 L4.3 533.0 L3.0 533.5 Z" fill="#e8891f"/><path d="M488.5 525 L510.5 484.5 L512.5 486 L531.5 521 L531.5 534.5 L512.5 573.5 L510.5 575 L490.0 533Z" fill="#e8891f"/><g clip-path="url(#bc0)"><rect x="160.0" y="190" width="340" height="700" fill="#e4871e"/><path d="M180.0 494.7 L183.0 487.8 L186.0 480.2 L189.0 471.3 L192.0 462.4 L195.0 453.2 L198.0 442.1 L201.0 431.0 L204.0 419.4 L207.0 407.3 L210.0 395.3 L213.0 381.2 L216.0 366.7 L219.0 351.7 L222.0 336.2 L225.0 321.5 L228.0 307.0 L231.0 292.5 L234.0 278.1 L237.0 265.1 L240.0 253.3 L243.0 241.6 L246.0 235.4 L249.0 229.4 L252.0 225.6 L255.0 221.9 L258.0 219.9 L261.0 221.1 L264.0 223.5 L267.0 226.0 L270.0 228.4 L273.0 230.6 L276.0 232.8 L279.0 234.9 L282.0 237.0 L285.0 239.1 L288.0 241.2 L291.0 243.3 L294.0 245.5 L297.0 247.6 L300.0 249.8 L303.0 251.9 L306.0 254.0 L309.0 256.2 L312.0 258.3 L315.0 260.4 L318.0 262.2 L321.0 264.1 L324.0 265.9 L327.0 267.8 L330.0 269.7 L333.0 271.5 L336.0 273.4 L339.0 275.1 L342.0 276.6 L345.0 278.1 L348.0 279.6 L351.0 281.1 L354.0 282.7 L357.0 284.2 L360.0 285.7 L363.0 287.5 L366.0 289.4 L369.0 291.4 L372.0 293.4 L375.0 295.4 L378.0 297.3 L381.0 300.8 L384.0 305.9 L387.0 310.9 L390.0 316.0 L393.0 321.9 L396.0 329.5 L399.0 337.1 L402.0 344.6 L405.0 353.3 L408.0 363.8 L411.0 374.2 L414.0 384.7 L417.0 395.2 L420.0 405.6 L423.0 416.0 L426.0 426.4 L429.0 436.8 L432.0 447.3 L435.0 457.7 L438.0 468.1 L441.0 478.7 L444.0 489.6 L447.0 500.5 L450.0 508.3 L453.0 509.8 L456.0 511.3 L459.0 512.8 L462.0 514.3 L465.0 515.7 L468.0 517.1 L470.0 536.9 L467.0 538.1 L464.0 539.2 L461.0 540.5 L458.0 541.9 L455.0 543.2 L452.0 547.1 L449.0 554.2 L446.0 561.2 L443.0 569.6 L440.0 580.8 L437.0 591.9 L434.0 603.1 L431.0 614.5 L428.0 627.2 L425.0 639.9 L422.0 652.7 L419.0 665.4 L416.0 676.6 L413.0 687.8 L410.0 698.9 L407.0 710.1 L404.0 720.7 L401.0 731.1 L398.0 741.5 L395.0 751.9 L392.0 760.9 L389.0 768.9 L386.0 776.9 L383.0 782.1 L380.0 783.8 L377.0 785.4 L374.0 787.1 L371.0 788.8 L368.0 790.4 L365.0 792.1 L362.0 793.8 L359.0 795.4 L356.0 797.1 L353.0 798.3 L350.0 799.4 L347.0 800.6 L344.0 801.8 L341.0 803.0 L338.0 804.2 L335.0 805.4 L332.0 806.6 L329.0 807.8 L326.0 809.0 L323.0 810.3 L320.0 811.8 L317.0 813.3 L314.0 814.8 L311.0 816.3 L308.0 817.8 L305.0 819.3 L302.0 820.8 L299.0 822.3 L296.0 823.8 L293.0 825.3 L290.0 827.6 L287.0 829.8 L284.0 832.1 L281.0 834.3 L278.0 836.5 L275.0 838.8 L272.0 841.0 L269.0 843.3 L266.0 845.5 L263.0 847.7 L260.0 849.0 L257.0 849.7 L254.0 844.0 L251.0 831.2 L248.0 818.4 L245.0 805.6 L242.0 792.8 L239.0 780.2 L236.0 767.5 L233.0 754.9 L230.0 742.4 L227.0 730.4 L224.0 718.5 L221.0 706.6 L218.0 694.7 L215.0 684.1 L212.0 673.6 L209.0 663.2 L206.0 652.7 L203.0 642.6 L200.0 631.4 L197.0 613.4 L194.0 597.1 L191.0 586.6 L188.0 576.1 L185.0 566.7 L182.0 557.9Z" fill="#e98b22"/><rect x="259.0" y="190" width="19" height="700" fill="#000" fill-opacity="0.02"/><rect x="278.0" y="190" width="15.5" height="700" fill="#000" fill-opacity="0.065"/><rect x="294.0" y="190" width="17" height="700" fill="#000" fill-opacity="0.075"/><rect x="311.0" y="190" width="33" height="700" fill="#000" fill-opacity="0.04"/><rect x="293.0" y="228" width="1.1" height="608" fill="#5a3a12"/></g><path d="M1070.8 525 L1092.8 484.5 L1094.8 486 L1113.8 521 L1113.8 534.5 L1094.8 573.5 L1092.8 575 L1072.3 533Z" fill="#e8891f"/><g clip-path="url(#bc1)"><rect x="742.3" y="190" width="340" height="700" fill="#e4871e"/><path d="M762.3 494.7 L765.3 487.8 L768.3 480.2 L771.3 471.3 L774.3 462.4 L777.3 453.2 L780.3 442.1 L783.3 431.0 L786.3 419.4 L789.3 407.3 L792.3 395.3 L795.3 381.2 L798.3 366.7 L801.3 351.7 L804.3 336.2 L807.3 321.5 L810.3 307.0 L813.3 292.5 L816.3 278.1 L819.3 265.1 L822.3 253.3 L825.3 241.6 L828.3 235.4 L831.3 229.4 L834.3 225.6 L837.3 221.9 L840.3 219.9 L843.3 221.1 L846.3 223.5 L849.3 226.0 L852.3 228.4 L855.3 230.6 L858.3 232.8 L861.3 234.9 L864.3 237.0 L867.3 239.1 L870.3 241.2 L873.3 243.3 L876.3 245.5 L879.3 247.6 L882.3 249.8 L885.3 251.9 L888.3 254.0 L891.3 256.2 L894.3 258.3 L897.3 260.4 L900.3 262.2 L903.3 264.1 L906.3 265.9 L909.3 267.8 L912.3 269.7 L915.3 271.5 L918.3 273.4 L921.3 275.1 L924.3 276.6 L927.3 278.1 L930.3 279.6 L933.3 281.1 L936.3 282.7 L939.3 284.2 L942.3 285.7 L945.3 287.5 L948.3 289.4 L951.3 291.4 L954.3 293.4 L957.3 295.4 L960.3 297.3 L963.3 300.8 L966.3 305.9 L969.3 310.9 L972.3 316.0 L975.3 321.9 L978.3 329.5 L981.3 337.1 L984.3 344.6 L987.3 353.3 L990.3 363.8 L993.3 374.2 L996.3 384.7 L999.3 395.2 L1002.3 405.6 L1005.3 416.0 L1008.3 426.4 L1011.3 436.8 L1014.3 447.3 L1017.3 457.7 L1020.3 468.1 L1023.3 478.7 L1026.3 489.6 L1029.3 500.5 L1032.3 508.3 L1035.3 509.8 L1038.3 511.3 L1041.3 512.8 L1044.3 514.3 L1047.3 515.7 L1050.3 517.1 L1052.3 536.9 L1049.3 538.1 L1046.3 539.2 L1043.3 540.5 L1040.3 541.9 L1037.3 543.2 L1034.3 547.1 L1031.3 554.2 L1028.3 561.2 L1025.3 569.6 L1022.3 580.8 L1019.3 591.9 L1016.3 603.1 L1013.3 614.5 L1010.3 627.2 L1007.3 639.9 L1004.3 652.7 L1001.3 665.4 L998.3 676.6 L995.3 687.8 L992.3 698.9 L989.3 710.1 L986.3 720.7 L983.3 731.1 L980.3 741.5 L977.3 751.9 L974.3 760.9 L971.3 768.9 L968.3 776.9 L965.3 782.1 L962.3 783.8 L959.3 785.4 L956.3 787.1 L953.3 788.8 L950.3 790.4 L947.3 792.1 L944.3 793.8 L941.3 795.4 L938.3 797.1 L935.3 798.3 L932.3 799.4 L929.3 800.6 L926.3 801.8 L923.3 803.0 L920.3 804.2 L917.3 805.4 L914.3 806.6 L911.3 807.8 L908.3 809.0 L905.3 810.3 L902.3 811.8 L899.3 813.3 L896.3 814.8 L893.3 816.3 L890.3 817.8 L887.3 819.3 L884.3 820.8 L881.3 822.3 L878.3 823.8 L875.3 825.3 L872.3 827.6 L869.3 829.8 L866.3 832.1 L863.3 834.3 L860.3 836.5 L857.3 838.8 L854.3 841.0 L851.3 843.3 L848.3 845.5 L845.3 847.7 L842.3 849.0 L839.3 849.7 L836.3 844.0 L833.3 831.2 L830.3 818.4 L827.3 805.6 L824.3 792.8 L821.3 780.2 L818.3 767.5 L815.3 754.9 L812.3 742.4 L809.3 730.4 L806.3 718.5 L803.3 706.6 L800.3 694.7 L797.3 684.1 L794.3 673.6 L791.3 663.2 L788.3 652.7 L785.3 642.6 L782.3 631.4 L779.3 613.4 L776.3 597.1 L773.3 586.6 L770.3 576.1 L767.3 566.7 L764.3 557.9Z" fill="#e98b22"/><rect x="841.3" y="190" width="19" height="700" fill="#000" fill-opacity="0.02"/><rect x="860.3" y="190" width="15.5" height="700" fill="#000" fill-opacity="0.065"/><rect x="876.3" y="190" width="17" height="700" fill="#000" fill-opacity="0.075"/><rect x="893.3" y="190" width="33" height="700" fill="#000" fill-opacity="0.04"/><rect x="875.3" y="228" width="1.1" height="608" fill="#5a3a12"/></g><path d="M1653.1 525 L1675.1 484.5 L1677.1 486 L1696.1 521 L1696.1 534.5 L1677.1 573.5 L1675.1 575 L1654.6 533Z" fill="#e8891f"/><g clip-path="url(#bc2)"><rect x="1324.6" y="190" width="340" height="700" fill="#e4871e"/><path d="M1344.6 494.7 L1347.6 487.8 L1350.6 480.2 L1353.6 471.3 L1356.6 462.4 L1359.6 453.2 L1362.6 442.1 L1365.6 431.0 L1368.6 419.4 L1371.6 407.3 L1374.6 395.3 L1377.6 381.2 L1380.6 366.7 L1383.6 351.7 L1386.6 336.2 L1389.6 321.5 L1392.6 307.0 L1395.6 292.5 L1398.6 278.1 L1401.6 265.1 L1404.6 253.3 L1407.6 241.6 L1410.6 235.4 L1413.6 229.4 L1416.6 225.6 L1419.6 221.9 L1422.6 219.9 L1425.6 221.1 L1428.6 223.5 L1431.6 226.0 L1434.6 228.4 L1437.6 230.6 L1440.6 232.8 L1443.6 234.9 L1446.6 237.0 L1449.6 239.1 L1452.6 241.2 L1455.6 243.3 L1458.6 245.5 L1461.6 247.6 L1464.6 249.8 L1467.6 251.9 L1470.6 254.0 L1473.6 256.2 L1476.6 258.3 L1479.6 260.4 L1482.6 262.2 L1485.6 264.1 L1488.6 265.9 L1491.6 267.8 L1494.6 269.7 L1497.6 271.5 L1500.6 273.4 L1503.6 275.1 L1506.6 276.6 L1509.6 278.1 L1512.6 279.6 L1515.6 281.1 L1518.6 282.7 L1521.6 284.2 L1524.6 285.7 L1527.6 287.5 L1530.6 289.4 L1533.6 291.4 L1536.6 293.4 L1539.6 295.4 L1542.6 297.3 L1545.6 300.8 L1548.6 305.9 L1551.6 310.9 L1554.6 316.0 L1557.6 321.9 L1560.6 329.5 L1563.6 337.1 L1566.6 344.6 L1569.6 353.3 L1572.6 363.8 L1575.6 374.2 L1578.6 384.7 L1581.6 395.2 L1584.6 405.6 L1587.6 416.0 L1590.6 426.4 L1593.6 436.8 L1596.6 447.3 L1599.6 457.7 L1602.6 468.1 L1605.6 478.7 L1608.6 489.6 L1611.6 500.5 L1614.6 508.3 L1617.6 509.8 L1620.6 511.3 L1623.6 512.8 L1626.6 514.3 L1629.6 515.7 L1632.6 517.1 L1634.6 536.9 L1631.6 538.1 L1628.6 539.2 L1625.6 540.5 L1622.6 541.9 L1619.6 543.2 L1616.6 547.1 L1613.6 554.2 L1610.6 561.2 L1607.6 569.6 L1604.6 580.8 L1601.6 591.9 L1598.6 603.1 L1595.6 614.5 L1592.6 627.2 L1589.6 639.9 L1586.6 652.7 L1583.6 665.4 L1580.6 676.6 L1577.6 687.8 L1574.6 698.9 L1571.6 710.1 L1568.6 720.7 L1565.6 731.1 L1562.6 741.5 L1559.6 751.9 L1556.6 760.9 L1553.6 768.9 L1550.6 776.9 L1547.6 782.1 L1544.6 783.8 L1541.6 785.4 L1538.6 787.1 L1535.6 788.8 L1532.6 790.4 L1529.6 792.1 L1526.6 793.8 L1523.6 795.4 L1520.6 797.1 L1517.6 798.3 L1514.6 799.4 L1511.6 800.6 L1508.6 801.8 L1505.6 803.0 L1502.6 804.2 L1499.6 805.4 L1496.6 806.6 L1493.6 807.8 L1490.6 809.0 L1487.6 810.3 L1484.6 811.8 L1481.6 813.3 L1478.6 814.8 L1475.6 816.3 L1472.6 817.8 L1469.6 819.3 L1466.6 820.8 L1463.6 822.3 L1460.6 823.8 L1457.6 825.3 L1454.6 827.6 L1451.6 829.8 L1448.6 832.1 L1445.6 834.3 L1442.6 836.5 L1439.6 838.8 L1436.6 841.0 L1433.6 843.3 L1430.6 845.5 L1427.6 847.7 L1424.6 849.0 L1421.6 849.7 L1418.6 844.0 L1415.6 831.2 L1412.6 818.4 L1409.6 805.6 L1406.6 792.8 L1403.6 780.2 L1400.6 767.5 L1397.6 754.9 L1394.6 742.4 L1391.6 730.4 L1388.6 718.5 L1385.6 706.6 L1382.6 694.7 L1379.6 684.1 L1376.6 673.6 L1373.6 663.2 L1370.6 652.7 L1367.6 642.6 L1364.6 631.4 L1361.6 613.4 L1358.6 597.1 L1355.6 586.6 L1352.6 576.1 L1349.6 566.7 L1346.6 557.9Z" fill="#e98b22"/><rect x="1423.6" y="190" width="19" height="700" fill="#000" fill-opacity="0.02"/><rect x="1442.6" y="190" width="15.5" height="700" fill="#000" fill-opacity="0.065"/><rect x="1458.6" y="190" width="17" height="700" fill="#000" fill-opacity="0.075"/><rect x="1475.6" y="190" width="33" height="700" fill="#000" fill-opacity="0.04"/><rect x="1457.6" y="228" width="1.1" height="608" fill="#5a3a12"/></g><text x="108.4" y="987" text-anchor="middle" font-size="13.5" fill="#bcbcbc">0 s</text><text x="283.1" y="987" text-anchor="middle" font-size="13.5" fill="#bcbcbc">100 ms</text><text x="457.8" y="987" text-anchor="middle" font-size="13.5" fill="#bcbcbc">200 ms</text><text x="632.5" y="987" text-anchor="middle" font-size="13.5" fill="#bcbcbc">300 ms</text><text x="807.2" y="987" text-anchor="middle" font-size="13.5" fill="#bcbcbc">400 ms</text><text x="981.9" y="987" text-anchor="middle" font-size="13.5" fill="#bcbcbc">500 ms</text><text x="1156.6" y="987" text-anchor="middle" font-size="13.5" fill="#bcbcbc">600 ms</text><text x="1331.3" y="987" text-anchor="middle" font-size="13.5" fill="#bcbcbc">700 ms</text><text x="1506.0" y="987" text-anchor="middle" font-size="13.5" fill="#bcbcbc">800 ms</text><text x="1680.7" y="987" text-anchor="middle" font-size="13.5" fill="#bcbcbc">900 ms</text><text x="1746" y="159.6" text-anchor="end" font-size="13" fill="#d28a3c">20 kV</text><text x="1746" y="253.1" text-anchor="end" font-size="13" fill="#d28a3c">15 kV</text><text x="1746" y="346.6" text-anchor="end" font-size="13" fill="#d28a3c">10 kV</text><text x="1746" y="440.1" text-anchor="end" font-size="13" fill="#d28a3c">5 kV</text><text x="1746" y="533.6" text-anchor="end" font-size="13" fill="#3a2008">0 V</text><text x="1746" y="627.1" text-anchor="end" font-size="13" fill="#d28a3c">-5 kV</text><text x="1746" y="720.6" text-anchor="end" font-size="13" fill="#d28a3c">-10 kV</text><text x="1746" y="814.1" text-anchor="end" font-size="13" fill="#d28a3c">-15 kV</text><text x="1746" y="907.6" text-anchor="end" font-size="13" fill="#d28a3c">-20 kV</text><path d="M108.4 93 V993" stroke="#d8d8d8" stroke-width="1.2" stroke-dasharray="5 4" fill="none"/><path d="M60 202 H1751" stroke="#f2f2f2" stroke-width="1.5" fill="none"/><path d="M60 527.4 H1751" stroke="#fff4dc" stroke-width="1.5" fill="none"/><path d="M60 529.8 H1751" stroke="#ffd8a8" stroke-opacity="0.45" stroke-width="1" stroke-dasharray="6 4" fill="none"/><path d="M64.5 204 V527" stroke="#cc2222" stroke-width="1.5" stroke-dasharray="5 2" fill="none"/><rect x="64.5" y="203.0" width="139.5" height="25" rx="3" fill="#3c3c3c" fill-opacity="0.88"/><text x="68.5" y="219.0" font-size="15" fill="#dcdcdc">v: 17.442 kV</text><rect x="64.5" y="351.5" width="139.5" height="25" rx="3" fill="#3c3c3c" fill-opacity="0.88"/><text x="68.5" y="367.5" font-size="15" fill="#dcdcdc">Δv: 17.342 kV</text><rect x="64.5" y="501.0" width="139.5" height="25" rx="3" fill="#3c3c3c" fill-opacity="0.88"/><text x="68.5" y="517.0" font-size="15" fill="#dcdcdc">v: 100.246 V</text><rect x="7" y="192.0" width="25" height="22" rx="4" fill="#3a3a3a" fill-opacity="0.8"/><circle cx="17.2" cy="203.0" r="8.6" fill="#3f8fd8"/><text x="17.2" y="207.8" text-anchor="middle" font-size="13" fill="#f0f0f0">B</text><rect x="30" y="193.4" width="30" height="19" rx="3.5" fill="#e8891f"/><text x="45" y="208.2" text-anchor="middle" font-size="14.5" fill="#2a1a08">M1</text><rect x="7" y="517.4" width="25" height="22" rx="4" fill="#3a3a3a" fill-opacity="0.8"/><circle cx="17.2" cy="528.4" r="8.6" fill="#3f8fd8"/><text x="17.2" y="533.2" text-anchor="middle" font-size="13" fill="#f0f0f0">A</text><rect x="30" y="518.8" width="30" height="19" rx="3.5" fill="#e8891f"/><text x="45" y="533.6" text-anchor="middle" font-size="14.5" fill="#2a1a08">M1</text><path d="M98.5 57 L118.5 57 L108.5 66.5Z" fill="#f0921e"/><path d="M99 68 H118 V87 H112 L108.5 91.5 L105 87 H99Z" fill="#000" stroke="#f0921e" stroke-width="1.8"/><text x="108.5" y="83.5" text-anchor="middle" font-size="14" font-weight="bold" fill="#e8a050">T</text><path d="M1711 64 L1742 64 Q1744 64 1744 66 L1744 97Z" fill="#4a4a4a"/><circle cx="1736.5" cy="72.5" r="4.3" fill="none" stroke="#bdbdbd" stroke-width="1.6"/><path d="M1733.5 75.5 L1727.5 81.5" stroke="#bdbdbd" stroke-width="2.4" stroke-linecap="round"/><path d="M1730 427 L1742 418 L1742 424 L1751 424 L1751 430 L1742 430 L1742 437Z" fill="#2bbccc"/></svg><div class="a rpanel"></div><div class="a" style="left:1770px;top:31px;width:150px;text-align:center;font-size:15px;font-weight:bold;color:#e8e8e8;line-height:18px">添加新...</div><div class="a btn" style="left:1778px;top:55px">光标</div><div class="a btn" style="left:1778px;top:101px">测量</div><div class="a btn" style="left:1778px;top:147px">结果表</div><div class="a btn" style="left:1850px;top:55px">Callout</div><div class="a btn" style="left:1850px;top:101px">搜索</div><div class="a btn" style="left:1850px;top:147px">绘图</div><div class="a sep" style="left:1775px;top:190px;width:140px"></div><div class="a btn" style="left:1778px;top:197px"><svg width="40" height="30" viewBox="0 0 40 30" style="margin-top:3px"><rect x="11" y="4" width="20" height="20" fill="none" stroke="#d8d8d8" stroke-width="2" stroke-dasharray="3 2.5"/><circle cx="21" cy="12" r="4.5" fill="none" stroke="#e0e0e0" stroke-width="1.8"/><path d="M17.5 15.5 L13 20" stroke="#e0e0e0" stroke-width="2"/><path d="M25 18 L25 28 L27.5 25.5 L30 29 L31.5 28 L29.2 24.5 L32.5 24Z" fill="#e0e0e0"/></svg></div><div class="a btn" style="left:1850px;top:197px">More...</div><div class="a sep" style="left:1775px;top:242px;width:140px"></div><div class="a meas" style="top:256px;height:75.5px"><div class="mh" style="">Meas 1<div class="badge">1</div></div><div class="mb">Frequency<br>μ': 433.6 kHz<br>Low amplitude</div></div><div class="a meas" style="top:340px;height:56.5px"><div class="mh" style="">Meas 2<div class="badge green">4</div></div><div class="mb">Unit Interval<br>μ': 994.1 ns</div></div><div class="a meas" style="top:405px;height:56.5px"><div class="mh" style="">Meas 3<div class="badge green">4</div></div><div class="mb">Positive Pulse Wi...<br>μ': 1.255 μs</div></div><div class="a meas" style="top:470px;height:56.5px"><div class="mh" style="">Meas 4<div class="badge">1</div></div><div class="mb">Peak-to-Peak<br>μ': 2.247 kV</div></div><div class="a meas" style="top:535px;height:75.5px"><div class="mh" style="">Meas 5<div class="badge">1</div></div><div class="mb">Frequency<br>μ': 433.6 kHz<br>Low amplitude</div></div><div class="a meas" style="top:619px;height:56.5px"><div class="mh" style="">Meas 6<div class="badge">1</div></div><div class="mb">Amplitude<br>μ': 2.249 V</div></div><div class="a meas" style="top:684px;height:56.5px"><div class="mh" style="background:#000;color:#f0e040">Meas 7<div class="badge">1</div></div><div class="mb">Amplitude<br>μ': 2.249 V</div></div><div class="a" style="left:1759.5px;top:501px;width:4.5px;height:4.5px;border-radius:50%;background:#c8c8c8"></div><div class="a" style="left:1759.5px;top:510px;width:4.5px;height:4.5px;border-radius:50%;background:#c8c8c8"></div><div class="a" style="left:1759.5px;top:518px;width:4.5px;height:4.5px;border-radius:50%;background:#c8c8c8"></div><div class="a" style="left:98px;top:998px;width:195px;height:80px;background:#1ec4d6;border-radius:5px"></div><div class="a card" style="left:3.0px;width:90.0px;background:#7b7b7b;"><div class="ch" style="background:#6b8a2c;color:#1c3810">Ch 4</div><div class="cl" style="top:18.2px;color:#1e1e1e">5 kV/div</div><div class="cl" style="top:37.4px;color:#1e1e1e">1 MΩ</div><div class="cl" style="top:56.6px;color:#1e1e1e">500 MHz<span class="bw">B<span style="position:relative;top:3px;font-size:9px">w</span></span></div></div><div class="a card" style="left:104.0px;width:88.5px;background:#78c9c9;"><div class="ch" style="background:#98e07a;color:#147060">Ch 1</div><div class="cl" style="top:18.2px;color:#0e6a6a">500 V/div</div><div class="cl" style="top:37.4px;color:#0e6a6a">50 Ω</div><div class="cl" style="top:56.6px;color:#0e6a6a">1 GHz</div></div><div class="a card" style="left:198.5px;width:89.5px;background:#d2d2d2;box-shadow:inset 0 0 0 1.5px #1a3a3a;"><div class="ch" style="background:#1e3b3b;color:#38c8c8">Ch 2</div><div class="cl" style="top:18.2px;color:#111">1 V/div</div><div class="cl" style="top:37.4px;color:#111">1 MΩ</div><div class="cl" style="top:56.6px;color:#111">500 MHz<span class="bw">B<span style="position:relative;top:3px;font-size:9px">w</span></span></div></div><div class="a card" style="left:298.0px;width:90.0px;background:#d0d0d0;"><div class="ch" style="background:#f0901e;color:#2a1808">Math 1</div><div class="cl" style="top:18.2px;color:#111">5 kV/div</div><div class="cl" style="top:37.4px;color:#111">Ch3 - Ch4</div></div><div class="a card" style="left:393.0px;width:90.0px;background:#7b7b7b;"><div class="ch" style="background:#a13546;color:#e88a98">Ch 3</div><div class="cl" style="top:18.2px;color:#1e1e1e">5 kV/div</div><div class="cl" style="top:37.4px;color:#1e1e1e">1 MΩ</div><div class="cl" style="top:56.6px;color:#1e1e1e">500 MHz<span class="bw">B<span style="position:relative;top:3px;font-size:9px">w</span></span></div></div><div class="a vsep" style="left:1118px"></div><div class="a vsep" style="left:1269px"></div><div class="a vbtn" style="left:1129px"><div class="ln" style="background:#7a3c92"></div><div style="position:absolute;left:0;right:0;top:33px;line-height:20px">数学</div></div><div class="a vbtn" style="left:1174px"><div class="ln" style="background:#e0e0e0"></div><div style="position:absolute;left:0;right:0;top:33px;line-height:20px">参考</div></div><div class="a vbtn" style="left:1219px"><div class="ln" style="background:#b468e0"></div><div style="position:absolute;left:0;right:0;top:33px;line-height:20px">总线</div></div><div class="a ic" style="left:1281px;width:198px"><div class="ich">水平</div><div class="icb">100 ms/div<span class="a" style="left:110px">1 s</span><br>SR: 1.25 MS/s<span class="a" style="left:110px;top:19px">800 ns/pt</span><br>RL: 1.25 Mpts<span class="a" style="left:124px;top:38px">6%</span></div></div><svg class="a" style="left:1390px;top:1061px" width="10" height="12" viewBox="0 0 10 12"><path d="M1 1H9V9H6L5 11L4 9H1Z" fill="#111" stroke="#e8902a" stroke-width="1.2"/><text x="5" y="8" text-anchor="middle" font-size="7" font-weight="bold" fill="#fff" font-family="Liberation Sans">T</text></svg><div class="a ic" style="left:1486px;width:158px"><div class="ich">触发</div><div class="icb" style="height:55px"></div></div><div class="a" style="left:1490px;top:1023px;width:29px;height:15.5px;border-radius:5px;background:#22c4d4;border:1px solid #1a4a50;box-sizing:border-box;font-weight:bold;font-size:14px;line-height:14px;text-align:center;color:#111">2</div><svg class="a" style="left:1529px;top:1023px" width="20" height="16" viewBox="0 0 20 16"><path d="M1 14.5 H5 L13 3 H17" stroke="#333" stroke-width="1.4" fill="none"/></svg><div class="a" style="left:1557px;top:1021px;font-weight:bold;font-size:15px;line-height:19px;color:#111">1.08 V</div><div class="a ic" style="left:1651px;width:148px"><div class="ich">采集</div><div class="icb" style="font-weight:normal">自动 ·<span class="a" style="left:82px">分析</span><br><b>取样: 12 bits</b><br><b>27</b> 采集</div></div><div class="a vsep" style="left:1811px;top:999px"></div><div class="a" style="left:1822px;top:999px;width:90px;height:36px;border-radius:6px;background:#f02424;color:#fff;font-size:14.5px;font-weight:bold;text-align:center;line-height:36px">已停止</div><div class="a" style="left:1822px;top:1041px;width:90px;height:36px;border-radius:5px;background:#d0d0d0;color:#111;font-size:15px;font-weight:bold;text-align:center;line-height:18px">25 Apr 2023<br>2:22:26 AM</div></body></html>
